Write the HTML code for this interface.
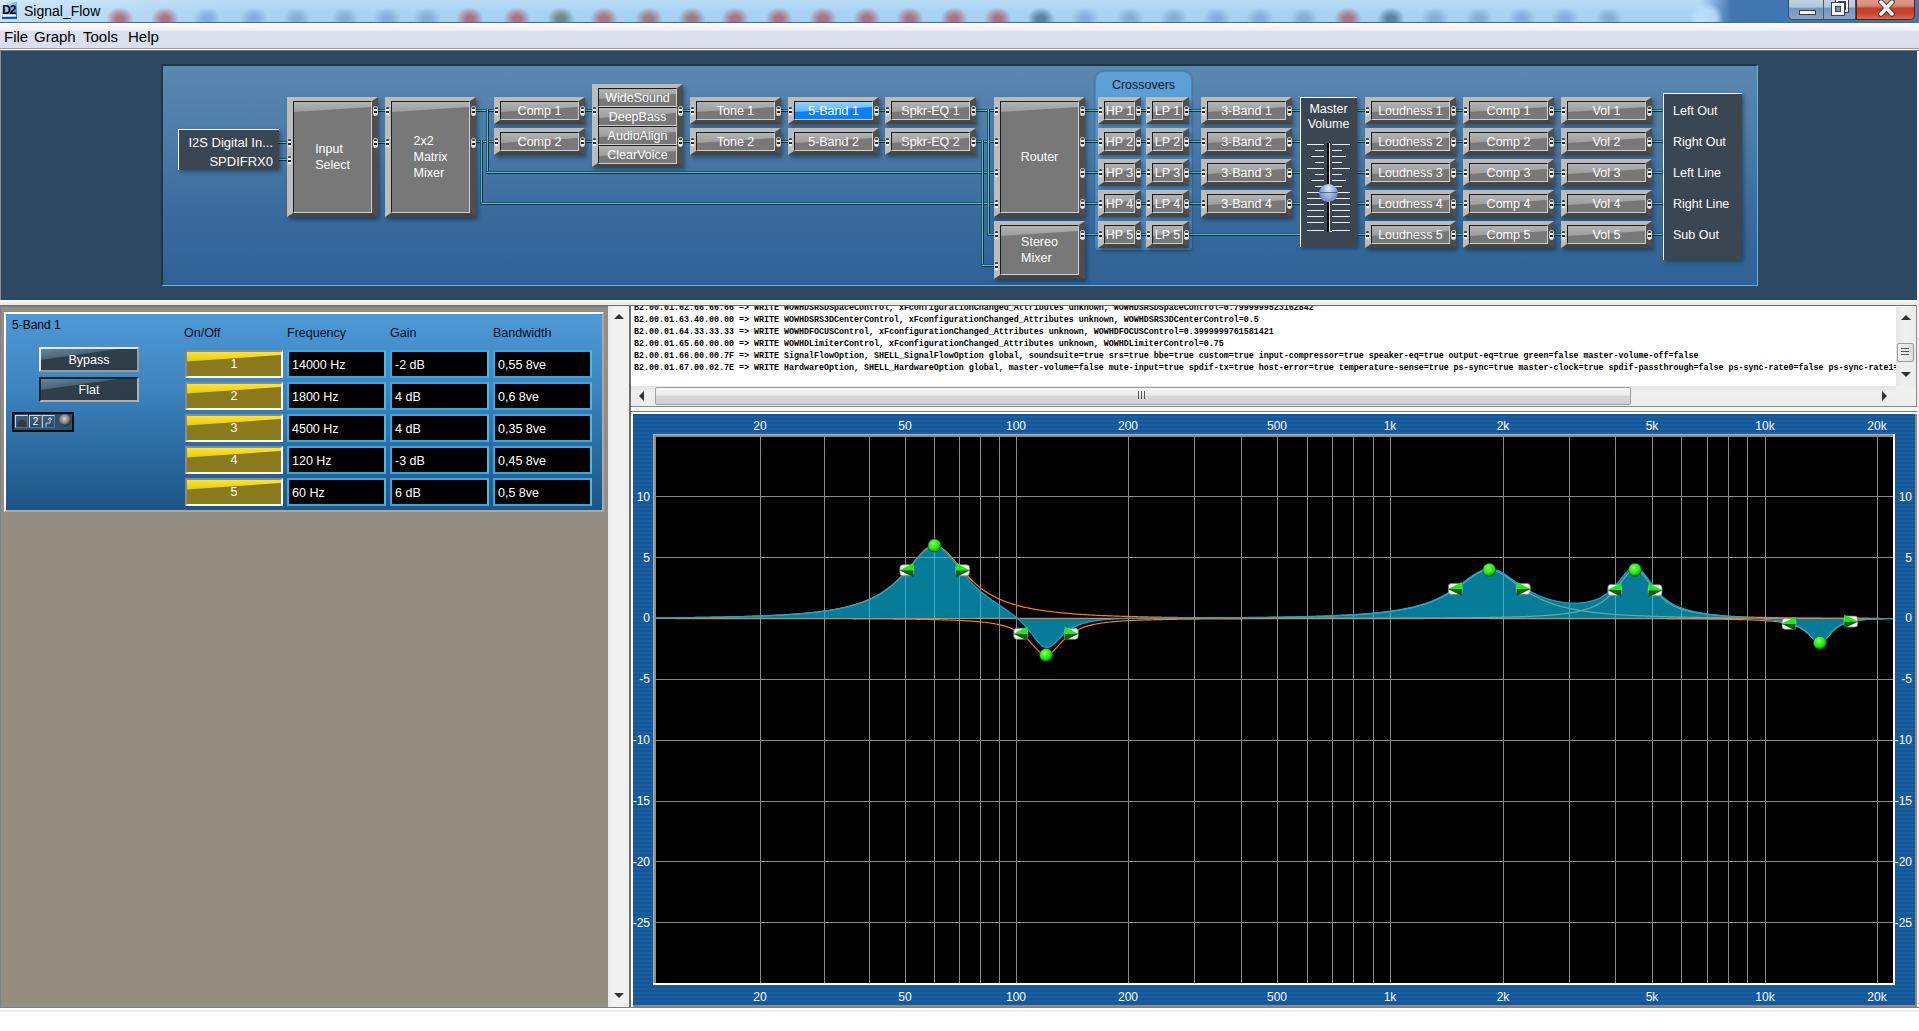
<!DOCTYPE html>
<html><head><meta charset="utf-8"><style>
*{margin:0;padding:0}
html,body{width:1919px;height:1031px;overflow:hidden;background:#fff;position:relative;font-family:'Liberation Sans',sans-serif}
.blk{position:absolute;box-sizing:border-box;border-top:4px solid #bababa;border-left:6px solid #bcbcbc;border-right:6px solid #4e4e4e;border-bottom:4px solid #454545;box-shadow:2px 3px 4px rgba(0,0,0,0.35);background:#777}
.inn{position:absolute;left:0;right:0;top:0;bottom:0;box-sizing:border-box;border-top:1px solid #1c1c1c;border-left:1px solid #1c1c1c;border-right:1px solid #d0d0d0;border-bottom:1px solid #d0d0d0;background:#787878;display:flex;align-items:center;justify-content:center;color:#fff;font-family:'Liberation Sans',sans-serif;white-space:nowrap}
.inn::before{content:'';position:absolute;left:0;top:0;right:0;height:11px;background:linear-gradient(180deg,#b2b2b2,#9a9a9a);clip-path:polygon(0 0,100% 0,100% 5px,0 10px)}
.inn.sel{background:#0a80ff}
.inn.sel::before{background:linear-gradient(180deg,#90d0ff,#5ab0ff)}
.lbl{display:inline-block;text-align:left;position:relative;z-index:1}
.wh{position:absolute;height:3px;background:linear-gradient(180deg,#1d5a72 0,#1d5a72 33.3%,#5ab8d0 33.3%,#5ab8d0 66.6%,#0e2f3c 66.6%)}
.wv{position:absolute;width:3px;background:linear-gradient(90deg,#1d5a72 0,#1d5a72 33.3%,#5ab8d0 33.3%,#5ab8d0 66.6%,#0e2f3c 66.6%)}
.pin{position:absolute;width:5px;height:10px;box-sizing:border-box;border:1px solid #c4c4c4;border-radius:2px;background:linear-gradient(180deg,#444 0,#444 30%,#fff 30%,#fff 55%,#2a2a2a 55%,#2a2a2a 72%,#f2f2f2 72%)}
.dbox{position:absolute;box-sizing:border-box;background:#3a4652;border-top:1px solid #fff;border-left:1px solid #fff;box-shadow:2px 2px 4px rgba(0,0,0,0.35)}
.onoff{position:absolute;left:185px;width:98px;height:28px;box-sizing:border-box;border-top:2px solid #8a8a8a;border-left:2px solid #8a8a8a;border-right:2px solid #fff;border-bottom:2px solid #fff;background:#8a7a1e;font-family:'Liberation Sans',sans-serif;font-size:12.5px;color:#fff;text-align:center;line-height:25px;overflow:hidden}
.onoff::before{content:'';position:absolute;left:0;top:0;right:0;height:10px;background:linear-gradient(180deg,#ffe428,#e4c818);clip-path:polygon(0 0,100% 0,100% 3px,0 9.5px)}
.al{position:absolute;text-align:center;color:#fff;font-family:'Liberation Sans',sans-serif;font-size:12px;line-height:16px}
</style></head><body>
<div id="title" style="position:absolute;left:0;top:0;width:1919px;height:23px;overflow:hidden;background:linear-gradient(180deg,#b9dcf6 0%,#a9d3f3 50%,#a6d0f0 100%);">
<div style="position:absolute;left:0;top:0;width:1919px;height:23px;background:linear-gradient(90deg,rgba(255,255,255,0.35) 0%,rgba(255,255,255,0) 12%,rgba(255,255,255,0) 80%,rgba(50,105,165,0) 88.6%,rgba(40,95,160,0.8) 90.2%,rgba(40,95,160,0.8) 100%)"></div>
<div style="position:absolute;left:106px;top:7px;width:28px;height:24px;border-radius:50%;background:radial-gradient(ellipse,rgba(170,75,95,0.7) 0%,rgba(170,75,95,0.7) 20%,rgba(255,255,255,0) 70%)"></div>
<div style="position:absolute;left:151px;top:7px;width:28px;height:24px;border-radius:50%;background:radial-gradient(ellipse,rgba(170,75,95,0.7) 0%,rgba(170,75,95,0.7) 20%,rgba(255,255,255,0) 70%)"></div>
<div style="position:absolute;left:193px;top:7px;width:28px;height:24px;border-radius:50%;background:radial-gradient(ellipse,rgba(70,125,185,0.4) 0%,rgba(70,125,185,0.4) 20%,rgba(255,255,255,0) 70%)"></div>
<div style="position:absolute;left:240px;top:7px;width:28px;height:24px;border-radius:50%;background:radial-gradient(ellipse,rgba(70,125,185,0.4) 0%,rgba(70,125,185,0.4) 20%,rgba(255,255,255,0) 70%)"></div>
<div style="position:absolute;left:283px;top:7px;width:28px;height:24px;border-radius:50%;background:radial-gradient(ellipse,rgba(70,125,185,0.4) 0%,rgba(70,125,185,0.4) 20%,rgba(255,255,255,0) 70%)"></div>
<div style="position:absolute;left:331px;top:7px;width:28px;height:24px;border-radius:50%;background:radial-gradient(ellipse,rgba(70,125,185,0.4) 0%,rgba(70,125,185,0.4) 20%,rgba(255,255,255,0) 70%)"></div>
<div style="position:absolute;left:373px;top:7px;width:28px;height:24px;border-radius:50%;background:radial-gradient(ellipse,rgba(70,125,185,0.4) 0%,rgba(70,125,185,0.4) 20%,rgba(255,255,255,0) 70%)"></div>
<div style="position:absolute;left:413px;top:7px;width:28px;height:24px;border-radius:50%;background:radial-gradient(ellipse,rgba(70,125,185,0.4) 0%,rgba(70,125,185,0.4) 20%,rgba(255,255,255,0) 70%)"></div>
<div style="position:absolute;left:456px;top:7px;width:28px;height:24px;border-radius:50%;background:radial-gradient(ellipse,rgba(170,75,95,0.7) 0%,rgba(170,75,95,0.7) 20%,rgba(255,255,255,0) 70%)"></div>
<div style="position:absolute;left:503px;top:7px;width:28px;height:24px;border-radius:50%;background:radial-gradient(ellipse,rgba(170,75,95,0.7) 0%,rgba(170,75,95,0.7) 20%,rgba(255,255,255,0) 70%)"></div>
<div style="position:absolute;left:547px;top:7px;width:28px;height:24px;border-radius:50%;background:radial-gradient(ellipse,rgba(80,110,90,0.7) 0%,rgba(80,110,90,0.7) 20%,rgba(255,255,255,0) 70%)"></div>
<div style="position:absolute;left:590px;top:7px;width:28px;height:24px;border-radius:50%;background:radial-gradient(ellipse,rgba(170,75,95,0.7) 0%,rgba(170,75,95,0.7) 20%,rgba(255,255,255,0) 70%)"></div>
<div style="position:absolute;left:635px;top:7px;width:28px;height:24px;border-radius:50%;background:radial-gradient(ellipse,rgba(150,90,90,0.7) 0%,rgba(150,90,90,0.7) 20%,rgba(255,255,255,0) 70%)"></div>
<div style="position:absolute;left:678px;top:7px;width:28px;height:24px;border-radius:50%;background:radial-gradient(ellipse,rgba(150,90,90,0.7) 0%,rgba(150,90,90,0.7) 20%,rgba(255,255,255,0) 70%)"></div>
<div style="position:absolute;left:721px;top:7px;width:28px;height:24px;border-radius:50%;background:radial-gradient(ellipse,rgba(170,75,95,0.7) 0%,rgba(170,75,95,0.7) 20%,rgba(255,255,255,0) 70%)"></div>
<div style="position:absolute;left:765px;top:7px;width:28px;height:24px;border-radius:50%;background:radial-gradient(ellipse,rgba(170,75,95,0.7) 0%,rgba(170,75,95,0.7) 20%,rgba(255,255,255,0) 70%)"></div>
<div style="position:absolute;left:809px;top:7px;width:28px;height:24px;border-radius:50%;background:radial-gradient(ellipse,rgba(170,75,95,0.7) 0%,rgba(170,75,95,0.7) 20%,rgba(255,255,255,0) 70%)"></div>
<div style="position:absolute;left:853px;top:7px;width:28px;height:24px;border-radius:50%;background:radial-gradient(ellipse,rgba(170,75,95,0.7) 0%,rgba(170,75,95,0.7) 20%,rgba(255,255,255,0) 70%)"></div>
<div style="position:absolute;left:896px;top:7px;width:28px;height:24px;border-radius:50%;background:radial-gradient(ellipse,rgba(170,75,95,0.7) 0%,rgba(170,75,95,0.7) 20%,rgba(255,255,255,0) 70%)"></div>
<div style="position:absolute;left:940px;top:7px;width:28px;height:24px;border-radius:50%;background:radial-gradient(ellipse,rgba(170,75,95,0.7) 0%,rgba(170,75,95,0.7) 20%,rgba(255,255,255,0) 70%)"></div>
<div style="position:absolute;left:984px;top:7px;width:28px;height:24px;border-radius:50%;background:radial-gradient(ellipse,rgba(170,75,95,0.7) 0%,rgba(170,75,95,0.7) 20%,rgba(255,255,255,0) 70%)"></div>
<div style="position:absolute;left:1027px;top:7px;width:28px;height:24px;border-radius:50%;background:radial-gradient(ellipse,rgba(40,80,110,0.6) 0%,rgba(40,80,110,0.6) 20%,rgba(255,255,255,0) 70%)"></div>
<div style="position:absolute;left:1071px;top:7px;width:28px;height:24px;border-radius:50%;background:radial-gradient(ellipse,rgba(70,125,185,0.4) 0%,rgba(70,125,185,0.4) 20%,rgba(255,255,255,0) 70%)"></div>
<div style="position:absolute;left:1116px;top:7px;width:28px;height:24px;border-radius:50%;background:radial-gradient(ellipse,rgba(70,125,185,0.4) 0%,rgba(70,125,185,0.4) 20%,rgba(255,255,255,0) 70%)"></div>
<div style="position:absolute;left:1160px;top:7px;width:28px;height:24px;border-radius:50%;background:radial-gradient(ellipse,rgba(70,125,185,0.4) 0%,rgba(70,125,185,0.4) 20%,rgba(255,255,255,0) 70%)"></div>
<div style="position:absolute;left:1203px;top:7px;width:28px;height:24px;border-radius:50%;background:radial-gradient(ellipse,rgba(70,125,185,0.4) 0%,rgba(70,125,185,0.4) 20%,rgba(255,255,255,0) 70%)"></div>
<div style="position:absolute;left:1246px;top:7px;width:28px;height:24px;border-radius:50%;background:radial-gradient(ellipse,rgba(70,125,185,0.4) 0%,rgba(70,125,185,0.4) 20%,rgba(255,255,255,0) 70%)"></div>
<div style="position:absolute;left:1290px;top:7px;width:28px;height:24px;border-radius:50%;background:radial-gradient(ellipse,rgba(70,125,185,0.4) 0%,rgba(70,125,185,0.4) 20%,rgba(255,255,255,0) 70%)"></div>
<div style="position:absolute;left:1334px;top:7px;width:28px;height:24px;border-radius:50%;background:radial-gradient(ellipse,rgba(170,75,95,0.7) 0%,rgba(170,75,95,0.7) 20%,rgba(255,255,255,0) 70%)"></div>
<div style="position:absolute;left:1377px;top:7px;width:28px;height:24px;border-radius:50%;background:radial-gradient(ellipse,rgba(40,80,110,0.6) 0%,rgba(40,80,110,0.6) 20%,rgba(255,255,255,0) 70%)"></div>
<div style="position:absolute;left:1421px;top:7px;width:28px;height:24px;border-radius:50%;background:radial-gradient(ellipse,rgba(70,125,185,0.4) 0%,rgba(70,125,185,0.4) 20%,rgba(255,255,255,0) 70%)"></div>
<div style="position:absolute;left:1465px;top:7px;width:28px;height:24px;border-radius:50%;background:radial-gradient(ellipse,rgba(70,125,185,0.4) 0%,rgba(70,125,185,0.4) 20%,rgba(255,255,255,0) 70%)"></div>
<div style="position:absolute;left:1508px;top:7px;width:28px;height:24px;border-radius:50%;background:radial-gradient(ellipse,rgba(70,125,185,0.4) 0%,rgba(70,125,185,0.4) 20%,rgba(255,255,255,0) 70%)"></div>
<div style="position:absolute;left:1551px;top:7px;width:28px;height:24px;border-radius:50%;background:radial-gradient(ellipse,rgba(70,125,185,0.4) 0%,rgba(70,125,185,0.4) 20%,rgba(255,255,255,0) 70%)"></div>
<div style="position:absolute;left:1595px;top:7px;width:28px;height:24px;border-radius:50%;background:radial-gradient(ellipse,rgba(70,125,185,0.4) 0%,rgba(70,125,185,0.4) 20%,rgba(255,255,255,0) 70%)"></div>
<div style="position:absolute;left:1688px;top:2px;width:36px;height:34px;border-radius:50%;background:radial-gradient(circle,rgba(190,225,255,0.9) 0%,rgba(190,225,255,0.8) 40%,rgba(190,225,255,0) 70%)"></div>
<svg style="position:absolute;left:1px;top:1px" width="18" height="18" viewBox="0 0 18 18"><defs><linearGradient id="ig" x1="0" y1="0" x2="1" y2="1"><stop offset="0" stop-color="#f0f6ff"/><stop offset="0.45" stop-color="#8cc0f0"/><stop offset="1" stop-color="#1a64b0"/></linearGradient></defs><rect x="1" y="1" width="15" height="17" fill="url(#ig)"/><text x="1.2" y="12.5" font-family="Liberation Sans" font-weight="bold" font-size="12" letter-spacing="-1.2" fill="#000">D2</text><rect x="2" y="13.5" width="13" height="2" fill="#fff"/><rect x="1" y="16" width="15" height="2" fill="#0a5aa8"/></svg>
<div style="position:absolute;left:24px;top:3px;font:14px 'Liberation Sans',sans-serif;color:#000;">Signal_Flow</div>
<div style="position:absolute;left:1788px;top:-3px;width:68px;height:23px;border:1px solid #3a4a60;border-top:none;border-radius:0 0 0 5px;background:linear-gradient(180deg,#c8d8ea 0%,#b0c6de 45%,#7595bb 52%,#8aa6c8 100%);box-sizing:border-box"></div>
<div style="position:absolute;left:1823px;top:0;width:1px;height:19px;background:#4a5a70"></div>
<div style="position:absolute;left:1856px;top:-3px;width:59px;height:23px;border:1px solid #5a2018;border-top:none;border-radius:0 0 5px 0;background:linear-gradient(180deg,#e6a090 0%,#d88a78 40%,#c24028 52%,#c84a30 80%,#dc7050 100%);box-sizing:border-box"></div>
<svg style="position:absolute;left:1788px;top:0" width="130" height="20" viewBox="0 0 130 20"><rect x="11.5" y="10.5" width="16" height="4" fill="#f4f4f4" stroke="#3a4050" stroke-width="1"/><rect x="47.5" y="-1.5" width="13" height="14" fill="#f4f4f4" stroke="#3a4050" stroke-width="1"/><rect x="50.5" y="1.5" width="7" height="8" fill="#8aa0c0" stroke="#3a4050" stroke-width="1"/><rect x="43.5" y="2.5" width="13" height="13" fill="#f4f4f4" stroke="#3a4050" stroke-width="1"/><rect x="47.5" y="6.5" width="5" height="5" fill="#7a90b0" stroke="#3a4050" stroke-width="1"/><path d="M93,2 L104,14 M104,2 L93,14" stroke="#3a3a3a" stroke-width="5.5" stroke-linecap="round"/><path d="M93,2 L104,14 M104,2 L93,14" stroke="#f2f2f2" stroke-width="3.5" stroke-linecap="round"/></svg>
</div>
<div style="position:absolute;left:0;top:22px;width:1919px;height:1px;background:#4a6a88"></div>
<div style="position:absolute;left:0;top:23px;width:1919px;height:25px;background:linear-gradient(180deg,#fbfcfe 0%,#f0f2f8 28%,#dde1ef 34%,#dadeee 100%)"></div>
<div style="position:absolute;left:4px;top:28px;font:15px 'Liberation Sans',sans-serif;color:#000">File</div>
<div style="position:absolute;left:34px;top:28px;font:15px 'Liberation Sans',sans-serif;color:#000">Graph</div>
<div style="position:absolute;left:83px;top:28px;font:15px 'Liberation Sans',sans-serif;color:#000">Tools</div>
<div style="position:absolute;left:128px;top:28px;font:15px 'Liberation Sans',sans-serif;color:#000">Help</div>
<div style="position:absolute;left:0;top:48px;width:1919px;height:1px;background:#9a9a9a"></div>
<div style="position:absolute;left:0;top:49px;width:1919px;height:1px;background:#ffffff"></div>
<div style="position:absolute;left:0;top:50px;width:1919px;height:1px;background:#707070"></div>
<div style="position:absolute;left:0;top:51px;width:1918px;height:249px;background:#2d4862"></div>
<div style="position:absolute;left:0;top:51px;width:1px;height:249px;background:#8a8e94"></div>
<div style="position:absolute;left:0;top:300px;width:1919px;height:2px;background:#fdfdfd"></div>
<div style="position:absolute;left:0;top:302px;width:1919px;height:3px;background:#eeeeee"></div>
<div style="position:absolute;left:0;top:305px;width:1919px;height:1px;background:#6a6a6a"></div>
<div style="position:absolute;left:1917px;top:51px;width:2px;height:956px;background:#f0f0f0"></div>
<div style="position:absolute;left:161px;top:64px;width:1597px;height:222px;box-sizing:border-box;border-top:2px solid #1b3846;border-left:2px solid #1b3846;border-right:1px solid #62b8dc;border-bottom:1px solid #62b8dc;background:linear-gradient(180deg,#5b88af 0%,#4b7ba8 35%,#3a6c9e 65%,#2f6294 100%)"></div>
<div style="position:absolute;left:1095px;top:71px;width:97px;height:179px;box-sizing:border-box;border-radius:9px 9px 3px 3px;border:1px solid #4a88bb;background:linear-gradient(180deg,#5ea2d8 0%,#5096cf 50%,#4a8cc6 100%);box-shadow:0 0 2px rgba(20,50,80,0.4)"></div>
<div style="position:absolute;left:1095px;top:78px;width:97px;text-align:center;font-family:'Liberation Sans',sans-serif;font-size:12.5px;color:#0c1830">Crossovers</div>
<div class="wh" style="left:279px;top:141px;width:11px"></div>
<div class="wh" style="left:279px;top:158px;width:11px"></div>
<div class="wh" style="left:375px;top:109px;width:15px"></div>
<div class="wh" style="left:375px;top:141px;width:15px"></div>
<div class="wh" style="left:473px;top:109px;width:24px"></div>
<div class="wh" style="left:473px;top:140px;width:24px"></div>
<div class="wv" style="left:486px;top:109px;height:65px"></div>
<div class="wh" style="left:487px;top:171px;width:510px"></div>
<div class="wv" style="left:480px;top:140px;height:65px"></div>
<div class="wh" style="left:481px;top:202px;width:516px"></div>
<div class="wh" style="left:582px;top:109px;width:13px"></div>
<div class="wh" style="left:582px;top:140px;width:13px"></div>
<div class="wh" style="left:680px;top:109px;width:13px"></div>
<div class="wh" style="left:680px;top:140px;width:13px"></div>
<div class="wh" style="left:778px;top:109px;width:13px"></div>
<div class="wh" style="left:778px;top:140px;width:13px"></div>
<div class="wh" style="left:876px;top:109px;width:12px"></div>
<div class="wh" style="left:876px;top:140px;width:12px"></div>
<div class="wh" style="left:973px;top:109px;width:24px"></div>
<div class="wh" style="left:973px;top:140px;width:24px"></div>
<div class="wv" style="left:987px;top:109px;height:127px"></div>
<div class="wh" style="left:988px;top:233px;width:9px"></div>
<div class="wv" style="left:981px;top:140px;height:127px"></div>
<div class="wh" style="left:982px;top:264px;width:15px"></div>
<div class="wh" style="left:1082px;top:109px;width:19px"></div>
<div class="wh" style="left:1138px;top:109px;width:11px"></div>
<div class="wh" style="left:1186px;top:109px;width:18px"></div>
<div class="wh" style="left:1289px;top:109px;width:11px"></div>
<div class="wh" style="left:1357px;top:109px;width:11px"></div>
<div class="wh" style="left:1453px;top:109px;width:13px"></div>
<div class="wh" style="left:1551px;top:109px;width:13px"></div>
<div class="wh" style="left:1649px;top:109px;width:14px"></div>
<div class="wh" style="left:1082px;top:140px;width:19px"></div>
<div class="wh" style="left:1138px;top:140px;width:11px"></div>
<div class="wh" style="left:1186px;top:140px;width:18px"></div>
<div class="wh" style="left:1289px;top:140px;width:11px"></div>
<div class="wh" style="left:1357px;top:140px;width:11px"></div>
<div class="wh" style="left:1453px;top:140px;width:13px"></div>
<div class="wh" style="left:1551px;top:140px;width:13px"></div>
<div class="wh" style="left:1649px;top:140px;width:14px"></div>
<div class="wh" style="left:1082px;top:171px;width:19px"></div>
<div class="wh" style="left:1138px;top:171px;width:11px"></div>
<div class="wh" style="left:1186px;top:171px;width:18px"></div>
<div class="wh" style="left:1289px;top:171px;width:11px"></div>
<div class="wh" style="left:1357px;top:171px;width:11px"></div>
<div class="wh" style="left:1453px;top:171px;width:13px"></div>
<div class="wh" style="left:1551px;top:171px;width:13px"></div>
<div class="wh" style="left:1649px;top:171px;width:14px"></div>
<div class="wh" style="left:1082px;top:202px;width:19px"></div>
<div class="wh" style="left:1138px;top:202px;width:11px"></div>
<div class="wh" style="left:1186px;top:202px;width:18px"></div>
<div class="wh" style="left:1289px;top:202px;width:11px"></div>
<div class="wh" style="left:1357px;top:202px;width:11px"></div>
<div class="wh" style="left:1453px;top:202px;width:13px"></div>
<div class="wh" style="left:1551px;top:202px;width:13px"></div>
<div class="wh" style="left:1649px;top:202px;width:14px"></div>
<div class="wh" style="left:1082px;top:233px;width:19px"></div>
<div class="wh" style="left:1138px;top:233px;width:11px"></div>
<div class="wh" style="left:1186px;top:233px;width:114px"></div>
<div class="wh" style="left:1357px;top:233px;width:11px"></div>
<div class="wh" style="left:1453px;top:233px;width:13px"></div>
<div class="wh" style="left:1551px;top:233px;width:13px"></div>
<div class="wh" style="left:1649px;top:233px;width:14px"></div>
<div class="dbox" style="left:178px;top:129px;width:101px;height:41px"></div>
<div style="position:absolute;left:178px;top:133px;width:95px;text-align:right;font-family:'Liberation Sans',sans-serif;font-size:13px;line-height:19px;color:#fff">I2S Digital In...<br>SPDIFRX0</div>
<div class="blk" style="left:287px;top:97px;width:91px;height:120px"><div class="inn" style="font-size:12.5px;line-height:16px;"><div class="lbl">Input<br>Select</div></div></div><div class="pin" style="left:287px;top:138px"></div><div class="pin" style="left:287px;top:155px"></div><div class="pin" style="left:373px;top:106px"></div><div class="pin" style="left:373px;top:138px"></div>
<div class="blk" style="left:385px;top:97px;width:91px;height:120px"><div class="inn" style="font-size:12.5px;line-height:16px;"><div class="lbl">2x2<br>Matrix<br>Mixer</div></div></div><div class="pin" style="left:385px;top:106px"></div><div class="pin" style="left:385px;top:138px"></div><div class="pin" style="left:471px;top:106px"></div><div class="pin" style="left:471px;top:138px"></div>
<div class="blk" style="left:494px;top:97px;width:91px;height:27px"><div class="inn" style="font-size:12.5px;"><div class="lbl">Comp 1</div></div></div><div class="pin" style="left:494px;top:106px"></div><div class="pin" style="left:580px;top:106px"></div>
<div class="blk" style="left:690px;top:97px;width:91px;height:27px"><div class="inn" style="font-size:12.5px;"><div class="lbl">Tone 1</div></div></div><div class="pin" style="left:690px;top:106px"></div><div class="pin" style="left:776px;top:106px"></div>
<div class="blk" style="left:788px;top:97px;width:91px;height:27px"><div class="inn sel" style="font-size:12.5px;"><div class="lbl">5-Band 1</div></div></div><div class="pin" style="left:788px;top:106px"></div><div class="pin" style="left:874px;top:106px"></div>
<div class="blk" style="left:885px;top:97px;width:91px;height:27px"><div class="inn" style="font-size:12.5px;"><div class="lbl">Spkr-EQ 1</div></div></div><div class="pin" style="left:885px;top:106px"></div><div class="pin" style="left:971px;top:106px"></div>
<div class="blk" style="left:494px;top:128px;width:91px;height:27px"><div class="inn" style="font-size:12.5px;"><div class="lbl">Comp 2</div></div></div><div class="pin" style="left:494px;top:137px"></div><div class="pin" style="left:580px;top:137px"></div>
<div class="blk" style="left:690px;top:128px;width:91px;height:27px"><div class="inn" style="font-size:12.5px;"><div class="lbl">Tone 2</div></div></div><div class="pin" style="left:690px;top:137px"></div><div class="pin" style="left:776px;top:137px"></div>
<div class="blk" style="left:788px;top:128px;width:91px;height:27px"><div class="inn" style="font-size:12.5px;"><div class="lbl">5-Band 2</div></div></div><div class="pin" style="left:788px;top:137px"></div><div class="pin" style="left:874px;top:137px"></div>
<div class="blk" style="left:885px;top:128px;width:91px;height:27px"><div class="inn" style="font-size:12.5px;"><div class="lbl">Spkr-EQ 2</div></div></div><div class="pin" style="left:885px;top:137px"></div><div class="pin" style="left:971px;top:137px"></div>
<div class="blk" style="left:592px;top:84px;width:91px;height:83px">
<div class="inn" style="top:0px;height:19px;bottom:auto;font-size:12.5px"><div class="lbl">WideSound</div></div>
<div class="inn" style="top:19px;height:19px;bottom:auto;font-size:12.5px"><div class="lbl">DeepBass</div></div>
<div class="inn" style="top:38px;height:19px;bottom:auto;font-size:12.5px"><div class="lbl">AudioAlign</div></div>
<div class="inn" style="top:57px;height:19px;bottom:auto;font-size:12.5px"><div class="lbl">ClearVoice</div></div>
</div>
<div class="pin" style="left:592px;top:106px"></div>
<div class="pin" style="left:592px;top:137px"></div>
<div class="pin" style="left:678px;top:106px"></div>
<div class="pin" style="left:678px;top:137px"></div>
<div class="blk" style="left:994px;top:97px;width:91px;height:120px"><div class="inn" style="font-size:12.5px;"><div class="lbl">Router</div></div></div><div class="pin" style="left:994px;top:106px"></div><div class="pin" style="left:994px;top:137px"></div><div class="pin" style="left:994px;top:168px"></div><div class="pin" style="left:994px;top:199px"></div><div class="pin" style="left:1080px;top:106px"></div><div class="pin" style="left:1080px;top:137px"></div><div class="pin" style="left:1080px;top:168px"></div><div class="pin" style="left:1080px;top:199px"></div>
<div class="blk" style="left:994px;top:221px;width:91px;height:58px"><div class="inn" style="font-size:12.5px;line-height:16px;"><div class="lbl">Stereo<br>Mixer</div></div></div><div class="pin" style="left:994px;top:230px"></div><div class="pin" style="left:994px;top:261px"></div><div class="pin" style="left:1080px;top:230px"></div>
<div class="blk" style="left:1098px;top:97px;width:43px;height:27px"><div class="inn" style="font-size:12.5px;"><div class="lbl">HP 1</div></div></div><div class="pin" style="left:1098px;top:106px"></div><div class="pin" style="left:1136px;top:106px"></div>
<div class="blk" style="left:1146px;top:97px;width:43px;height:27px"><div class="inn" style="font-size:12.5px;"><div class="lbl">LP 1</div></div></div><div class="pin" style="left:1146px;top:106px"></div><div class="pin" style="left:1184px;top:106px"></div>
<div class="blk" style="left:1201px;top:97px;width:91px;height:27px"><div class="inn" style="font-size:12.5px;"><div class="lbl">3-Band 1</div></div></div><div class="pin" style="left:1201px;top:106px"></div><div class="pin" style="left:1287px;top:106px"></div>
<div class="blk" style="left:1365px;top:97px;width:91px;height:27px"><div class="inn" style="font-size:12.5px;"><div class="lbl">Loudness 1</div></div></div><div class="pin" style="left:1365px;top:106px"></div><div class="pin" style="left:1451px;top:106px"></div>
<div class="blk" style="left:1463px;top:97px;width:91px;height:27px"><div class="inn" style="font-size:12.5px;"><div class="lbl">Comp 1</div></div></div><div class="pin" style="left:1463px;top:106px"></div><div class="pin" style="left:1549px;top:106px"></div>
<div class="blk" style="left:1561px;top:97px;width:91px;height:27px"><div class="inn" style="font-size:12.5px;"><div class="lbl">Vol 1</div></div></div><div class="pin" style="left:1561px;top:106px"></div><div class="pin" style="left:1647px;top:106px"></div>
<div class="blk" style="left:1098px;top:128px;width:43px;height:27px"><div class="inn" style="font-size:12.5px;"><div class="lbl">HP 2</div></div></div><div class="pin" style="left:1098px;top:137px"></div><div class="pin" style="left:1136px;top:137px"></div>
<div class="blk" style="left:1146px;top:128px;width:43px;height:27px"><div class="inn" style="font-size:12.5px;"><div class="lbl">LP 2</div></div></div><div class="pin" style="left:1146px;top:137px"></div><div class="pin" style="left:1184px;top:137px"></div>
<div class="blk" style="left:1201px;top:128px;width:91px;height:27px"><div class="inn" style="font-size:12.5px;"><div class="lbl">3-Band 2</div></div></div><div class="pin" style="left:1201px;top:137px"></div><div class="pin" style="left:1287px;top:137px"></div>
<div class="blk" style="left:1365px;top:128px;width:91px;height:27px"><div class="inn" style="font-size:12.5px;"><div class="lbl">Loudness 2</div></div></div><div class="pin" style="left:1365px;top:137px"></div><div class="pin" style="left:1451px;top:137px"></div>
<div class="blk" style="left:1463px;top:128px;width:91px;height:27px"><div class="inn" style="font-size:12.5px;"><div class="lbl">Comp 2</div></div></div><div class="pin" style="left:1463px;top:137px"></div><div class="pin" style="left:1549px;top:137px"></div>
<div class="blk" style="left:1561px;top:128px;width:91px;height:27px"><div class="inn" style="font-size:12.5px;"><div class="lbl">Vol 2</div></div></div><div class="pin" style="left:1561px;top:137px"></div><div class="pin" style="left:1647px;top:137px"></div>
<div class="blk" style="left:1098px;top:159px;width:43px;height:27px"><div class="inn" style="font-size:12.5px;"><div class="lbl">HP 3</div></div></div><div class="pin" style="left:1098px;top:168px"></div><div class="pin" style="left:1136px;top:168px"></div>
<div class="blk" style="left:1146px;top:159px;width:43px;height:27px"><div class="inn" style="font-size:12.5px;"><div class="lbl">LP 3</div></div></div><div class="pin" style="left:1146px;top:168px"></div><div class="pin" style="left:1184px;top:168px"></div>
<div class="blk" style="left:1201px;top:159px;width:91px;height:27px"><div class="inn" style="font-size:12.5px;"><div class="lbl">3-Band 3</div></div></div><div class="pin" style="left:1201px;top:168px"></div><div class="pin" style="left:1287px;top:168px"></div>
<div class="blk" style="left:1365px;top:159px;width:91px;height:27px"><div class="inn" style="font-size:12.5px;"><div class="lbl">Loudness 3</div></div></div><div class="pin" style="left:1365px;top:168px"></div><div class="pin" style="left:1451px;top:168px"></div>
<div class="blk" style="left:1463px;top:159px;width:91px;height:27px"><div class="inn" style="font-size:12.5px;"><div class="lbl">Comp 3</div></div></div><div class="pin" style="left:1463px;top:168px"></div><div class="pin" style="left:1549px;top:168px"></div>
<div class="blk" style="left:1561px;top:159px;width:91px;height:27px"><div class="inn" style="font-size:12.5px;"><div class="lbl">Vol 3</div></div></div><div class="pin" style="left:1561px;top:168px"></div><div class="pin" style="left:1647px;top:168px"></div>
<div class="blk" style="left:1098px;top:190px;width:43px;height:27px"><div class="inn" style="font-size:12.5px;"><div class="lbl">HP 4</div></div></div><div class="pin" style="left:1098px;top:199px"></div><div class="pin" style="left:1136px;top:199px"></div>
<div class="blk" style="left:1146px;top:190px;width:43px;height:27px"><div class="inn" style="font-size:12.5px;"><div class="lbl">LP 4</div></div></div><div class="pin" style="left:1146px;top:199px"></div><div class="pin" style="left:1184px;top:199px"></div>
<div class="blk" style="left:1201px;top:190px;width:91px;height:27px"><div class="inn" style="font-size:12.5px;"><div class="lbl">3-Band 4</div></div></div><div class="pin" style="left:1201px;top:199px"></div><div class="pin" style="left:1287px;top:199px"></div>
<div class="blk" style="left:1365px;top:190px;width:91px;height:27px"><div class="inn" style="font-size:12.5px;"><div class="lbl">Loudness 4</div></div></div><div class="pin" style="left:1365px;top:199px"></div><div class="pin" style="left:1451px;top:199px"></div>
<div class="blk" style="left:1463px;top:190px;width:91px;height:27px"><div class="inn" style="font-size:12.5px;"><div class="lbl">Comp 4</div></div></div><div class="pin" style="left:1463px;top:199px"></div><div class="pin" style="left:1549px;top:199px"></div>
<div class="blk" style="left:1561px;top:190px;width:91px;height:27px"><div class="inn" style="font-size:12.5px;"><div class="lbl">Vol 4</div></div></div><div class="pin" style="left:1561px;top:199px"></div><div class="pin" style="left:1647px;top:199px"></div>
<div class="blk" style="left:1098px;top:221px;width:43px;height:27px"><div class="inn" style="font-size:12.5px;"><div class="lbl">HP 5</div></div></div><div class="pin" style="left:1098px;top:230px"></div><div class="pin" style="left:1136px;top:230px"></div>
<div class="blk" style="left:1146px;top:221px;width:43px;height:27px"><div class="inn" style="font-size:12.5px;"><div class="lbl">LP 5</div></div></div><div class="pin" style="left:1146px;top:230px"></div><div class="pin" style="left:1184px;top:230px"></div>
<div class="blk" style="left:1365px;top:221px;width:91px;height:27px"><div class="inn" style="font-size:12.5px;"><div class="lbl">Loudness 5</div></div></div><div class="pin" style="left:1365px;top:230px"></div><div class="pin" style="left:1451px;top:230px"></div>
<div class="blk" style="left:1463px;top:221px;width:91px;height:27px"><div class="inn" style="font-size:12.5px;"><div class="lbl">Comp 5</div></div></div><div class="pin" style="left:1463px;top:230px"></div><div class="pin" style="left:1549px;top:230px"></div>
<div class="blk" style="left:1561px;top:221px;width:91px;height:27px"><div class="inn" style="font-size:12.5px;"><div class="lbl">Vol 5</div></div></div><div class="pin" style="left:1561px;top:230px"></div><div class="pin" style="left:1647px;top:230px"></div>
<div class="dbox" style="left:1300px;top:97px;width:57px;height:150px"></div>
<div style="position:absolute;left:1300px;top:102px;width:57px;text-align:center;font-family:'Liberation Sans',sans-serif;font-size:12.5px;line-height:14.5px;color:#fff">Master<br>Volume</div>
<div style="position:absolute;left:1307px;top:144px;width:17px;height:1px;background:#f0f0f0"></div>
<div style="position:absolute;left:1332px;top:144px;width:18px;height:1px;background:#f0f0f0"></div>
<div style="position:absolute;left:1315px;top:150px;width:9px;height:1px;background:#f0f0f0"></div>
<div style="position:absolute;left:1332px;top:150px;width:10px;height:1px;background:#f0f0f0"></div>
<div style="position:absolute;left:1311px;top:156px;width:13px;height:1px;background:#f0f0f0"></div>
<div style="position:absolute;left:1332px;top:156px;width:14px;height:1px;background:#f0f0f0"></div>
<div style="position:absolute;left:1315px;top:162px;width:9px;height:1px;background:#f0f0f0"></div>
<div style="position:absolute;left:1332px;top:162px;width:10px;height:1px;background:#f0f0f0"></div>
<div style="position:absolute;left:1307px;top:168px;width:17px;height:1px;background:#f0f0f0"></div>
<div style="position:absolute;left:1332px;top:168px;width:18px;height:1px;background:#f0f0f0"></div>
<div style="position:absolute;left:1315px;top:174px;width:9px;height:1px;background:#f0f0f0"></div>
<div style="position:absolute;left:1332px;top:174px;width:10px;height:1px;background:#f0f0f0"></div>
<div style="position:absolute;left:1311px;top:180px;width:13px;height:1px;background:#f0f0f0"></div>
<div style="position:absolute;left:1332px;top:180px;width:14px;height:1px;background:#f0f0f0"></div>
<div style="position:absolute;left:1315px;top:186px;width:9px;height:1px;background:#f0f0f0"></div>
<div style="position:absolute;left:1332px;top:186px;width:10px;height:1px;background:#f0f0f0"></div>
<div style="position:absolute;left:1307px;top:192px;width:17px;height:1px;background:#f0f0f0"></div>
<div style="position:absolute;left:1332px;top:192px;width:18px;height:1px;background:#f0f0f0"></div>
<div style="position:absolute;left:1307px;top:198px;width:17px;height:1px;background:#f0f0f0"></div>
<div style="position:absolute;left:1332px;top:198px;width:18px;height:1px;background:#f0f0f0"></div>
<div style="position:absolute;left:1307px;top:204px;width:17px;height:1px;background:#f0f0f0"></div>
<div style="position:absolute;left:1332px;top:204px;width:18px;height:1px;background:#f0f0f0"></div>
<div style="position:absolute;left:1307px;top:210px;width:17px;height:1px;background:#f0f0f0"></div>
<div style="position:absolute;left:1332px;top:210px;width:18px;height:1px;background:#f0f0f0"></div>
<div style="position:absolute;left:1307px;top:216px;width:17px;height:1px;background:#f0f0f0"></div>
<div style="position:absolute;left:1332px;top:216px;width:18px;height:1px;background:#f0f0f0"></div>
<div style="position:absolute;left:1307px;top:222px;width:17px;height:1px;background:#f0f0f0"></div>
<div style="position:absolute;left:1332px;top:222px;width:18px;height:1px;background:#f0f0f0"></div>
<div style="position:absolute;left:1307px;top:230px;width:17px;height:1px;background:#f0f0f0"></div>
<div style="position:absolute;left:1332px;top:230px;width:18px;height:1px;background:#f0f0f0"></div>
<div style="position:absolute;left:1327px;top:143px;width:2px;height:89px;background:#000;border-right:1px solid #ddd"></div>
<div style="position:absolute;left:1329px;top:231px;width:3px;height:1px;background:#ddd"></div>
<div style="position:absolute;left:1319px;top:184px;width:19px;height:18px;border-radius:50%;background:radial-gradient(ellipse at 50% 25%,#e8eeff 0%,#a8b8e0 35%,#7088c8 75%,#5068a8 100%);box-shadow:0 0 1px #223"></div>
<div style="position:absolute;left:1320px;top:192px;width:17px;height:1px;background:rgba(60,80,130,0.8)"></div>
<div class="dbox" style="left:1663px;top:93px;width:79px;height:167px"></div>
<div style="position:absolute;left:1673px;top:103.5px;font-family:'Liberation Sans',sans-serif;font-size:12.5px;color:#fff">Left Out</div>
<div style="position:absolute;left:1673px;top:134.5px;font-family:'Liberation Sans',sans-serif;font-size:12.5px;color:#fff">Right Out</div>
<div style="position:absolute;left:1673px;top:165.5px;font-family:'Liberation Sans',sans-serif;font-size:12.5px;color:#fff">Left Line</div>
<div style="position:absolute;left:1673px;top:196.5px;font-family:'Liberation Sans',sans-serif;font-size:12.5px;color:#fff">Right Line</div>
<div style="position:absolute;left:1673px;top:227.5px;font-family:'Liberation Sans',sans-serif;font-size:12.5px;color:#fff">Sub Out</div>
<div style="position:absolute;left:0;top:306px;width:608px;height:701px;background:#968d81"></div>
<div style="position:absolute;left:0;top:306px;width:1px;height:701px;background:#7a8290"></div>
<div style="position:absolute;left:0;top:306px;width:608px;height:1px;background:#7a8290"></div>
<div style="position:absolute;left:4px;top:312px;width:600px;height:200px;box-sizing:border-box;border-top:2px solid #fff;border-left:2px solid #fff;border-right:2px solid #a8a8a8;border-bottom:2px solid #a8a8a8;background:linear-gradient(180deg,#4d9ad6 0%,#3d84c0 38%,#2c6ca2 68%,#1c5586 100%)"></div>
<div style="position:absolute;left:12px;top:318px;font-family:'Liberation Sans',sans-serif;font-size:12px;color:#000">5-Band 1</div>
<div style="position:absolute;left:184px;top:326px;font-family:'Liberation Sans',sans-serif;font-size:12.5px;color:#06101e">On/Off</div>
<div style="position:absolute;left:287px;top:326px;font-family:'Liberation Sans',sans-serif;font-size:12.5px;color:#06101e">Frequency</div>
<div style="position:absolute;left:390px;top:326px;font-family:'Liberation Sans',sans-serif;font-size:12.5px;color:#06101e">Gain</div>
<div style="position:absolute;left:493px;top:326px;font-family:'Liberation Sans',sans-serif;font-size:12.5px;color:#06101e">Bandwidth</div>
<div style="position:absolute;left:39px;top:347px;width:100px;height:25px;box-sizing:border-box;border-top:2px solid #e8e8e8;border-left:2px solid #e8e8e8;border-right:2px solid #9a9a9a;border-bottom:2px solid #9a9a9a;background:linear-gradient(172deg,#6a8598 0%,#4d6576 30%,#2e3f4c 33%,#2c3c48 100%);font-family:'Liberation Sans',sans-serif;font-size:12.5px;color:#fff;text-align:center;line-height:23px">Bypass</div>
<div style="position:absolute;left:39px;top:377px;width:100px;height:25px;box-sizing:border-box;border-top:2px solid #1a2630;border-left:2px solid #1a2630;border-right:2px solid #b0b0b0;border-bottom:2px solid #b0b0b0;background:linear-gradient(172deg,#6a8598 0%,#4d6576 30%,#2e3f4c 33%,#2c3c48 100%);font-family:'Liberation Sans',sans-serif;font-size:12.5px;color:#fff;text-align:center;line-height:23px">Flat</div>
<div style="position:absolute;left:12px;top:412px;width:62px;height:20px;box-sizing:border-box;border:2px solid #0a0e14;background:#2a5070"></div>
<div style="position:absolute;left:15.0px;top:415px;width:13px;height:13px;box-sizing:border-box;border-top:1px solid #c8d0d8;border-left:1px solid #c8d0d8;border-right:1px solid #607080;border-bottom:1px solid #607080;background:linear-gradient(180deg,#3a6080,#2a4a68)"></div>
<div style="position:absolute;left:28.5px;top:415px;width:13px;height:13px;box-sizing:border-box;border-top:1px solid #c8d0d8;border-left:1px solid #c8d0d8;border-right:1px solid #607080;border-bottom:1px solid #607080;background:linear-gradient(180deg,#3a6080,#2a4a68)"></div>
<div style="position:absolute;left:42.0px;top:415px;width:13px;height:13px;box-sizing:border-box;border-top:1px solid #c8d0d8;border-left:1px solid #c8d0d8;border-right:1px solid #607080;border-bottom:1px solid #607080;background:linear-gradient(180deg,#3a6080,#2a4a68)"></div>
<div style="position:absolute;left:18px;top:420px;width:8px;height:7px;border-radius:4px 4px 0 0;background:#303840"></div>
<div style="position:absolute;left:29px;top:415px;width:13px;text-align:center;font-family:'Liberation Sans',sans-serif;font-size:10px;line-height:13px;color:#fff">2</div>
<svg style="position:absolute;left:43px;top:415px" width="13" height="13"><path d="M3,12 V8 H7 V3 M5,5 L7,2.5 L9,5" stroke="#c8d0d8" stroke-width="1" fill="none"/></svg>
<div style="position:absolute;left:59px;top:414px;width:12px;height:12px;border-radius:50%;background:radial-gradient(circle at 45% 40%,#d0d0d0 0%,#808080 45%,#202020 75%,#000 100%)"></div>
<div class="onoff" style="top:350px">1</div>
<div style="position:absolute;left:287px;top:350px;width:99px;height:28px;box-sizing:border-box;border:2px solid #3aa8dc;border-right-color:#4ab8e8;background:#000;font-family:'Liberation Sans',sans-serif;font-size:12.5px;color:#fff;line-height:26px;padding-left:3px">14000 Hz</div>
<div style="position:absolute;left:390px;top:350px;width:99px;height:28px;box-sizing:border-box;border:2px solid #3aa8dc;border-right-color:#4ab8e8;background:#000;font-family:'Liberation Sans',sans-serif;font-size:12.5px;color:#fff;line-height:26px;padding-left:3px">-2 dB</div>
<div style="position:absolute;left:493px;top:350px;width:99px;height:28px;box-sizing:border-box;border:2px solid #3aa8dc;border-right-color:#4ab8e8;background:#000;font-family:'Liberation Sans',sans-serif;font-size:12.5px;color:#fff;line-height:26px;padding-left:3px">0,55 8ve</div>
<div class="onoff" style="top:382px">2</div>
<div style="position:absolute;left:287px;top:382px;width:99px;height:28px;box-sizing:border-box;border:2px solid #3aa8dc;border-right-color:#4ab8e8;background:#000;font-family:'Liberation Sans',sans-serif;font-size:12.5px;color:#fff;line-height:26px;padding-left:3px">1800 Hz</div>
<div style="position:absolute;left:390px;top:382px;width:99px;height:28px;box-sizing:border-box;border:2px solid #3aa8dc;border-right-color:#4ab8e8;background:#000;font-family:'Liberation Sans',sans-serif;font-size:12.5px;color:#fff;line-height:26px;padding-left:3px">4 dB</div>
<div style="position:absolute;left:493px;top:382px;width:99px;height:28px;box-sizing:border-box;border:2px solid #3aa8dc;border-right-color:#4ab8e8;background:#000;font-family:'Liberation Sans',sans-serif;font-size:12.5px;color:#fff;line-height:26px;padding-left:3px">0,6 8ve</div>
<div class="onoff" style="top:414px">3</div>
<div style="position:absolute;left:287px;top:414px;width:99px;height:28px;box-sizing:border-box;border:2px solid #3aa8dc;border-right-color:#4ab8e8;background:#000;font-family:'Liberation Sans',sans-serif;font-size:12.5px;color:#fff;line-height:26px;padding-left:3px">4500 Hz</div>
<div style="position:absolute;left:390px;top:414px;width:99px;height:28px;box-sizing:border-box;border:2px solid #3aa8dc;border-right-color:#4ab8e8;background:#000;font-family:'Liberation Sans',sans-serif;font-size:12.5px;color:#fff;line-height:26px;padding-left:3px">4 dB</div>
<div style="position:absolute;left:493px;top:414px;width:99px;height:28px;box-sizing:border-box;border:2px solid #3aa8dc;border-right-color:#4ab8e8;background:#000;font-family:'Liberation Sans',sans-serif;font-size:12.5px;color:#fff;line-height:26px;padding-left:3px">0,35 8ve</div>
<div class="onoff" style="top:446px">4</div>
<div style="position:absolute;left:287px;top:446px;width:99px;height:28px;box-sizing:border-box;border:2px solid #3aa8dc;border-right-color:#4ab8e8;background:#000;font-family:'Liberation Sans',sans-serif;font-size:12.5px;color:#fff;line-height:26px;padding-left:3px">120 Hz</div>
<div style="position:absolute;left:390px;top:446px;width:99px;height:28px;box-sizing:border-box;border:2px solid #3aa8dc;border-right-color:#4ab8e8;background:#000;font-family:'Liberation Sans',sans-serif;font-size:12.5px;color:#fff;line-height:26px;padding-left:3px">-3 dB</div>
<div style="position:absolute;left:493px;top:446px;width:99px;height:28px;box-sizing:border-box;border:2px solid #3aa8dc;border-right-color:#4ab8e8;background:#000;font-family:'Liberation Sans',sans-serif;font-size:12.5px;color:#fff;line-height:26px;padding-left:3px">0,45 8ve</div>
<div class="onoff" style="top:478px">5</div>
<div style="position:absolute;left:287px;top:478px;width:99px;height:28px;box-sizing:border-box;border:2px solid #3aa8dc;border-right-color:#4ab8e8;background:#000;font-family:'Liberation Sans',sans-serif;font-size:12.5px;color:#fff;line-height:26px;padding-left:3px">60 Hz</div>
<div style="position:absolute;left:390px;top:478px;width:99px;height:28px;box-sizing:border-box;border:2px solid #3aa8dc;border-right-color:#4ab8e8;background:#000;font-family:'Liberation Sans',sans-serif;font-size:12.5px;color:#fff;line-height:26px;padding-left:3px">6 dB</div>
<div style="position:absolute;left:493px;top:478px;width:99px;height:28px;box-sizing:border-box;border:2px solid #3aa8dc;border-right-color:#4ab8e8;background:#000;font-family:'Liberation Sans',sans-serif;font-size:12.5px;color:#fff;line-height:26px;padding-left:3px">0,5 8ve</div>
<div style="position:absolute;left:608px;top:306px;width:21px;height:701px;background:linear-gradient(90deg,#e8e8e8 0%,#f2f2f2 30%,#f0f0f0 100%)"></div>
<div style="position:absolute;left:629px;top:306px;width:2px;height:701px;background:#6e6e6e"></div>
<div style="position:absolute;left:614px;top:314px;width:0;height:0;border-left:5px solid transparent;border-right:5px solid transparent;border-bottom:5px solid #333"></div>
<div style="position:absolute;left:614px;top:993px;width:0;height:0;border-left:5px solid transparent;border-right:5px solid transparent;border-top:5px solid #333"></div>
<div style="position:absolute;left:631px;top:306px;width:1286px;height:100px;background:#fff"></div>
<div style="position:absolute;left:634px;top:306px;width:1262px;height:80px;overflow:hidden">
<div style="position:absolute;left:0;top:-4px;white-space:pre;font-family:'Liberation Mono',monospace;font-size:8.33px;line-height:12px;color:#000;font-weight:bold;-webkit-text-stroke:0px">B2.00.01.62.66.66.66 => WRITE WOWHDSRSDSpaceControl, xFconfigurationChanged_Attributes unknown, WOWHDSRSDSpaceControl=0.7999999523162842</div>
<div style="position:absolute;left:0;top:8px;white-space:pre;font-family:'Liberation Mono',monospace;font-size:8.33px;line-height:12px;color:#000;font-weight:bold;-webkit-text-stroke:0px">B2.00.01.63.40.00.00 => WRITE WOWHDSRS3DCenterControl, xFconfigurationChanged_Attributes unknown, WOWHDSRS3DCenterControl=0.5</div>
<div style="position:absolute;left:0;top:20px;white-space:pre;font-family:'Liberation Mono',monospace;font-size:8.33px;line-height:12px;color:#000;font-weight:bold;-webkit-text-stroke:0px">B2.00.01.64.33.33.33 => WRITE WOWHDFOCUSControl, xFconfigurationChanged_Attributes unknown, WOWHDFOCUSControl=0.3999999761581421</div>
<div style="position:absolute;left:0;top:32px;white-space:pre;font-family:'Liberation Mono',monospace;font-size:8.33px;line-height:12px;color:#000;font-weight:bold;-webkit-text-stroke:0px">B2.00.01.65.60.00.00 => WRITE WOWHDLimiterControl, xFconfigurationChanged_Attributes unknown, WOWHDLimiterControl=0.75</div>
<div style="position:absolute;left:0;top:44px;white-space:pre;font-family:'Liberation Mono',monospace;font-size:8.33px;line-height:12px;color:#000;font-weight:bold;-webkit-text-stroke:0px">B2.00.01.66.00.00.7F => WRITE SignalFlowOption, SHELL_SignalFlowOption global, soundsuite=true srs=true bbe=true custom=true input-compressor=true speaker-eq=true output-eq=true green=false master-volume-off=false</div>
<div style="position:absolute;left:0;top:56px;white-space:pre;font-family:'Liberation Mono',monospace;font-size:8.33px;line-height:12px;color:#000;font-weight:bold;-webkit-text-stroke:0px">B2.00.01.67.00.02.7E => WRITE HardwareOption, SHELL_HardwareOption global, master-volume=false mute-input=true spdif-tx=true host-error=true temperature-sense=true ps-sync=true master-clock=true spdif-passthrough=false ps-sync-rate0=false ps-sync-rate1=false</div>
</div>
<div style="position:absolute;left:1896px;top:307px;width:20px;height:79px;background:linear-gradient(90deg,#e6e6e6,#f0f0f0 40%,#ececec)"></div>
<div style="position:absolute;left:1901px;top:315px;width:0;height:0;border-left:5px solid transparent;border-right:5px solid transparent;border-bottom:5px solid #333"></div>
<div style="position:absolute;left:1901px;top:372px;width:0;height:0;border-left:5px solid transparent;border-right:5px solid transparent;border-top:5px solid #333"></div>
<div style="position:absolute;left:1897px;top:343px;width:17px;height:19px;box-sizing:border-box;border:1px solid #9a9a9a;border-radius:2px;background:linear-gradient(90deg,#f4f4f4,#dcdcdc)"></div>
<div style="position:absolute;left:1901px;top:348px;width:8px;height:1px;background:#555"></div>
<div style="position:absolute;left:1901px;top:351px;width:8px;height:1px;background:#555"></div>
<div style="position:absolute;left:1901px;top:354px;width:8px;height:1px;background:#555"></div>
<div style="position:absolute;left:631px;top:386px;width:1265px;height:20px;background:linear-gradient(180deg,#e4e4e4,#efefef 30%,#ececec)"></div>
<div style="position:absolute;left:1896px;top:386px;width:20px;height:20px;background:#f0f0f0"></div>
<div style="position:absolute;left:639px;top:391px;width:0;height:0;border-top:5px solid transparent;border-bottom:5px solid transparent;border-right:5px solid #333"></div>
<div style="position:absolute;left:1882px;top:391px;width:0;height:0;border-top:5px solid transparent;border-bottom:5px solid transparent;border-left:5px solid #333"></div>
<div style="position:absolute;left:655px;top:387px;width:976px;height:18px;box-sizing:border-box;border:1px solid #a0a0a0;border-radius:2px;background:linear-gradient(180deg,#f6f6f6 0%,#ececec 45%,#d8d8da 50%,#d0d0d2 100%)"></div>
<div style="position:absolute;left:1138px;top:391px;width:1px;height:8px;background:#555"></div>
<div style="position:absolute;left:1141px;top:391px;width:1px;height:8px;background:#555"></div>
<div style="position:absolute;left:1144px;top:391px;width:1px;height:8px;background:#555"></div>
<div style="position:absolute;left:631px;top:406px;width:1286px;height:1px;background:#8a8a8a"></div>
<div style="position:absolute;left:1916px;top:306px;width:1px;height:100px;background:#8a8a8a"></div>
<div style="position:absolute;left:631px;top:407px;width:1286px;height:4px;background:#f6f6f6"></div>
<div style="position:absolute;left:631px;top:411px;width:1286px;height:1px;background:#7a7a7a"></div>
<div style="position:absolute;left:631px;top:412px;width:1286px;height:595px;background:#fff"></div>
<div style="position:absolute;left:633px;top:414px;width:1284px;height:593px;box-sizing:border-box;border-right:2px solid #8a8a8a;border-bottom:2px solid #8a8a8a;background:repeating-linear-gradient(180deg,#13569a 0px,#13569a 2px,#1a5e9e 2px,#1a5e9e 4px)"></div>
<svg style="position:absolute;left:0;top:0" width="1919" height="1031" viewBox="0 0 1919 1031">
<defs>
<radialGradient id="ball" cx="0.42" cy="0.35" r="0.65"><stop offset="0" stop-color="#e0ffd8"/><stop offset="0.22" stop-color="#50ff30"/><stop offset="0.65" stop-color="#22e810"/><stop offset="0.9" stop-color="#10a008"/><stop offset="1" stop-color="#086008"/></radialGradient>
</defs>
<rect x="653" y="434" width="242" height="1" fill="#b0aaa8"/>
<rect x="653" y="434" width="1242" height="551" fill="#ffffff"/>
<rect x="653" y="434" width="1240" height="549" fill="#8c8c8c"/>
<rect x="653" y="434" width="1240" height="1" fill="#b4aeac"/>
<rect x="653" y="434" width="1" height="549" fill="#b4aeac"/>
<rect x="656" y="437" width="1237" height="546" fill="#000"/>
<rect x="760" y="437" width="1" height="546" fill="#8a8a8a"/>
<rect x="824" y="437" width="1" height="546" fill="#8a8a8a"/>
<rect x="869" y="437" width="1" height="546" fill="#8a8a8a"/>
<rect x="905" y="437" width="1" height="546" fill="#8a8a8a"/>
<rect x="934" y="437" width="1" height="546" fill="#8a8a8a"/>
<rect x="959" y="437" width="1" height="546" fill="#8a8a8a"/>
<rect x="980" y="437" width="1" height="546" fill="#8a8a8a"/>
<rect x="999" y="437" width="1" height="546" fill="#8a8a8a"/>
<rect x="1016" y="437" width="1" height="546" fill="#8a8a8a"/>
<rect x="1128" y="437" width="1" height="546" fill="#8a8a8a"/>
<rect x="1194" y="437" width="1" height="546" fill="#8a8a8a"/>
<rect x="1241" y="437" width="1" height="546" fill="#8a8a8a"/>
<rect x="1277" y="437" width="1" height="546" fill="#8a8a8a"/>
<rect x="1307" y="437" width="1" height="546" fill="#8a8a8a"/>
<rect x="1332" y="437" width="1" height="546" fill="#8a8a8a"/>
<rect x="1353" y="437" width="1" height="546" fill="#8a8a8a"/>
<rect x="1373" y="437" width="1" height="546" fill="#8a8a8a"/>
<rect x="1390" y="437" width="1" height="546" fill="#8a8a8a"/>
<rect x="1503" y="437" width="1" height="546" fill="#8a8a8a"/>
<rect x="1569" y="437" width="1" height="546" fill="#8a8a8a"/>
<rect x="1615" y="437" width="1" height="546" fill="#8a8a8a"/>
<rect x="1652" y="437" width="1" height="546" fill="#8a8a8a"/>
<rect x="1681" y="437" width="1" height="546" fill="#8a8a8a"/>
<rect x="1707" y="437" width="1" height="546" fill="#8a8a8a"/>
<rect x="1728" y="437" width="1" height="546" fill="#8a8a8a"/>
<rect x="1747" y="437" width="1" height="546" fill="#8a8a8a"/>
<rect x="1765" y="437" width="1" height="546" fill="#8a8a8a"/>
<rect x="1877" y="437" width="1" height="546" fill="#8a8a8a"/>
<rect x="656" y="496" width="1237" height="1" fill="#8a8a8a"/>
<rect x="656" y="557" width="1237" height="1" fill="#8a8a8a"/>
<rect x="656" y="618" width="1237" height="1" fill="#8a8a8a"/>
<rect x="656" y="679" width="1237" height="1" fill="#8a8a8a"/>
<rect x="656" y="740" width="1237" height="1" fill="#8a8a8a"/>
<rect x="656" y="801" width="1237" height="1" fill="#8a8a8a"/>
<rect x="656" y="861" width="1237" height="1" fill="#8a8a8a"/>
<rect x="656" y="922" width="1237" height="1" fill="#8a8a8a"/>
<path d="M656.0,618.50 L657.0,618.50 L658.0,618.50 L659.0,618.50 L660.0,618.50 L661.0,618.50 L662.0,618.50 L663.0,618.50 L664.0,618.50 L665.0,618.50 L666.0,618.50 L667.0,618.50 L668.0,618.50 L669.0,618.50 L670.0,618.50 L671.0,618.50 L672.0,618.50 L673.0,618.50 L674.0,618.50 L675.0,618.50 L676.0,618.50 L677.0,618.50 L678.0,618.50 L679.0,618.50 L680.0,618.50 L681.0,618.50 L682.0,618.50 L683.0,618.50 L684.0,618.50 L685.0,618.50 L686.0,618.50 L687.0,618.50 L688.0,618.50 L689.0,618.50 L690.0,618.50 L691.0,618.50 L692.0,618.50 L693.0,618.50 L694.0,618.50 L695.0,618.50 L696.0,618.50 L697.0,618.50 L698.0,618.50 L699.0,618.50 L700.0,618.50 L701.0,618.50 L702.0,618.50 L703.0,618.50 L704.0,618.50 L705.0,618.50 L706.0,618.50 L707.0,618.50 L708.0,618.50 L709.0,618.50 L710.0,618.50 L711.0,618.50 L712.0,618.50 L713.0,618.50 L714.0,618.50 L715.0,618.50 L716.0,618.50 L717.0,618.50 L718.0,618.50 L719.0,618.50 L720.0,618.50 L721.0,618.50 L722.0,618.50 L723.0,618.50 L724.0,618.50 L725.0,618.50 L726.0,618.50 L727.0,618.50 L728.0,618.50 L729.0,618.50 L730.0,618.50 L731.0,618.50 L732.0,618.50 L733.0,618.50 L734.0,618.50 L735.0,618.50 L736.0,618.50 L737.0,618.50 L738.0,618.50 L739.0,618.50 L740.0,618.50 L741.0,618.50 L742.0,618.50 L743.0,618.50 L744.0,618.50 L745.0,618.50 L746.0,618.50 L747.0,618.50 L748.0,618.50 L749.0,618.50 L750.0,618.50 L751.0,618.50 L752.0,618.50 L753.0,618.50 L754.0,618.50 L755.0,618.50 L756.0,618.50 L757.0,618.50 L758.0,618.50 L759.0,618.50 L760.0,618.50 L761.0,618.50 L762.0,618.50 L763.0,618.50 L764.0,618.50 L765.0,618.50 L766.0,618.50 L767.0,618.50 L768.0,618.50 L769.0,618.50 L770.0,618.50 L771.0,618.50 L772.0,618.50 L773.0,618.50 L774.0,618.50 L775.0,618.50 L776.0,618.50 L777.0,618.50 L778.0,618.50 L779.0,618.50 L780.0,618.50 L781.0,618.50 L782.0,618.50 L783.0,618.50 L784.0,618.50 L785.0,618.50 L786.0,618.50 L787.0,618.50 L788.0,618.50 L789.0,618.50 L790.0,618.50 L791.0,618.50 L792.0,618.50 L793.0,618.50 L794.0,618.50 L795.0,618.50 L796.0,618.50 L797.0,618.50 L798.0,618.50 L799.0,618.50 L800.0,618.50 L801.0,618.50 L802.0,618.50 L803.0,618.50 L804.0,618.50 L805.0,618.50 L806.0,618.50 L807.0,618.50 L808.0,618.50 L809.0,618.50 L810.0,618.50 L811.0,618.50 L812.0,618.50 L813.0,618.50 L814.0,618.50 L815.0,618.50 L816.0,618.50 L817.0,618.50 L818.0,618.50 L819.0,618.50 L820.0,618.50 L821.0,618.50 L822.0,618.50 L823.0,618.50 L824.0,618.50 L825.0,618.50 L826.0,618.50 L827.0,618.50 L828.0,618.50 L829.0,618.50 L830.0,618.50 L831.0,618.50 L832.0,618.50 L833.0,618.50 L834.0,618.50 L835.0,618.50 L836.0,618.50 L837.0,618.50 L838.0,618.50 L839.0,618.50 L840.0,618.50 L841.0,618.50 L842.0,618.50 L843.0,618.50 L844.0,618.50 L845.0,618.50 L846.0,618.50 L847.0,618.50 L848.0,618.50 L849.0,618.50 L850.0,618.50 L851.0,618.50 L852.0,618.50 L853.0,618.50 L854.0,618.50 L855.0,618.50 L856.0,618.50 L857.0,618.50 L858.0,618.50 L859.0,618.50 L860.0,618.50 L861.0,618.50 L862.0,618.50 L863.0,618.50 L864.0,618.50 L865.0,618.50 L866.0,618.50 L867.0,618.50 L868.0,618.50 L869.0,618.50 L870.0,618.50 L871.0,618.50 L872.0,618.50 L873.0,618.50 L874.0,618.50 L875.0,618.50 L876.0,618.50 L877.0,618.50 L878.0,618.50 L879.0,618.50 L880.0,618.50 L881.0,618.50 L882.0,618.50 L883.0,618.50 L884.0,618.50 L885.0,618.50 L886.0,618.50 L887.0,618.50 L888.0,618.50 L889.0,618.50 L890.0,618.50 L891.0,618.50 L892.0,618.50 L893.0,618.50 L894.0,618.50 L895.0,618.50 L896.0,618.50 L897.0,618.50 L898.0,618.50 L899.0,618.50 L900.0,618.50 L901.0,618.50 L902.0,618.50 L903.0,618.50 L904.0,618.50 L905.0,618.50 L906.0,618.50 L907.0,618.50 L908.0,618.50 L909.0,618.50 L910.0,618.50 L911.0,618.50 L912.0,618.50 L913.0,618.50 L914.0,618.50 L915.0,618.50 L916.0,618.50 L917.0,618.50 L918.0,618.50 L919.0,618.50 L920.0,618.50 L921.0,618.50 L922.0,618.50 L923.0,618.50 L924.0,618.50 L925.0,618.50 L926.0,618.50 L927.0,618.50 L928.0,618.50 L929.0,618.50 L930.0,618.50 L931.0,618.50 L932.0,618.50 L933.0,618.50 L934.0,618.50 L935.0,618.50 L936.0,618.50 L937.0,618.50 L938.0,618.50 L939.0,618.50 L940.0,618.50 L941.0,618.50 L942.0,618.50 L943.0,618.50 L944.0,618.50 L945.0,618.50 L946.0,618.50 L947.0,618.50 L948.0,618.50 L949.0,618.50 L950.0,618.50 L951.0,618.50 L952.0,618.50 L953.0,618.50 L954.0,618.50 L955.0,618.50 L956.0,618.50 L957.0,618.50 L958.0,618.50 L959.0,618.50 L960.0,618.50 L961.0,618.50 L962.0,618.50 L963.0,618.50 L964.0,618.50 L965.0,618.50 L966.0,618.50 L967.0,618.50 L968.0,618.50 L969.0,618.50 L970.0,618.50 L971.0,618.50 L972.0,618.50 L973.0,618.50 L974.0,618.50 L975.0,618.50 L976.0,618.50 L977.0,618.50 L978.0,618.50 L979.0,618.50 L980.0,618.50 L981.0,618.50 L982.0,618.50 L983.0,618.50 L984.0,618.50 L985.0,618.50 L986.0,618.50 L987.0,618.50 L988.0,618.50 L989.0,618.50 L990.0,618.50 L991.0,618.50 L992.0,618.50 L993.0,618.50 L994.0,618.50 L995.0,618.50 L996.0,618.50 L997.0,618.50 L998.0,618.50 L999.0,618.50 L1000.0,618.50 L1001.0,618.50 L1002.0,618.50 L1003.0,618.50 L1004.0,618.50 L1005.0,618.50 L1006.0,618.50 L1007.0,618.50 L1008.0,618.50 L1009.0,618.50 L1010.0,618.50 L1011.0,618.50 L1012.0,618.50 L1013.0,618.50 L1014.0,618.50 L1015.0,618.50 L1016.0,618.50 L1017.0,618.50 L1018.0,618.50 L1019.0,618.50 L1020.0,618.50 L1021.0,618.50 L1022.0,618.50 L1023.0,618.50 L1024.0,618.50 L1025.0,618.50 L1026.0,618.50 L1027.0,618.50 L1028.0,618.50 L1029.0,618.50 L1030.0,618.50 L1031.0,618.50 L1032.0,618.50 L1033.0,618.50 L1034.0,618.50 L1035.0,618.50 L1036.0,618.50 L1037.0,618.50 L1038.0,618.50 L1039.0,618.50 L1040.0,618.50 L1041.0,618.50 L1042.0,618.50 L1043.0,618.50 L1044.0,618.50 L1045.0,618.50 L1046.0,618.50 L1047.0,618.50 L1048.0,618.50 L1049.0,618.50 L1050.0,618.50 L1051.0,618.50 L1052.0,618.50 L1053.0,618.50 L1054.0,618.50 L1055.0,618.50 L1056.0,618.50 L1057.0,618.50 L1058.0,618.50 L1059.0,618.50 L1060.0,618.50 L1061.0,618.50 L1062.0,618.50 L1063.0,618.50 L1064.0,618.50 L1065.0,618.50 L1066.0,618.50 L1067.0,618.50 L1068.0,618.50 L1069.0,618.50 L1070.0,618.50 L1071.0,618.50 L1072.0,618.50 L1073.0,618.50 L1074.0,618.50 L1075.0,618.50 L1076.0,618.50 L1077.0,618.50 L1078.0,618.50 L1079.0,618.50 L1080.0,618.50 L1081.0,618.50 L1082.0,618.50 L1083.0,618.50 L1084.0,618.50 L1085.0,618.50 L1086.0,618.50 L1087.0,618.50 L1088.0,618.50 L1089.0,618.50 L1090.0,618.50 L1091.0,618.50 L1092.0,618.50 L1093.0,618.50 L1094.0,618.50 L1095.0,618.50 L1096.0,618.50 L1097.0,618.50 L1098.0,618.50 L1099.0,618.50 L1100.0,618.50 L1101.0,618.50 L1102.0,618.50 L1103.0,618.50 L1104.0,618.50 L1105.0,618.50 L1106.0,618.50 L1107.0,618.50 L1108.0,618.50 L1109.0,618.50 L1110.0,618.50 L1111.0,618.50 L1112.0,618.50 L1113.0,618.50 L1114.0,618.50 L1115.0,618.50 L1116.0,618.50 L1117.0,618.50 L1118.0,618.50 L1119.0,618.50 L1120.0,618.50 L1121.0,618.50 L1122.0,618.50 L1123.0,618.50 L1124.0,618.50 L1125.0,618.50 L1126.0,618.50 L1127.0,618.50 L1128.0,618.50 L1129.0,618.50 L1130.0,618.50 L1131.0,618.50 L1132.0,618.50 L1133.0,618.50 L1134.0,618.50 L1135.0,618.50 L1136.0,618.50 L1137.0,618.50 L1138.0,618.50 L1139.0,618.50 L1140.0,618.50 L1141.0,618.50 L1142.0,618.50 L1143.0,618.50 L1144.0,618.50 L1145.0,618.50 L1146.0,618.50 L1147.0,618.50 L1148.0,618.50 L1149.0,618.50 L1150.0,618.50 L1151.0,618.50 L1152.0,618.50 L1153.0,618.50 L1154.0,618.50 L1155.0,618.50 L1156.0,618.50 L1157.0,618.50 L1158.0,618.50 L1159.0,618.50 L1160.0,618.50 L1161.0,618.50 L1162.0,618.50 L1163.0,618.50 L1164.0,618.50 L1165.0,618.50 L1166.0,618.50 L1167.0,618.50 L1168.0,618.50 L1169.0,618.50 L1170.0,618.50 L1171.0,618.50 L1172.0,618.50 L1173.0,618.50 L1174.0,618.50 L1175.0,618.50 L1176.0,618.50 L1177.0,618.50 L1178.0,618.50 L1179.0,618.50 L1180.0,618.50 L1181.0,618.50 L1182.0,618.50 L1183.0,618.50 L1184.0,618.50 L1185.0,618.50 L1186.0,618.50 L1187.0,618.50 L1188.0,618.50 L1189.0,618.50 L1190.0,618.50 L1191.0,618.50 L1192.0,618.50 L1193.0,618.50 L1194.0,618.50 L1195.0,618.50 L1196.0,618.50 L1197.0,618.50 L1198.0,618.50 L1199.0,618.50 L1200.0,618.50 L1201.0,618.50 L1202.0,618.50 L1203.0,618.50 L1204.0,618.50 L1205.0,618.50 L1206.0,618.50 L1207.0,618.50 L1208.0,618.50 L1209.0,618.50 L1210.0,618.50 L1211.0,618.50 L1212.0,618.50 L1213.0,618.50 L1214.0,618.50 L1215.0,618.50 L1216.0,618.50 L1217.0,618.50 L1218.0,618.50 L1219.0,618.50 L1220.0,618.50 L1221.0,618.50 L1222.0,618.50 L1223.0,618.50 L1224.0,618.50 L1225.0,618.50 L1226.0,618.50 L1227.0,618.50 L1228.0,618.50 L1229.0,618.50 L1230.0,618.50 L1231.0,618.50 L1232.0,618.50 L1233.0,618.50 L1234.0,618.50 L1235.0,618.50 L1236.0,618.50 L1237.0,618.50 L1238.0,618.50 L1239.0,618.50 L1240.0,618.50 L1241.0,618.50 L1242.0,618.50 L1243.0,618.50 L1244.0,618.50 L1245.0,618.50 L1246.0,618.50 L1247.0,618.50 L1248.0,618.50 L1249.0,618.50 L1250.0,618.50 L1251.0,618.50 L1252.0,618.50 L1253.0,618.50 L1254.0,618.50 L1255.0,618.50 L1256.0,618.50 L1257.0,618.50 L1258.0,618.50 L1259.0,618.50 L1260.0,618.50 L1261.0,618.50 L1262.0,618.50 L1263.0,618.50 L1264.0,618.50 L1265.0,618.50 L1266.0,618.50 L1267.0,618.50 L1268.0,618.50 L1269.0,618.50 L1270.0,618.50 L1271.0,618.50 L1272.0,618.50 L1273.0,618.50 L1274.0,618.50 L1275.0,618.50 L1276.0,618.50 L1277.0,618.50 L1278.0,618.50 L1279.0,618.50 L1280.0,618.50 L1281.0,618.50 L1282.0,618.50 L1283.0,618.50 L1284.0,618.50 L1285.0,618.50 L1286.0,618.50 L1287.0,618.50 L1288.0,618.50 L1289.0,618.50 L1290.0,618.50 L1291.0,618.50 L1292.0,618.50 L1293.0,618.50 L1294.0,618.50 L1295.0,618.50 L1296.0,618.50 L1297.0,618.50 L1298.0,618.50 L1299.0,618.50 L1300.0,618.50 L1301.0,618.50 L1302.0,618.50 L1303.0,618.50 L1304.0,618.50 L1305.0,618.50 L1306.0,618.50 L1307.0,618.50 L1308.0,618.50 L1309.0,618.50 L1310.0,618.50 L1311.0,618.50 L1312.0,618.50 L1313.0,618.50 L1314.0,618.50 L1315.0,618.50 L1316.0,618.50 L1317.0,618.50 L1318.0,618.50 L1319.0,618.50 L1320.0,618.50 L1321.0,618.50 L1322.0,618.50 L1323.0,618.50 L1324.0,618.50 L1325.0,618.50 L1326.0,618.50 L1327.0,618.50 L1328.0,618.50 L1329.0,618.50 L1330.0,618.50 L1331.0,618.50 L1332.0,618.50 L1333.0,618.50 L1334.0,618.50 L1335.0,618.50 L1336.0,618.50 L1337.0,618.50 L1338.0,618.50 L1339.0,618.50 L1340.0,618.50 L1341.0,618.50 L1342.0,618.50 L1343.0,618.50 L1344.0,618.50 L1345.0,618.50 L1346.0,618.50 L1347.0,618.50 L1348.0,618.50 L1349.0,618.50 L1350.0,618.50 L1351.0,618.50 L1352.0,618.50 L1353.0,618.50 L1354.0,618.50 L1355.0,618.50 L1356.0,618.50 L1357.0,618.50 L1358.0,618.50 L1359.0,618.50 L1360.0,618.51 L1361.0,618.51 L1362.0,618.51 L1363.0,618.51 L1364.0,618.51 L1365.0,618.51 L1366.0,618.51 L1367.0,618.51 L1368.0,618.51 L1369.0,618.51 L1370.0,618.51 L1371.0,618.51 L1372.0,618.51 L1373.0,618.51 L1374.0,618.51 L1375.0,618.51 L1376.0,618.51 L1377.0,618.51 L1378.0,618.51 L1379.0,618.51 L1380.0,618.51 L1381.0,618.51 L1382.0,618.51 L1383.0,618.51 L1384.0,618.51 L1385.0,618.51 L1386.0,618.51 L1387.0,618.51 L1388.0,618.51 L1389.0,618.51 L1390.0,618.51 L1391.0,618.51 L1392.0,618.51 L1393.0,618.51 L1394.0,618.51 L1395.0,618.51 L1396.0,618.51 L1397.0,618.51 L1398.0,618.51 L1399.0,618.51 L1400.0,618.51 L1401.0,618.51 L1402.0,618.51 L1403.0,618.51 L1404.0,618.51 L1405.0,618.51 L1406.0,618.51 L1407.0,618.51 L1408.0,618.51 L1409.0,618.51 L1410.0,618.51 L1411.0,618.51 L1412.0,618.51 L1413.0,618.51 L1414.0,618.51 L1415.0,618.51 L1416.0,618.51 L1417.0,618.51 L1418.0,618.51 L1419.0,618.51 L1420.0,618.51 L1421.0,618.51 L1422.0,618.51 L1423.0,618.51 L1424.0,618.51 L1425.0,618.51 L1426.0,618.51 L1427.0,618.51 L1428.0,618.51 L1429.0,618.51 L1430.0,618.51 L1431.0,618.51 L1432.0,618.51 L1433.0,618.51 L1434.0,618.51 L1435.0,618.51 L1436.0,618.51 L1437.0,618.51 L1438.0,618.51 L1439.0,618.51 L1440.0,618.51 L1441.0,618.51 L1442.0,618.51 L1443.0,618.51 L1444.0,618.51 L1445.0,618.51 L1446.0,618.51 L1447.0,618.51 L1448.0,618.51 L1449.0,618.52 L1450.0,618.52 L1451.0,618.52 L1452.0,618.52 L1453.0,618.52 L1454.0,618.52 L1455.0,618.52 L1456.0,618.52 L1457.0,618.52 L1458.0,618.52 L1459.0,618.52 L1460.0,618.52 L1461.0,618.52 L1462.0,618.52 L1463.0,618.52 L1464.0,618.52 L1465.0,618.52 L1466.0,618.52 L1467.0,618.52 L1468.0,618.52 L1469.0,618.52 L1470.0,618.52 L1471.0,618.52 L1472.0,618.52 L1473.0,618.52 L1474.0,618.52 L1475.0,618.52 L1476.0,618.52 L1477.0,618.52 L1478.0,618.52 L1479.0,618.52 L1480.0,618.52 L1481.0,618.52 L1482.0,618.52 L1483.0,618.52 L1484.0,618.52 L1485.0,618.52 L1486.0,618.52 L1487.0,618.52 L1488.0,618.52 L1489.0,618.52 L1490.0,618.53 L1491.0,618.53 L1492.0,618.53 L1493.0,618.53 L1494.0,618.53 L1495.0,618.53 L1496.0,618.53 L1497.0,618.53 L1498.0,618.53 L1499.0,618.53 L1500.0,618.53 L1501.0,618.53 L1502.0,618.53 L1503.0,618.53 L1504.0,618.53 L1505.0,618.53 L1506.0,618.53 L1507.0,618.53 L1508.0,618.53 L1509.0,618.53 L1510.0,618.53 L1511.0,618.53 L1512.0,618.53 L1513.0,618.53 L1514.0,618.53 L1515.0,618.53 L1516.0,618.53 L1517.0,618.54 L1518.0,618.54 L1519.0,618.54 L1520.0,618.54 L1521.0,618.54 L1522.0,618.54 L1523.0,618.54 L1524.0,618.54 L1525.0,618.54 L1526.0,618.54 L1527.0,618.54 L1528.0,618.54 L1529.0,618.54 L1530.0,618.54 L1531.0,618.54 L1532.0,618.54 L1533.0,618.54 L1534.0,618.54 L1535.0,618.54 L1536.0,618.55 L1537.0,618.55 L1538.0,618.55 L1539.0,618.55 L1540.0,618.55 L1541.0,618.55 L1542.0,618.55 L1543.0,618.55 L1544.0,618.55 L1545.0,618.55 L1546.0,618.55 L1547.0,618.55 L1548.0,618.55 L1549.0,618.55 L1550.0,618.55 L1551.0,618.55 L1552.0,618.56 L1553.0,618.56 L1554.0,618.56 L1555.0,618.56 L1556.0,618.56 L1557.0,618.56 L1558.0,618.56 L1559.0,618.56 L1560.0,618.56 L1561.0,618.56 L1562.0,618.56 L1563.0,618.56 L1564.0,618.56 L1565.0,618.57 L1566.0,618.57 L1567.0,618.57 L1568.0,618.57 L1569.0,618.57 L1570.0,618.57 L1571.0,618.57 L1572.0,618.57 L1573.0,618.57 L1574.0,618.57 L1575.0,618.58 L1576.0,618.58 L1577.0,618.58 L1578.0,618.58 L1579.0,618.58 L1580.0,618.58 L1581.0,618.58 L1582.0,618.58 L1583.0,618.58 L1584.0,618.58 L1585.0,618.59 L1586.0,618.59 L1587.0,618.59 L1588.0,618.59 L1589.0,618.59 L1590.0,618.59 L1591.0,618.59 L1592.0,618.59 L1593.0,618.60 L1594.0,618.60 L1595.0,618.60 L1596.0,618.60 L1597.0,618.60 L1598.0,618.60 L1599.0,618.60 L1600.0,618.61 L1601.0,618.61 L1602.0,618.61 L1603.0,618.61 L1604.0,618.61 L1605.0,618.61 L1606.0,618.62 L1607.0,618.62 L1608.0,618.62 L1609.0,618.62 L1610.0,618.62 L1611.0,618.62 L1612.0,618.63 L1613.0,618.63 L1614.0,618.63 L1615.0,618.63 L1616.0,618.63 L1617.0,618.63 L1618.0,618.64 L1619.0,618.64 L1620.0,618.64 L1621.0,618.64 L1622.0,618.64 L1623.0,618.65 L1624.0,618.65 L1625.0,618.65 L1626.0,618.65 L1627.0,618.65 L1628.0,618.66 L1629.0,618.66 L1630.0,618.66 L1631.0,618.66 L1632.0,618.67 L1633.0,618.67 L1634.0,618.67 L1635.0,618.67 L1636.0,618.67 L1637.0,618.68 L1638.0,618.68 L1639.0,618.68 L1640.0,618.69 L1641.0,618.69 L1642.0,618.69 L1643.0,618.69 L1644.0,618.70 L1645.0,618.70 L1646.0,618.70 L1647.0,618.70 L1648.0,618.71 L1649.0,618.71 L1650.0,618.71 L1651.0,618.72 L1652.0,618.72 L1653.0,618.72 L1654.0,618.73 L1655.0,618.73 L1656.0,618.73 L1657.0,618.74 L1658.0,618.74 L1659.0,618.75 L1660.0,618.75 L1661.0,618.75 L1662.0,618.76 L1663.0,618.76 L1664.0,618.77 L1665.0,618.77 L1666.0,618.77 L1667.0,618.78 L1668.0,618.78 L1669.0,618.79 L1670.0,618.79 L1671.0,618.80 L1672.0,618.80 L1673.0,618.81 L1674.0,618.81 L1675.0,618.82 L1676.0,618.82 L1677.0,618.83 L1678.0,618.83 L1679.0,618.84 L1680.0,618.84 L1681.0,618.85 L1682.0,618.86 L1683.0,618.86 L1684.0,618.87 L1685.0,618.87 L1686.0,618.88 L1687.0,618.89 L1688.0,618.89 L1689.0,618.90 L1690.0,618.91 L1691.0,618.91 L1692.0,618.92 L1693.0,618.93 L1694.0,618.93 L1695.0,618.94 L1696.0,618.95 L1697.0,618.96 L1698.0,618.96 L1699.0,618.97 L1700.0,618.98 L1701.0,618.99 L1702.0,619.00 L1703.0,619.01 L1704.0,619.01 L1705.0,619.02 L1706.0,619.03 L1707.0,619.04 L1708.0,619.05 L1709.0,619.06 L1710.0,619.07 L1711.0,619.09 L1712.0,619.10 L1713.0,619.11 L1714.0,619.12 L1715.0,619.13 L1716.0,619.15 L1717.0,619.16 L1718.0,619.17 L1719.0,619.19 L1720.0,619.20 L1721.0,619.22 L1722.0,619.23 L1723.0,619.25 L1724.0,619.26 L1725.0,619.28 L1726.0,619.30 L1727.0,619.31 L1728.0,619.33 L1729.0,619.35 L1730.0,619.37 L1731.0,619.39 L1732.0,619.41 L1733.0,619.43 L1734.0,619.45 L1735.0,619.47 L1736.0,619.49 L1737.0,619.52 L1738.0,619.54 L1739.0,619.57 L1740.0,619.59 L1741.0,619.62 L1742.0,619.64 L1743.0,619.67 L1744.0,619.70 L1745.0,619.73 L1746.0,619.76 L1747.0,619.80 L1748.0,619.83 L1749.0,619.86 L1750.0,619.89 L1751.0,619.93 L1752.0,619.97 L1753.0,620.00 L1754.0,620.04 L1755.0,620.08 L1756.0,620.13 L1757.0,620.17 L1758.0,620.22 L1759.0,620.26 L1760.0,620.31 L1761.0,620.36 L1762.0,620.42 L1763.0,620.47 L1764.0,620.53 L1765.0,620.59 L1766.0,620.66 L1767.0,620.73 L1768.0,620.80 L1769.0,620.88 L1770.0,620.96 L1771.0,621.04 L1772.0,621.13 L1773.0,621.23 L1774.0,621.33 L1775.0,621.43 L1776.0,621.54 L1777.0,621.66 L1778.0,621.78 L1779.0,621.91 L1780.0,622.04 L1781.0,622.19 L1782.0,622.34 L1783.0,622.51 L1784.0,622.68 L1785.0,622.87 L1786.0,623.06 L1787.0,623.27 L1788.0,623.50 L1789.0,623.73 L1790.0,623.99 L1791.0,624.26 L1792.0,624.56 L1793.0,624.87 L1794.0,625.21 L1795.0,625.57 L1796.0,625.96 L1797.0,626.38 L1798.0,626.83 L1799.0,627.32 L1800.0,627.85 L1801.0,628.41 L1802.0,629.02 L1803.0,629.67 L1804.0,630.37 L1805.0,631.12 L1806.0,631.92 L1807.0,632.77 L1808.0,633.66 L1809.0,634.60 L1810.0,635.58 L1811.0,636.58 L1812.0,637.59 L1813.0,638.60 L1814.0,639.57 L1815.0,640.47 L1816.0,641.27 L1817.0,641.95 L1818.0,642.45 L1819.0,642.75 L1820.0,642.84 L1821.0,642.69 L1822.0,642.31 L1823.0,641.72 L1824.0,640.94 L1825.0,640.01 L1826.0,638.96 L1827.0,637.83 L1828.0,636.66 L1829.0,635.48 L1830.0,634.31 L1831.0,633.17 L1832.0,632.09 L1833.0,631.06 L1834.0,630.09 L1835.0,629.19 L1836.0,628.36 L1837.0,627.59 L1838.0,626.88 L1839.0,626.23 L1840.0,625.63 L1841.0,625.08 L1842.0,624.57 L1843.0,624.11 L1844.0,623.69 L1845.0,623.30 L1846.0,622.95 L1847.0,622.62 L1848.0,622.32 L1849.0,622.05 L1850.0,621.80 L1851.0,621.56 L1852.0,621.35 L1853.0,621.15 L1854.0,620.96 L1855.0,620.79 L1856.0,620.64 L1857.0,620.49 L1858.0,620.35 L1859.0,620.23 L1860.0,620.11 L1861.0,620.00 L1862.0,619.90 L1863.0,619.80 L1864.0,619.72 L1865.0,619.63 L1866.0,619.55 L1867.0,619.48 L1868.0,619.41 L1869.0,619.35 L1870.0,619.29 L1871.0,619.23 L1872.0,619.18 L1873.0,619.13 L1874.0,619.09 L1875.0,619.04 L1876.0,619.00 L1877.0,618.96 L1878.0,618.93 L1879.0,618.89 L1880.0,618.86 L1881.0,618.83 L1882.0,618.80 L1883.0,618.78 L1884.0,618.75 L1885.0,618.73 L1886.0,618.71 L1887.0,618.69 L1888.0,618.67 L1889.0,618.65 L1890.0,618.63 L1891.0,618.62 L1892.0,618.60 L1893.0,618.59" fill="none" stroke="#ff7a1a" stroke-width="1.2"/>
<path d="M656.0,618.50 L657.0,618.50 L658.0,618.50 L659.0,618.50 L660.0,618.50 L661.0,618.50 L662.0,618.50 L663.0,618.50 L664.0,618.50 L665.0,618.50 L666.0,618.50 L667.0,618.50 L668.0,618.50 L669.0,618.50 L670.0,618.50 L671.0,618.50 L672.0,618.50 L673.0,618.50 L674.0,618.50 L675.0,618.50 L676.0,618.50 L677.0,618.50 L678.0,618.50 L679.0,618.50 L680.0,618.50 L681.0,618.50 L682.0,618.50 L683.0,618.50 L684.0,618.50 L685.0,618.50 L686.0,618.50 L687.0,618.50 L688.0,618.50 L689.0,618.50 L690.0,618.50 L691.0,618.50 L692.0,618.50 L693.0,618.50 L694.0,618.50 L695.0,618.50 L696.0,618.50 L697.0,618.50 L698.0,618.50 L699.0,618.50 L700.0,618.50 L701.0,618.50 L702.0,618.50 L703.0,618.50 L704.0,618.50 L705.0,618.50 L706.0,618.50 L707.0,618.50 L708.0,618.50 L709.0,618.50 L710.0,618.50 L711.0,618.50 L712.0,618.50 L713.0,618.50 L714.0,618.50 L715.0,618.50 L716.0,618.50 L717.0,618.50 L718.0,618.50 L719.0,618.50 L720.0,618.50 L721.0,618.50 L722.0,618.50 L723.0,618.50 L724.0,618.50 L725.0,618.50 L726.0,618.50 L727.0,618.50 L728.0,618.50 L729.0,618.50 L730.0,618.50 L731.0,618.50 L732.0,618.50 L733.0,618.50 L734.0,618.50 L735.0,618.50 L736.0,618.50 L737.0,618.50 L738.0,618.50 L739.0,618.50 L740.0,618.50 L741.0,618.50 L742.0,618.50 L743.0,618.50 L744.0,618.50 L745.0,618.50 L746.0,618.50 L747.0,618.50 L748.0,618.50 L749.0,618.50 L750.0,618.50 L751.0,618.50 L752.0,618.50 L753.0,618.50 L754.0,618.50 L755.0,618.50 L756.0,618.50 L757.0,618.50 L758.0,618.50 L759.0,618.50 L760.0,618.50 L761.0,618.50 L762.0,618.50 L763.0,618.50 L764.0,618.50 L765.0,618.50 L766.0,618.50 L767.0,618.50 L768.0,618.50 L769.0,618.50 L770.0,618.50 L771.0,618.50 L772.0,618.50 L773.0,618.50 L774.0,618.50 L775.0,618.50 L776.0,618.50 L777.0,618.50 L778.0,618.50 L779.0,618.50 L780.0,618.50 L781.0,618.50 L782.0,618.50 L783.0,618.50 L784.0,618.50 L785.0,618.50 L786.0,618.50 L787.0,618.50 L788.0,618.50 L789.0,618.50 L790.0,618.50 L791.0,618.50 L792.0,618.50 L793.0,618.50 L794.0,618.50 L795.0,618.50 L796.0,618.50 L797.0,618.50 L798.0,618.50 L799.0,618.50 L800.0,618.50 L801.0,618.50 L802.0,618.50 L803.0,618.50 L804.0,618.50 L805.0,618.50 L806.0,618.50 L807.0,618.50 L808.0,618.50 L809.0,618.50 L810.0,618.50 L811.0,618.50 L812.0,618.50 L813.0,618.50 L814.0,618.50 L815.0,618.50 L816.0,618.50 L817.0,618.50 L818.0,618.50 L819.0,618.50 L820.0,618.50 L821.0,618.50 L822.0,618.50 L823.0,618.50 L824.0,618.50 L825.0,618.50 L826.0,618.50 L827.0,618.50 L828.0,618.50 L829.0,618.50 L830.0,618.50 L831.0,618.50 L832.0,618.50 L833.0,618.50 L834.0,618.50 L835.0,618.50 L836.0,618.50 L837.0,618.50 L838.0,618.50 L839.0,618.50 L840.0,618.50 L841.0,618.50 L842.0,618.50 L843.0,618.50 L844.0,618.50 L845.0,618.50 L846.0,618.50 L847.0,618.50 L848.0,618.49 L849.0,618.49 L850.0,618.49 L851.0,618.49 L852.0,618.49 L853.0,618.49 L854.0,618.49 L855.0,618.49 L856.0,618.49 L857.0,618.49 L858.0,618.49 L859.0,618.49 L860.0,618.49 L861.0,618.49 L862.0,618.49 L863.0,618.49 L864.0,618.49 L865.0,618.49 L866.0,618.49 L867.0,618.49 L868.0,618.49 L869.0,618.49 L870.0,618.49 L871.0,618.49 L872.0,618.49 L873.0,618.49 L874.0,618.49 L875.0,618.49 L876.0,618.49 L877.0,618.49 L878.0,618.49 L879.0,618.49 L880.0,618.49 L881.0,618.49 L882.0,618.49 L883.0,618.49 L884.0,618.49 L885.0,618.49 L886.0,618.49 L887.0,618.49 L888.0,618.49 L889.0,618.49 L890.0,618.49 L891.0,618.49 L892.0,618.49 L893.0,618.49 L894.0,618.49 L895.0,618.49 L896.0,618.49 L897.0,618.49 L898.0,618.49 L899.0,618.49 L900.0,618.49 L901.0,618.49 L902.0,618.49 L903.0,618.49 L904.0,618.49 L905.0,618.49 L906.0,618.49 L907.0,618.49 L908.0,618.49 L909.0,618.49 L910.0,618.49 L911.0,618.49 L912.0,618.49 L913.0,618.49 L914.0,618.49 L915.0,618.49 L916.0,618.49 L917.0,618.49 L918.0,618.49 L919.0,618.49 L920.0,618.49 L921.0,618.49 L922.0,618.49 L923.0,618.49 L924.0,618.49 L925.0,618.49 L926.0,618.49 L927.0,618.49 L928.0,618.49 L929.0,618.49 L930.0,618.49 L931.0,618.49 L932.0,618.49 L933.0,618.49 L934.0,618.49 L935.0,618.49 L936.0,618.48 L937.0,618.48 L938.0,618.48 L939.0,618.48 L940.0,618.48 L941.0,618.48 L942.0,618.48 L943.0,618.48 L944.0,618.48 L945.0,618.48 L946.0,618.48 L947.0,618.48 L948.0,618.48 L949.0,618.48 L950.0,618.48 L951.0,618.48 L952.0,618.48 L953.0,618.48 L954.0,618.48 L955.0,618.48 L956.0,618.48 L957.0,618.48 L958.0,618.48 L959.0,618.48 L960.0,618.48 L961.0,618.48 L962.0,618.48 L963.0,618.48 L964.0,618.48 L965.0,618.48 L966.0,618.48 L967.0,618.48 L968.0,618.48 L969.0,618.48 L970.0,618.48 L971.0,618.48 L972.0,618.48 L973.0,618.48 L974.0,618.48 L975.0,618.48 L976.0,618.47 L977.0,618.47 L978.0,618.47 L979.0,618.47 L980.0,618.47 L981.0,618.47 L982.0,618.47 L983.0,618.47 L984.0,618.47 L985.0,618.47 L986.0,618.47 L987.0,618.47 L988.0,618.47 L989.0,618.47 L990.0,618.47 L991.0,618.47 L992.0,618.47 L993.0,618.47 L994.0,618.47 L995.0,618.47 L996.0,618.47 L997.0,618.47 L998.0,618.47 L999.0,618.47 L1000.0,618.47 L1001.0,618.47 L1002.0,618.47 L1003.0,618.46 L1004.0,618.46 L1005.0,618.46 L1006.0,618.46 L1007.0,618.46 L1008.0,618.46 L1009.0,618.46 L1010.0,618.46 L1011.0,618.46 L1012.0,618.46 L1013.0,618.46 L1014.0,618.46 L1015.0,618.46 L1016.0,618.46 L1017.0,618.46 L1018.0,618.46 L1019.0,618.46 L1020.0,618.46 L1021.0,618.46 L1022.0,618.46 L1023.0,618.45 L1024.0,618.45 L1025.0,618.45 L1026.0,618.45 L1027.0,618.45 L1028.0,618.45 L1029.0,618.45 L1030.0,618.45 L1031.0,618.45 L1032.0,618.45 L1033.0,618.45 L1034.0,618.45 L1035.0,618.45 L1036.0,618.45 L1037.0,618.45 L1038.0,618.45 L1039.0,618.45 L1040.0,618.44 L1041.0,618.44 L1042.0,618.44 L1043.0,618.44 L1044.0,618.44 L1045.0,618.44 L1046.0,618.44 L1047.0,618.44 L1048.0,618.44 L1049.0,618.44 L1050.0,618.44 L1051.0,618.44 L1052.0,618.44 L1053.0,618.43 L1054.0,618.43 L1055.0,618.43 L1056.0,618.43 L1057.0,618.43 L1058.0,618.43 L1059.0,618.43 L1060.0,618.43 L1061.0,618.43 L1062.0,618.43 L1063.0,618.43 L1064.0,618.42 L1065.0,618.42 L1066.0,618.42 L1067.0,618.42 L1068.0,618.42 L1069.0,618.42 L1070.0,618.42 L1071.0,618.42 L1072.0,618.42 L1073.0,618.42 L1074.0,618.41 L1075.0,618.41 L1076.0,618.41 L1077.0,618.41 L1078.0,618.41 L1079.0,618.41 L1080.0,618.41 L1081.0,618.41 L1082.0,618.41 L1083.0,618.40 L1084.0,618.40 L1085.0,618.40 L1086.0,618.40 L1087.0,618.40 L1088.0,618.40 L1089.0,618.40 L1090.0,618.40 L1091.0,618.39 L1092.0,618.39 L1093.0,618.39 L1094.0,618.39 L1095.0,618.39 L1096.0,618.39 L1097.0,618.39 L1098.0,618.39 L1099.0,618.38 L1100.0,618.38 L1101.0,618.38 L1102.0,618.38 L1103.0,618.38 L1104.0,618.38 L1105.0,618.37 L1106.0,618.37 L1107.0,618.37 L1108.0,618.37 L1109.0,618.37 L1110.0,618.37 L1111.0,618.36 L1112.0,618.36 L1113.0,618.36 L1114.0,618.36 L1115.0,618.36 L1116.0,618.36 L1117.0,618.35 L1118.0,618.35 L1119.0,618.35 L1120.0,618.35 L1121.0,618.35 L1122.0,618.34 L1123.0,618.34 L1124.0,618.34 L1125.0,618.34 L1126.0,618.34 L1127.0,618.33 L1128.0,618.33 L1129.0,618.33 L1130.0,618.33 L1131.0,618.33 L1132.0,618.32 L1133.0,618.32 L1134.0,618.32 L1135.0,618.32 L1136.0,618.31 L1137.0,618.31 L1138.0,618.31 L1139.0,618.31 L1140.0,618.31 L1141.0,618.30 L1142.0,618.30 L1143.0,618.30 L1144.0,618.30 L1145.0,618.29 L1146.0,618.29 L1147.0,618.29 L1148.0,618.28 L1149.0,618.28 L1150.0,618.28 L1151.0,618.28 L1152.0,618.27 L1153.0,618.27 L1154.0,618.27 L1155.0,618.26 L1156.0,618.26 L1157.0,618.26 L1158.0,618.26 L1159.0,618.25 L1160.0,618.25 L1161.0,618.25 L1162.0,618.24 L1163.0,618.24 L1164.0,618.24 L1165.0,618.23 L1166.0,618.23 L1167.0,618.23 L1168.0,618.22 L1169.0,618.22 L1170.0,618.22 L1171.0,618.21 L1172.0,618.21 L1173.0,618.20 L1174.0,618.20 L1175.0,618.20 L1176.0,618.19 L1177.0,618.19 L1178.0,618.18 L1179.0,618.18 L1180.0,618.18 L1181.0,618.17 L1182.0,618.17 L1183.0,618.16 L1184.0,618.16 L1185.0,618.16 L1186.0,618.15 L1187.0,618.15 L1188.0,618.14 L1189.0,618.14 L1190.0,618.13 L1191.0,618.13 L1192.0,618.12 L1193.0,618.12 L1194.0,618.11 L1195.0,618.11 L1196.0,618.10 L1197.0,618.10 L1198.0,618.09 L1199.0,618.09 L1200.0,618.08 L1201.0,618.08 L1202.0,618.07 L1203.0,618.07 L1204.0,618.06 L1205.0,618.05 L1206.0,618.05 L1207.0,618.04 L1208.0,618.04 L1209.0,618.03 L1210.0,618.02 L1211.0,618.02 L1212.0,618.01 L1213.0,618.01 L1214.0,618.00 L1215.0,617.99 L1216.0,617.99 L1217.0,617.98 L1218.0,617.97 L1219.0,617.97 L1220.0,617.96 L1221.0,617.95 L1222.0,617.94 L1223.0,617.94 L1224.0,617.93 L1225.0,617.92 L1226.0,617.92 L1227.0,617.91 L1228.0,617.90 L1229.0,617.89 L1230.0,617.88 L1231.0,617.88 L1232.0,617.87 L1233.0,617.86 L1234.0,617.85 L1235.0,617.84 L1236.0,617.83 L1237.0,617.82 L1238.0,617.82 L1239.0,617.81 L1240.0,617.80 L1241.0,617.79 L1242.0,617.78 L1243.0,617.77 L1244.0,617.76 L1245.0,617.75 L1246.0,617.74 L1247.0,617.73 L1248.0,617.72 L1249.0,617.71 L1250.0,617.70 L1251.0,617.68 L1252.0,617.67 L1253.0,617.66 L1254.0,617.65 L1255.0,617.64 L1256.0,617.63 L1257.0,617.62 L1258.0,617.60 L1259.0,617.59 L1260.0,617.58 L1261.0,617.57 L1262.0,617.55 L1263.0,617.54 L1264.0,617.53 L1265.0,617.51 L1266.0,617.50 L1267.0,617.49 L1268.0,617.47 L1269.0,617.46 L1270.0,617.44 L1271.0,617.43 L1272.0,617.41 L1273.0,617.40 L1274.0,617.38 L1275.0,617.37 L1276.0,617.35 L1277.0,617.33 L1278.0,617.32 L1279.0,617.30 L1280.0,617.28 L1281.0,617.27 L1282.0,617.25 L1283.0,617.23 L1284.0,617.22 L1285.0,617.20 L1286.0,617.18 L1287.0,617.16 L1288.0,617.14 L1289.0,617.12 L1290.0,617.10 L1291.0,617.08 L1292.0,617.06 L1293.0,617.04 L1294.0,617.02 L1295.0,617.00 L1296.0,616.98 L1297.0,616.96 L1298.0,616.94 L1299.0,616.91 L1300.0,616.89 L1301.0,616.87 L1302.0,616.84 L1303.0,616.82 L1304.0,616.80 L1305.0,616.77 L1306.0,616.75 L1307.0,616.72 L1308.0,616.70 L1309.0,616.67 L1310.0,616.64 L1311.0,616.61 L1312.0,616.59 L1313.0,616.56 L1314.0,616.53 L1315.0,616.50 L1316.0,616.47 L1317.0,616.44 L1318.0,616.41 L1319.0,616.37 L1320.0,616.34 L1321.0,616.31 L1322.0,616.28 L1323.0,616.24 L1324.0,616.21 L1325.0,616.17 L1326.0,616.14 L1327.0,616.10 L1328.0,616.06 L1329.0,616.02 L1330.0,615.99 L1331.0,615.95 L1332.0,615.91 L1333.0,615.87 L1334.0,615.82 L1335.0,615.78 L1336.0,615.73 L1337.0,615.69 L1338.0,615.64 L1339.0,615.60 L1340.0,615.55 L1341.0,615.50 L1342.0,615.45 L1343.0,615.40 L1344.0,615.35 L1345.0,615.29 L1346.0,615.24 L1347.0,615.18 L1348.0,615.13 L1349.0,615.07 L1350.0,615.01 L1351.0,614.95 L1352.0,614.89 L1353.0,614.83 L1354.0,614.77 L1355.0,614.71 L1356.0,614.65 L1357.0,614.58 L1358.0,614.52 L1359.0,614.46 L1360.0,614.39 L1361.0,614.32 L1362.0,614.25 L1363.0,614.18 L1364.0,614.11 L1365.0,614.04 L1366.0,613.96 L1367.0,613.89 L1368.0,613.81 L1369.0,613.73 L1370.0,613.65 L1371.0,613.57 L1372.0,613.48 L1373.0,613.40 L1374.0,613.31 L1375.0,613.21 L1376.0,613.11 L1377.0,613.02 L1378.0,612.91 L1379.0,612.81 L1380.0,612.70 L1381.0,612.60 L1382.0,612.49 L1383.0,612.37 L1384.0,612.26 L1385.0,612.14 L1386.0,612.02 L1387.0,611.89 L1388.0,611.76 L1389.0,611.63 L1390.0,611.50 L1391.0,611.36 L1392.0,611.22 L1393.0,611.08 L1394.0,610.94 L1395.0,610.79 L1396.0,610.63 L1397.0,610.48 L1398.0,610.32 L1399.0,610.15 L1400.0,609.98 L1401.0,609.81 L1402.0,609.63 L1403.0,609.45 L1404.0,609.26 L1405.0,609.07 L1406.0,608.88 L1407.0,608.68 L1408.0,608.47 L1409.0,608.26 L1410.0,608.04 L1411.0,607.82 L1412.0,607.59 L1413.0,607.35 L1414.0,607.11 L1415.0,606.86 L1416.0,606.61 L1417.0,606.35 L1418.0,606.08 L1419.0,605.80 L1420.0,605.52 L1421.0,605.23 L1422.0,604.93 L1423.0,604.63 L1424.0,604.31 L1425.0,603.99 L1426.0,603.66 L1427.0,603.31 L1428.0,602.96 L1429.0,602.60 L1430.0,602.23 L1431.0,601.85 L1432.0,601.46 L1433.0,601.06 L1434.0,600.65 L1435.0,600.23 L1436.0,599.79 L1437.0,599.35 L1438.0,598.89 L1439.0,598.42 L1440.0,597.94 L1441.0,597.45 L1442.0,596.94 L1443.0,596.42 L1444.0,595.89 L1445.0,595.35 L1446.0,594.79 L1447.0,594.22 L1448.0,593.63 L1449.0,593.04 L1450.0,592.43 L1451.0,591.80 L1452.0,591.17 L1453.0,590.52 L1454.0,589.86 L1455.0,589.19 L1456.0,588.50 L1457.0,587.81 L1458.0,587.10 L1459.0,586.39 L1460.0,585.67 L1461.0,584.94 L1462.0,584.20 L1463.0,583.46 L1464.0,582.72 L1465.0,581.98 L1466.0,581.23 L1467.0,580.49 L1468.0,579.75 L1469.0,579.01 L1470.0,578.29 L1471.0,577.57 L1472.0,576.87 L1473.0,576.18 L1474.0,575.52 L1475.0,574.88 L1476.0,574.26 L1477.0,573.67 L1478.0,573.11 L1479.0,572.59 L1480.0,572.10 L1481.0,571.65 L1482.0,571.25 L1483.0,570.89 L1484.0,570.58 L1485.0,570.33 L1486.0,570.12 L1487.0,569.96 L1488.0,569.87 L1489.0,569.82 L1490.0,569.83 L1491.0,569.90 L1492.0,570.02 L1493.0,570.20 L1494.0,570.43 L1495.0,570.71 L1496.0,571.04 L1497.0,571.42 L1498.0,571.84 L1499.0,572.31 L1500.0,572.81 L1501.0,573.35 L1502.0,573.93 L1503.0,574.53 L1504.0,575.17 L1505.0,575.82 L1506.0,576.50 L1507.0,577.20 L1508.0,577.91 L1509.0,578.64 L1510.0,579.37 L1511.0,580.11 L1512.0,580.86 L1513.0,581.61 L1514.0,582.36 L1515.0,583.11 L1516.0,583.86 L1517.0,584.60 L1518.0,585.34 L1519.0,586.07 L1520.0,586.80 L1521.0,587.51 L1522.0,588.22 L1523.0,588.91 L1524.0,589.60 L1525.0,590.27 L1526.0,590.93 L1527.0,591.57 L1528.0,592.21 L1529.0,592.83 L1530.0,593.44 L1531.0,594.03 L1532.0,594.62 L1533.0,595.18 L1534.0,595.74 L1535.0,596.28 L1536.0,596.81 L1537.0,597.33 L1538.0,597.83 L1539.0,598.32 L1540.0,598.80 L1541.0,599.27 L1542.0,599.72 L1543.0,600.16 L1544.0,600.59 L1545.0,601.01 L1546.0,601.42 L1547.0,601.82 L1548.0,602.21 L1549.0,602.58 L1550.0,602.95 L1551.0,603.31 L1552.0,603.65 L1553.0,603.99 L1554.0,604.32 L1555.0,604.64 L1556.0,604.95 L1557.0,605.26 L1558.0,605.55 L1559.0,605.84 L1560.0,606.12 L1561.0,606.39 L1562.0,606.66 L1563.0,606.92 L1564.0,607.17 L1565.0,607.41 L1566.0,607.65 L1567.0,607.89 L1568.0,608.11 L1569.0,608.33 L1570.0,608.55 L1571.0,608.76 L1572.0,608.97 L1573.0,609.17 L1574.0,609.37 L1575.0,609.56 L1576.0,609.75 L1577.0,609.93 L1578.0,610.11 L1579.0,610.28 L1580.0,610.45 L1581.0,610.62 L1582.0,610.78 L1583.0,610.93 L1584.0,611.08 L1585.0,611.23 L1586.0,611.38 L1587.0,611.52 L1588.0,611.66 L1589.0,611.79 L1590.0,611.93 L1591.0,612.06 L1592.0,612.18 L1593.0,612.30 L1594.0,612.42 L1595.0,612.54 L1596.0,612.65 L1597.0,612.77 L1598.0,612.88 L1599.0,612.98 L1600.0,613.09 L1601.0,613.19 L1602.0,613.29 L1603.0,613.38 L1604.0,613.48 L1605.0,613.57 L1606.0,613.66 L1607.0,613.75 L1608.0,613.84 L1609.0,613.92 L1610.0,614.01 L1611.0,614.09 L1612.0,614.17 L1613.0,614.25 L1614.0,614.32 L1615.0,614.40 L1616.0,614.47 L1617.0,614.54 L1618.0,614.61 L1619.0,614.67 L1620.0,614.74 L1621.0,614.80 L1622.0,614.86 L1623.0,614.93 L1624.0,614.99 L1625.0,615.05 L1626.0,615.10 L1627.0,615.16 L1628.0,615.22 L1629.0,615.27 L1630.0,615.32 L1631.0,615.38 L1632.0,615.43 L1633.0,615.48 L1634.0,615.53 L1635.0,615.58 L1636.0,615.62 L1637.0,615.67 L1638.0,615.72 L1639.0,615.76 L1640.0,615.81 L1641.0,615.85 L1642.0,615.89 L1643.0,615.93 L1644.0,615.97 L1645.0,616.02 L1646.0,616.05 L1647.0,616.09 L1648.0,616.13 L1649.0,616.17 L1650.0,616.21 L1651.0,616.24 L1652.0,616.28 L1653.0,616.31 L1654.0,616.35 L1655.0,616.39 L1656.0,616.42 L1657.0,616.45 L1658.0,616.49 L1659.0,616.52 L1660.0,616.55 L1661.0,616.58 L1662.0,616.62 L1663.0,616.65 L1664.0,616.68 L1665.0,616.71 L1666.0,616.73 L1667.0,616.76 L1668.0,616.79 L1669.0,616.82 L1670.0,616.85 L1671.0,616.87 L1672.0,616.90 L1673.0,616.92 L1674.0,616.95 L1675.0,616.97 L1676.0,617.00 L1677.0,617.02 L1678.0,617.05 L1679.0,617.07 L1680.0,617.09 L1681.0,617.11 L1682.0,617.14 L1683.0,617.16 L1684.0,617.18 L1685.0,617.20 L1686.0,617.22 L1687.0,617.23 L1688.0,617.25 L1689.0,617.27 L1690.0,617.29 L1691.0,617.31 L1692.0,617.33 L1693.0,617.34 L1694.0,617.36 L1695.0,617.38 L1696.0,617.40 L1697.0,617.41 L1698.0,617.43 L1699.0,617.44 L1700.0,617.46 L1701.0,617.48 L1702.0,617.49 L1703.0,617.51 L1704.0,617.52 L1705.0,617.54 L1706.0,617.55 L1707.0,617.56 L1708.0,617.58 L1709.0,617.59 L1710.0,617.61 L1711.0,617.62 L1712.0,617.64 L1713.0,617.65 L1714.0,617.66 L1715.0,617.68 L1716.0,617.69 L1717.0,617.70 L1718.0,617.72 L1719.0,617.73 L1720.0,617.74 L1721.0,617.75 L1722.0,617.77 L1723.0,617.78 L1724.0,617.79 L1725.0,617.80 L1726.0,617.81 L1727.0,617.82 L1728.0,617.84 L1729.0,617.85 L1730.0,617.86 L1731.0,617.87 L1732.0,617.88 L1733.0,617.89 L1734.0,617.90 L1735.0,617.91 L1736.0,617.92 L1737.0,617.93 L1738.0,617.94 L1739.0,617.94 L1740.0,617.95 L1741.0,617.96 L1742.0,617.97 L1743.0,617.98 L1744.0,617.99 L1745.0,618.00 L1746.0,618.01 L1747.0,618.01 L1748.0,618.02 L1749.0,618.03 L1750.0,618.04 L1751.0,618.04 L1752.0,618.05 L1753.0,618.06 L1754.0,618.06 L1755.0,618.07 L1756.0,618.08 L1757.0,618.09 L1758.0,618.09 L1759.0,618.10 L1760.0,618.11 L1761.0,618.11 L1762.0,618.12 L1763.0,618.12 L1764.0,618.13 L1765.0,618.14 L1766.0,618.14 L1767.0,618.15 L1768.0,618.15 L1769.0,618.16 L1770.0,618.17 L1771.0,618.17 L1772.0,618.18 L1773.0,618.18 L1774.0,618.19 L1775.0,618.20 L1776.0,618.20 L1777.0,618.21 L1778.0,618.21 L1779.0,618.22 L1780.0,618.22 L1781.0,618.23 L1782.0,618.23 L1783.0,618.24 L1784.0,618.24 L1785.0,618.25 L1786.0,618.25 L1787.0,618.26 L1788.0,618.26 L1789.0,618.27 L1790.0,618.27 L1791.0,618.27 L1792.0,618.28 L1793.0,618.28 L1794.0,618.29 L1795.0,618.29 L1796.0,618.30 L1797.0,618.30 L1798.0,618.30 L1799.0,618.31 L1800.0,618.31 L1801.0,618.32 L1802.0,618.32 L1803.0,618.32 L1804.0,618.33 L1805.0,618.33 L1806.0,618.33 L1807.0,618.34 L1808.0,618.34 L1809.0,618.34 L1810.0,618.35 L1811.0,618.35 L1812.0,618.35 L1813.0,618.36 L1814.0,618.36 L1815.0,618.36 L1816.0,618.37 L1817.0,618.37 L1818.0,618.37 L1819.0,618.38 L1820.0,618.38 L1821.0,618.38 L1822.0,618.38 L1823.0,618.39 L1824.0,618.39 L1825.0,618.39 L1826.0,618.40 L1827.0,618.40 L1828.0,618.40 L1829.0,618.40 L1830.0,618.41 L1831.0,618.41 L1832.0,618.41 L1833.0,618.41 L1834.0,618.42 L1835.0,618.42 L1836.0,618.42 L1837.0,618.42 L1838.0,618.42 L1839.0,618.43 L1840.0,618.43 L1841.0,618.43 L1842.0,618.43 L1843.0,618.43 L1844.0,618.44 L1845.0,618.44 L1846.0,618.44 L1847.0,618.44 L1848.0,618.44 L1849.0,618.45 L1850.0,618.45 L1851.0,618.45 L1852.0,618.45 L1853.0,618.45 L1854.0,618.45 L1855.0,618.46 L1856.0,618.46 L1857.0,618.46 L1858.0,618.46 L1859.0,618.46 L1860.0,618.46 L1861.0,618.47 L1862.0,618.47 L1863.0,618.47 L1864.0,618.47 L1865.0,618.47 L1866.0,618.47 L1867.0,618.47 L1868.0,618.47 L1869.0,618.48 L1870.0,618.48 L1871.0,618.48 L1872.0,618.48 L1873.0,618.48 L1874.0,618.48 L1875.0,618.48 L1876.0,618.48 L1877.0,618.48 L1878.0,618.49 L1879.0,618.49 L1880.0,618.49 L1881.0,618.49 L1882.0,618.49 L1883.0,618.49 L1884.0,618.49 L1885.0,618.49 L1886.0,618.49 L1887.0,618.49 L1888.0,618.49 L1889.0,618.49 L1890.0,618.49 L1891.0,618.50 L1892.0,618.50 L1893.0,618.50" fill="none" stroke="#ff7a1a" stroke-width="1.2"/>
<path d="M656.0,618.50 L657.0,618.50 L658.0,618.50 L659.0,618.50 L660.0,618.50 L661.0,618.50 L662.0,618.50 L663.0,618.50 L664.0,618.50 L665.0,618.50 L666.0,618.50 L667.0,618.50 L668.0,618.50 L669.0,618.50 L670.0,618.50 L671.0,618.50 L672.0,618.50 L673.0,618.50 L674.0,618.50 L675.0,618.50 L676.0,618.50 L677.0,618.50 L678.0,618.50 L679.0,618.50 L680.0,618.50 L681.0,618.50 L682.0,618.50 L683.0,618.50 L684.0,618.50 L685.0,618.50 L686.0,618.50 L687.0,618.50 L688.0,618.50 L689.0,618.50 L690.0,618.50 L691.0,618.50 L692.0,618.50 L693.0,618.50 L694.0,618.50 L695.0,618.50 L696.0,618.50 L697.0,618.50 L698.0,618.50 L699.0,618.50 L700.0,618.50 L701.0,618.50 L702.0,618.50 L703.0,618.50 L704.0,618.50 L705.0,618.50 L706.0,618.50 L707.0,618.50 L708.0,618.50 L709.0,618.50 L710.0,618.50 L711.0,618.50 L712.0,618.50 L713.0,618.50 L714.0,618.50 L715.0,618.50 L716.0,618.50 L717.0,618.50 L718.0,618.50 L719.0,618.50 L720.0,618.50 L721.0,618.50 L722.0,618.50 L723.0,618.50 L724.0,618.50 L725.0,618.50 L726.0,618.50 L727.0,618.50 L728.0,618.50 L729.0,618.50 L730.0,618.50 L731.0,618.50 L732.0,618.50 L733.0,618.50 L734.0,618.50 L735.0,618.50 L736.0,618.50 L737.0,618.50 L738.0,618.50 L739.0,618.50 L740.0,618.50 L741.0,618.50 L742.0,618.50 L743.0,618.50 L744.0,618.50 L745.0,618.50 L746.0,618.50 L747.0,618.50 L748.0,618.50 L749.0,618.50 L750.0,618.50 L751.0,618.50 L752.0,618.50 L753.0,618.50 L754.0,618.50 L755.0,618.50 L756.0,618.50 L757.0,618.50 L758.0,618.50 L759.0,618.50 L760.0,618.50 L761.0,618.50 L762.0,618.50 L763.0,618.50 L764.0,618.50 L765.0,618.50 L766.0,618.50 L767.0,618.50 L768.0,618.50 L769.0,618.50 L770.0,618.50 L771.0,618.50 L772.0,618.50 L773.0,618.50 L774.0,618.50 L775.0,618.50 L776.0,618.50 L777.0,618.50 L778.0,618.50 L779.0,618.50 L780.0,618.50 L781.0,618.50 L782.0,618.50 L783.0,618.50 L784.0,618.50 L785.0,618.50 L786.0,618.50 L787.0,618.50 L788.0,618.50 L789.0,618.50 L790.0,618.50 L791.0,618.50 L792.0,618.50 L793.0,618.50 L794.0,618.50 L795.0,618.50 L796.0,618.50 L797.0,618.50 L798.0,618.50 L799.0,618.50 L800.0,618.50 L801.0,618.50 L802.0,618.50 L803.0,618.50 L804.0,618.50 L805.0,618.50 L806.0,618.50 L807.0,618.50 L808.0,618.50 L809.0,618.50 L810.0,618.50 L811.0,618.50 L812.0,618.50 L813.0,618.50 L814.0,618.50 L815.0,618.50 L816.0,618.50 L817.0,618.50 L818.0,618.50 L819.0,618.50 L820.0,618.50 L821.0,618.50 L822.0,618.50 L823.0,618.50 L824.0,618.50 L825.0,618.50 L826.0,618.50 L827.0,618.50 L828.0,618.50 L829.0,618.50 L830.0,618.50 L831.0,618.50 L832.0,618.50 L833.0,618.50 L834.0,618.50 L835.0,618.50 L836.0,618.50 L837.0,618.50 L838.0,618.50 L839.0,618.50 L840.0,618.50 L841.0,618.50 L842.0,618.50 L843.0,618.50 L844.0,618.50 L845.0,618.50 L846.0,618.50 L847.0,618.50 L848.0,618.50 L849.0,618.50 L850.0,618.50 L851.0,618.50 L852.0,618.50 L853.0,618.50 L854.0,618.50 L855.0,618.50 L856.0,618.50 L857.0,618.50 L858.0,618.50 L859.0,618.50 L860.0,618.50 L861.0,618.50 L862.0,618.50 L863.0,618.50 L864.0,618.50 L865.0,618.50 L866.0,618.50 L867.0,618.50 L868.0,618.50 L869.0,618.50 L870.0,618.50 L871.0,618.50 L872.0,618.50 L873.0,618.50 L874.0,618.50 L875.0,618.50 L876.0,618.50 L877.0,618.50 L878.0,618.50 L879.0,618.50 L880.0,618.50 L881.0,618.50 L882.0,618.50 L883.0,618.50 L884.0,618.50 L885.0,618.50 L886.0,618.50 L887.0,618.50 L888.0,618.50 L889.0,618.50 L890.0,618.50 L891.0,618.50 L892.0,618.50 L893.0,618.50 L894.0,618.50 L895.0,618.50 L896.0,618.50 L897.0,618.50 L898.0,618.50 L899.0,618.50 L900.0,618.50 L901.0,618.50 L902.0,618.50 L903.0,618.50 L904.0,618.50 L905.0,618.50 L906.0,618.50 L907.0,618.50 L908.0,618.50 L909.0,618.50 L910.0,618.50 L911.0,618.50 L912.0,618.50 L913.0,618.50 L914.0,618.50 L915.0,618.50 L916.0,618.50 L917.0,618.50 L918.0,618.50 L919.0,618.50 L920.0,618.50 L921.0,618.50 L922.0,618.50 L923.0,618.50 L924.0,618.50 L925.0,618.50 L926.0,618.50 L927.0,618.50 L928.0,618.50 L929.0,618.50 L930.0,618.50 L931.0,618.50 L932.0,618.50 L933.0,618.50 L934.0,618.50 L935.0,618.50 L936.0,618.50 L937.0,618.50 L938.0,618.50 L939.0,618.50 L940.0,618.50 L941.0,618.50 L942.0,618.50 L943.0,618.50 L944.0,618.50 L945.0,618.50 L946.0,618.50 L947.0,618.50 L948.0,618.50 L949.0,618.50 L950.0,618.50 L951.0,618.50 L952.0,618.50 L953.0,618.50 L954.0,618.50 L955.0,618.50 L956.0,618.50 L957.0,618.50 L958.0,618.50 L959.0,618.50 L960.0,618.50 L961.0,618.50 L962.0,618.50 L963.0,618.50 L964.0,618.50 L965.0,618.50 L966.0,618.50 L967.0,618.50 L968.0,618.50 L969.0,618.50 L970.0,618.50 L971.0,618.50 L972.0,618.50 L973.0,618.50 L974.0,618.50 L975.0,618.50 L976.0,618.50 L977.0,618.50 L978.0,618.50 L979.0,618.50 L980.0,618.50 L981.0,618.50 L982.0,618.50 L983.0,618.50 L984.0,618.50 L985.0,618.50 L986.0,618.50 L987.0,618.50 L988.0,618.50 L989.0,618.50 L990.0,618.50 L991.0,618.50 L992.0,618.50 L993.0,618.50 L994.0,618.50 L995.0,618.50 L996.0,618.50 L997.0,618.50 L998.0,618.50 L999.0,618.50 L1000.0,618.50 L1001.0,618.50 L1002.0,618.50 L1003.0,618.50 L1004.0,618.50 L1005.0,618.50 L1006.0,618.50 L1007.0,618.50 L1008.0,618.50 L1009.0,618.50 L1010.0,618.50 L1011.0,618.50 L1012.0,618.50 L1013.0,618.50 L1014.0,618.50 L1015.0,618.50 L1016.0,618.50 L1017.0,618.50 L1018.0,618.50 L1019.0,618.50 L1020.0,618.50 L1021.0,618.50 L1022.0,618.50 L1023.0,618.50 L1024.0,618.50 L1025.0,618.50 L1026.0,618.50 L1027.0,618.50 L1028.0,618.50 L1029.0,618.50 L1030.0,618.50 L1031.0,618.50 L1032.0,618.50 L1033.0,618.50 L1034.0,618.50 L1035.0,618.50 L1036.0,618.50 L1037.0,618.50 L1038.0,618.50 L1039.0,618.50 L1040.0,618.50 L1041.0,618.50 L1042.0,618.50 L1043.0,618.50 L1044.0,618.50 L1045.0,618.50 L1046.0,618.50 L1047.0,618.50 L1048.0,618.50 L1049.0,618.50 L1050.0,618.50 L1051.0,618.50 L1052.0,618.50 L1053.0,618.50 L1054.0,618.50 L1055.0,618.50 L1056.0,618.50 L1057.0,618.50 L1058.0,618.50 L1059.0,618.50 L1060.0,618.50 L1061.0,618.50 L1062.0,618.50 L1063.0,618.50 L1064.0,618.50 L1065.0,618.50 L1066.0,618.50 L1067.0,618.50 L1068.0,618.50 L1069.0,618.50 L1070.0,618.50 L1071.0,618.50 L1072.0,618.50 L1073.0,618.50 L1074.0,618.50 L1075.0,618.50 L1076.0,618.50 L1077.0,618.50 L1078.0,618.50 L1079.0,618.50 L1080.0,618.50 L1081.0,618.50 L1082.0,618.50 L1083.0,618.49 L1084.0,618.49 L1085.0,618.49 L1086.0,618.49 L1087.0,618.49 L1088.0,618.49 L1089.0,618.49 L1090.0,618.49 L1091.0,618.49 L1092.0,618.49 L1093.0,618.49 L1094.0,618.49 L1095.0,618.49 L1096.0,618.49 L1097.0,618.49 L1098.0,618.49 L1099.0,618.49 L1100.0,618.49 L1101.0,618.49 L1102.0,618.49 L1103.0,618.49 L1104.0,618.49 L1105.0,618.49 L1106.0,618.49 L1107.0,618.49 L1108.0,618.49 L1109.0,618.49 L1110.0,618.49 L1111.0,618.49 L1112.0,618.49 L1113.0,618.49 L1114.0,618.49 L1115.0,618.49 L1116.0,618.49 L1117.0,618.49 L1118.0,618.49 L1119.0,618.49 L1120.0,618.49 L1121.0,618.49 L1122.0,618.49 L1123.0,618.49 L1124.0,618.49 L1125.0,618.49 L1126.0,618.49 L1127.0,618.49 L1128.0,618.49 L1129.0,618.49 L1130.0,618.49 L1131.0,618.49 L1132.0,618.49 L1133.0,618.49 L1134.0,618.49 L1135.0,618.49 L1136.0,618.49 L1137.0,618.49 L1138.0,618.49 L1139.0,618.49 L1140.0,618.49 L1141.0,618.49 L1142.0,618.49 L1143.0,618.49 L1144.0,618.49 L1145.0,618.49 L1146.0,618.49 L1147.0,618.49 L1148.0,618.49 L1149.0,618.49 L1150.0,618.49 L1151.0,618.49 L1152.0,618.49 L1153.0,618.49 L1154.0,618.49 L1155.0,618.49 L1156.0,618.49 L1157.0,618.49 L1158.0,618.49 L1159.0,618.49 L1160.0,618.49 L1161.0,618.49 L1162.0,618.49 L1163.0,618.49 L1164.0,618.49 L1165.0,618.49 L1166.0,618.49 L1167.0,618.49 L1168.0,618.49 L1169.0,618.49 L1170.0,618.49 L1171.0,618.49 L1172.0,618.48 L1173.0,618.48 L1174.0,618.48 L1175.0,618.48 L1176.0,618.48 L1177.0,618.48 L1178.0,618.48 L1179.0,618.48 L1180.0,618.48 L1181.0,618.48 L1182.0,618.48 L1183.0,618.48 L1184.0,618.48 L1185.0,618.48 L1186.0,618.48 L1187.0,618.48 L1188.0,618.48 L1189.0,618.48 L1190.0,618.48 L1191.0,618.48 L1192.0,618.48 L1193.0,618.48 L1194.0,618.48 L1195.0,618.48 L1196.0,618.48 L1197.0,618.48 L1198.0,618.48 L1199.0,618.48 L1200.0,618.48 L1201.0,618.48 L1202.0,618.48 L1203.0,618.48 L1204.0,618.48 L1205.0,618.48 L1206.0,618.48 L1207.0,618.48 L1208.0,618.48 L1209.0,618.48 L1210.0,618.48 L1211.0,618.48 L1212.0,618.48 L1213.0,618.47 L1214.0,618.47 L1215.0,618.47 L1216.0,618.47 L1217.0,618.47 L1218.0,618.47 L1219.0,618.47 L1220.0,618.47 L1221.0,618.47 L1222.0,618.47 L1223.0,618.47 L1224.0,618.47 L1225.0,618.47 L1226.0,618.47 L1227.0,618.47 L1228.0,618.47 L1229.0,618.47 L1230.0,618.47 L1231.0,618.47 L1232.0,618.47 L1233.0,618.47 L1234.0,618.47 L1235.0,618.47 L1236.0,618.47 L1237.0,618.47 L1238.0,618.47 L1239.0,618.47 L1240.0,618.46 L1241.0,618.46 L1242.0,618.46 L1243.0,618.46 L1244.0,618.46 L1245.0,618.46 L1246.0,618.46 L1247.0,618.46 L1248.0,618.46 L1249.0,618.46 L1250.0,618.46 L1251.0,618.46 L1252.0,618.46 L1253.0,618.46 L1254.0,618.46 L1255.0,618.46 L1256.0,618.46 L1257.0,618.46 L1258.0,618.46 L1259.0,618.46 L1260.0,618.45 L1261.0,618.45 L1262.0,618.45 L1263.0,618.45 L1264.0,618.45 L1265.0,618.45 L1266.0,618.45 L1267.0,618.45 L1268.0,618.45 L1269.0,618.45 L1270.0,618.45 L1271.0,618.45 L1272.0,618.45 L1273.0,618.45 L1274.0,618.45 L1275.0,618.45 L1276.0,618.44 L1277.0,618.44 L1278.0,618.44 L1279.0,618.44 L1280.0,618.44 L1281.0,618.44 L1282.0,618.44 L1283.0,618.44 L1284.0,618.44 L1285.0,618.44 L1286.0,618.44 L1287.0,618.44 L1288.0,618.44 L1289.0,618.44 L1290.0,618.43 L1291.0,618.43 L1292.0,618.43 L1293.0,618.43 L1294.0,618.43 L1295.0,618.43 L1296.0,618.43 L1297.0,618.43 L1298.0,618.43 L1299.0,618.43 L1300.0,618.43 L1301.0,618.42 L1302.0,618.42 L1303.0,618.42 L1304.0,618.42 L1305.0,618.42 L1306.0,618.42 L1307.0,618.42 L1308.0,618.42 L1309.0,618.42 L1310.0,618.42 L1311.0,618.41 L1312.0,618.41 L1313.0,618.41 L1314.0,618.41 L1315.0,618.41 L1316.0,618.41 L1317.0,618.41 L1318.0,618.41 L1319.0,618.41 L1320.0,618.40 L1321.0,618.40 L1322.0,618.40 L1323.0,618.40 L1324.0,618.40 L1325.0,618.40 L1326.0,618.40 L1327.0,618.39 L1328.0,618.39 L1329.0,618.39 L1330.0,618.39 L1331.0,618.39 L1332.0,618.39 L1333.0,618.39 L1334.0,618.38 L1335.0,618.38 L1336.0,618.38 L1337.0,618.38 L1338.0,618.38 L1339.0,618.38 L1340.0,618.38 L1341.0,618.37 L1342.0,618.37 L1343.0,618.37 L1344.0,618.37 L1345.0,618.37 L1346.0,618.36 L1347.0,618.36 L1348.0,618.36 L1349.0,618.36 L1350.0,618.36 L1351.0,618.36 L1352.0,618.35 L1353.0,618.35 L1354.0,618.35 L1355.0,618.35 L1356.0,618.35 L1357.0,618.34 L1358.0,618.34 L1359.0,618.34 L1360.0,618.34 L1361.0,618.34 L1362.0,618.33 L1363.0,618.33 L1364.0,618.33 L1365.0,618.33 L1366.0,618.33 L1367.0,618.32 L1368.0,618.32 L1369.0,618.32 L1370.0,618.32 L1371.0,618.31 L1372.0,618.31 L1373.0,618.31 L1374.0,618.31 L1375.0,618.30 L1376.0,618.30 L1377.0,618.30 L1378.0,618.30 L1379.0,618.29 L1380.0,618.29 L1381.0,618.29 L1382.0,618.28 L1383.0,618.28 L1384.0,618.28 L1385.0,618.28 L1386.0,618.27 L1387.0,618.27 L1388.0,618.27 L1389.0,618.26 L1390.0,618.26 L1391.0,618.26 L1392.0,618.25 L1393.0,618.25 L1394.0,618.25 L1395.0,618.24 L1396.0,618.24 L1397.0,618.24 L1398.0,618.23 L1399.0,618.23 L1400.0,618.23 L1401.0,618.22 L1402.0,618.22 L1403.0,618.21 L1404.0,618.21 L1405.0,618.21 L1406.0,618.20 L1407.0,618.20 L1408.0,618.19 L1409.0,618.19 L1410.0,618.19 L1411.0,618.18 L1412.0,618.18 L1413.0,618.17 L1414.0,618.17 L1415.0,618.16 L1416.0,618.16 L1417.0,618.15 L1418.0,618.15 L1419.0,618.14 L1420.0,618.14 L1421.0,618.13 L1422.0,618.13 L1423.0,618.12 L1424.0,618.12 L1425.0,618.11 L1426.0,618.11 L1427.0,618.10 L1428.0,618.10 L1429.0,618.09 L1430.0,618.08 L1431.0,618.08 L1432.0,618.07 L1433.0,618.07 L1434.0,618.06 L1435.0,618.05 L1436.0,618.05 L1437.0,618.04 L1438.0,618.03 L1439.0,618.03 L1440.0,618.02 L1441.0,618.01 L1442.0,618.01 L1443.0,618.00 L1444.0,617.99 L1445.0,617.98 L1446.0,617.98 L1447.0,617.97 L1448.0,617.96 L1449.0,617.95 L1450.0,617.94 L1451.0,617.94 L1452.0,617.93 L1453.0,617.92 L1454.0,617.91 L1455.0,617.90 L1456.0,617.89 L1457.0,617.88 L1458.0,617.87 L1459.0,617.86 L1460.0,617.85 L1461.0,617.84 L1462.0,617.83 L1463.0,617.82 L1464.0,617.81 L1465.0,617.80 L1466.0,617.79 L1467.0,617.78 L1468.0,617.77 L1469.0,617.76 L1470.0,617.75 L1471.0,617.73 L1472.0,617.72 L1473.0,617.71 L1474.0,617.70 L1475.0,617.68 L1476.0,617.67 L1477.0,617.66 L1478.0,617.64 L1479.0,617.63 L1480.0,617.62 L1481.0,617.60 L1482.0,617.59 L1483.0,617.57 L1484.0,617.56 L1485.0,617.54 L1486.0,617.53 L1487.0,617.51 L1488.0,617.49 L1489.0,617.48 L1490.0,617.46 L1491.0,617.44 L1492.0,617.42 L1493.0,617.41 L1494.0,617.39 L1495.0,617.37 L1496.0,617.35 L1497.0,617.33 L1498.0,617.31 L1499.0,617.29 L1500.0,617.27 L1501.0,617.24 L1502.0,617.22 L1503.0,617.20 L1504.0,617.18 L1505.0,617.15 L1506.0,617.13 L1507.0,617.10 L1508.0,617.08 L1509.0,617.05 L1510.0,617.03 L1511.0,617.00 L1512.0,616.97 L1513.0,616.94 L1514.0,616.91 L1515.0,616.88 L1516.0,616.85 L1517.0,616.82 L1518.0,616.79 L1519.0,616.76 L1520.0,616.72 L1521.0,616.69 L1522.0,616.65 L1523.0,616.62 L1524.0,616.58 L1525.0,616.54 L1526.0,616.50 L1527.0,616.46 L1528.0,616.42 L1529.0,616.38 L1530.0,616.33 L1531.0,616.29 L1532.0,616.24 L1533.0,616.20 L1534.0,616.15 L1535.0,616.10 L1536.0,616.05 L1537.0,615.99 L1538.0,615.94 L1539.0,615.89 L1540.0,615.83 L1541.0,615.77 L1542.0,615.71 L1543.0,615.65 L1544.0,615.58 L1545.0,615.52 L1546.0,615.45 L1547.0,615.38 L1548.0,615.30 L1549.0,615.23 L1550.0,615.15 L1551.0,615.07 L1552.0,614.99 L1553.0,614.91 L1554.0,614.82 L1555.0,614.73 L1556.0,614.63 L1557.0,614.54 L1558.0,614.44 L1559.0,614.33 L1560.0,614.23 L1561.0,614.12 L1562.0,614.00 L1563.0,613.88 L1564.0,613.76 L1565.0,613.63 L1566.0,613.50 L1567.0,613.36 L1568.0,613.22 L1569.0,613.07 L1570.0,612.92 L1571.0,612.76 L1572.0,612.59 L1573.0,612.41 L1574.0,612.23 L1575.0,612.04 L1576.0,611.84 L1577.0,611.63 L1578.0,611.42 L1579.0,611.20 L1580.0,610.96 L1581.0,610.72 L1582.0,610.46 L1583.0,610.20 L1584.0,609.92 L1585.0,609.63 L1586.0,609.32 L1587.0,609.00 L1588.0,608.67 L1589.0,608.32 L1590.0,607.96 L1591.0,607.57 L1592.0,607.17 L1593.0,606.75 L1594.0,606.31 L1595.0,605.84 L1596.0,605.36 L1597.0,604.85 L1598.0,604.31 L1599.0,603.74 L1600.0,603.15 L1601.0,602.53 L1602.0,601.88 L1603.0,601.19 L1604.0,600.47 L1605.0,599.71 L1606.0,598.91 L1607.0,598.08 L1608.0,597.20 L1609.0,596.28 L1610.0,595.32 L1611.0,594.32 L1612.0,593.27 L1613.0,592.18 L1614.0,591.05 L1615.0,589.87 L1616.0,588.67 L1617.0,587.46 L1618.0,586.22 L1619.0,584.95 L1620.0,583.66 L1621.0,582.36 L1622.0,581.05 L1623.0,579.75 L1624.0,578.46 L1625.0,577.21 L1626.0,576.00 L1627.0,574.85 L1628.0,573.77 L1629.0,572.80 L1630.0,571.94 L1631.0,571.20 L1632.0,570.61 L1633.0,570.18 L1634.0,569.91 L1635.0,569.82 L1636.0,569.90 L1637.0,570.16 L1638.0,570.58 L1639.0,571.17 L1640.0,571.90 L1641.0,572.77 L1642.0,573.75 L1643.0,574.83 L1644.0,575.99 L1645.0,577.22 L1646.0,578.50 L1647.0,579.81 L1648.0,581.13 L1649.0,582.47 L1650.0,583.80 L1651.0,585.11 L1652.0,586.41 L1653.0,587.70 L1654.0,588.99 L1655.0,590.24 L1656.0,591.44 L1657.0,592.60 L1658.0,593.72 L1659.0,594.79 L1660.0,595.81 L1661.0,596.79 L1662.0,597.73 L1663.0,598.62 L1664.0,599.47 L1665.0,600.27 L1666.0,601.04 L1667.0,601.77 L1668.0,602.47 L1669.0,603.13 L1670.0,603.76 L1671.0,604.35 L1672.0,604.92 L1673.0,605.46 L1674.0,605.97 L1675.0,606.46 L1676.0,606.93 L1677.0,607.37 L1678.0,607.79 L1679.0,608.19 L1680.0,608.57 L1681.0,608.94 L1682.0,609.27 L1683.0,609.59 L1684.0,609.89 L1685.0,610.17 L1686.0,610.45 L1687.0,610.71 L1688.0,610.96 L1689.0,611.20 L1690.0,611.43 L1691.0,611.66 L1692.0,611.87 L1693.0,612.07 L1694.0,612.27 L1695.0,612.46 L1696.0,612.64 L1697.0,612.81 L1698.0,612.98 L1699.0,613.14 L1700.0,613.30 L1701.0,613.45 L1702.0,613.59 L1703.0,613.73 L1704.0,613.86 L1705.0,613.99 L1706.0,614.12 L1707.0,614.24 L1708.0,614.36 L1709.0,614.48 L1710.0,614.59 L1711.0,614.71 L1712.0,614.81 L1713.0,614.92 L1714.0,615.02 L1715.0,615.11 L1716.0,615.21 L1717.0,615.30 L1718.0,615.38 L1719.0,615.47 L1720.0,615.55 L1721.0,615.63 L1722.0,615.70 L1723.0,615.77 L1724.0,615.85 L1725.0,615.91 L1726.0,615.98 L1727.0,616.05 L1728.0,616.11 L1729.0,616.17 L1730.0,616.23 L1731.0,616.28 L1732.0,616.34 L1733.0,616.39 L1734.0,616.44 L1735.0,616.49 L1736.0,616.54 L1737.0,616.58 L1738.0,616.63 L1739.0,616.67 L1740.0,616.72 L1741.0,616.76 L1742.0,616.80 L1743.0,616.84 L1744.0,616.88 L1745.0,616.92 L1746.0,616.95 L1747.0,616.99 L1748.0,617.02 L1749.0,617.05 L1750.0,617.08 L1751.0,617.12 L1752.0,617.14 L1753.0,617.17 L1754.0,617.20 L1755.0,617.23 L1756.0,617.26 L1757.0,617.28 L1758.0,617.31 L1759.0,617.33 L1760.0,617.36 L1761.0,617.38 L1762.0,617.41 L1763.0,617.43 L1764.0,617.45 L1765.0,617.47 L1766.0,617.50 L1767.0,617.52 L1768.0,617.54 L1769.0,617.56 L1770.0,617.58 L1771.0,617.60 L1772.0,617.62 L1773.0,617.64 L1774.0,617.66 L1775.0,617.68 L1776.0,617.70 L1777.0,617.72 L1778.0,617.73 L1779.0,617.75 L1780.0,617.77 L1781.0,617.78 L1782.0,617.80 L1783.0,617.82 L1784.0,617.83 L1785.0,617.85 L1786.0,617.86 L1787.0,617.87 L1788.0,617.89 L1789.0,617.90 L1790.0,617.92 L1791.0,617.93 L1792.0,617.94 L1793.0,617.95 L1794.0,617.97 L1795.0,617.98 L1796.0,617.99 L1797.0,618.00 L1798.0,618.01 L1799.0,618.03 L1800.0,618.04 L1801.0,618.05 L1802.0,618.06 L1803.0,618.07 L1804.0,618.08 L1805.0,618.09 L1806.0,618.10 L1807.0,618.11 L1808.0,618.12 L1809.0,618.13 L1810.0,618.14 L1811.0,618.14 L1812.0,618.15 L1813.0,618.16 L1814.0,618.17 L1815.0,618.18 L1816.0,618.19 L1817.0,618.19 L1818.0,618.20 L1819.0,618.21 L1820.0,618.22 L1821.0,618.22 L1822.0,618.23 L1823.0,618.24 L1824.0,618.24 L1825.0,618.25 L1826.0,618.26 L1827.0,618.26 L1828.0,618.27 L1829.0,618.28 L1830.0,618.28 L1831.0,618.29 L1832.0,618.30 L1833.0,618.30 L1834.0,618.31 L1835.0,618.31 L1836.0,618.32 L1837.0,618.32 L1838.0,618.33 L1839.0,618.33 L1840.0,618.34 L1841.0,618.34 L1842.0,618.35 L1843.0,618.35 L1844.0,618.36 L1845.0,618.36 L1846.0,618.37 L1847.0,618.37 L1848.0,618.38 L1849.0,618.38 L1850.0,618.38 L1851.0,618.39 L1852.0,618.39 L1853.0,618.40 L1854.0,618.40 L1855.0,618.40 L1856.0,618.41 L1857.0,618.41 L1858.0,618.41 L1859.0,618.42 L1860.0,618.42 L1861.0,618.42 L1862.0,618.43 L1863.0,618.43 L1864.0,618.43 L1865.0,618.44 L1866.0,618.44 L1867.0,618.44 L1868.0,618.45 L1869.0,618.45 L1870.0,618.45 L1871.0,618.45 L1872.0,618.46 L1873.0,618.46 L1874.0,618.46 L1875.0,618.46 L1876.0,618.47 L1877.0,618.47 L1878.0,618.47 L1879.0,618.47 L1880.0,618.47 L1881.0,618.48 L1882.0,618.48 L1883.0,618.48 L1884.0,618.48 L1885.0,618.48 L1886.0,618.48 L1887.0,618.49 L1888.0,618.49 L1889.0,618.49 L1890.0,618.49 L1891.0,618.49 L1892.0,618.49 L1893.0,618.49" fill="none" stroke="#ff7a1a" stroke-width="1.2"/>
<path d="M656.0,618.52 L657.0,618.52 L658.0,618.52 L659.0,618.52 L660.0,618.52 L661.0,618.52 L662.0,618.52 L663.0,618.52 L664.0,618.52 L665.0,618.52 L666.0,618.52 L667.0,618.52 L668.0,618.52 L669.0,618.52 L670.0,618.52 L671.0,618.52 L672.0,618.52 L673.0,618.52 L674.0,618.52 L675.0,618.52 L676.0,618.53 L677.0,618.53 L678.0,618.53 L679.0,618.53 L680.0,618.53 L681.0,618.53 L682.0,618.53 L683.0,618.53 L684.0,618.53 L685.0,618.53 L686.0,618.53 L687.0,618.53 L688.0,618.53 L689.0,618.53 L690.0,618.53 L691.0,618.53 L692.0,618.53 L693.0,618.53 L694.0,618.53 L695.0,618.53 L696.0,618.53 L697.0,618.53 L698.0,618.53 L699.0,618.53 L700.0,618.53 L701.0,618.53 L702.0,618.54 L703.0,618.54 L704.0,618.54 L705.0,618.54 L706.0,618.54 L707.0,618.54 L708.0,618.54 L709.0,618.54 L710.0,618.54 L711.0,618.54 L712.0,618.54 L713.0,618.54 L714.0,618.54 L715.0,618.54 L716.0,618.54 L717.0,618.54 L718.0,618.54 L719.0,618.54 L720.0,618.54 L721.0,618.55 L722.0,618.55 L723.0,618.55 L724.0,618.55 L725.0,618.55 L726.0,618.55 L727.0,618.55 L728.0,618.55 L729.0,618.55 L730.0,618.55 L731.0,618.55 L732.0,618.55 L733.0,618.55 L734.0,618.55 L735.0,618.55 L736.0,618.55 L737.0,618.56 L738.0,618.56 L739.0,618.56 L740.0,618.56 L741.0,618.56 L742.0,618.56 L743.0,618.56 L744.0,618.56 L745.0,618.56 L746.0,618.56 L747.0,618.56 L748.0,618.56 L749.0,618.57 L750.0,618.57 L751.0,618.57 L752.0,618.57 L753.0,618.57 L754.0,618.57 L755.0,618.57 L756.0,618.57 L757.0,618.57 L758.0,618.57 L759.0,618.57 L760.0,618.58 L761.0,618.58 L762.0,618.58 L763.0,618.58 L764.0,618.58 L765.0,618.58 L766.0,618.58 L767.0,618.58 L768.0,618.58 L769.0,618.58 L770.0,618.59 L771.0,618.59 L772.0,618.59 L773.0,618.59 L774.0,618.59 L775.0,618.59 L776.0,618.59 L777.0,618.59 L778.0,618.60 L779.0,618.60 L780.0,618.60 L781.0,618.60 L782.0,618.60 L783.0,618.60 L784.0,618.60 L785.0,618.61 L786.0,618.61 L787.0,618.61 L788.0,618.61 L789.0,618.61 L790.0,618.61 L791.0,618.61 L792.0,618.62 L793.0,618.62 L794.0,618.62 L795.0,618.62 L796.0,618.62 L797.0,618.62 L798.0,618.63 L799.0,618.63 L800.0,618.63 L801.0,618.63 L802.0,618.63 L803.0,618.64 L804.0,618.64 L805.0,618.64 L806.0,618.64 L807.0,618.64 L808.0,618.64 L809.0,618.65 L810.0,618.65 L811.0,618.65 L812.0,618.65 L813.0,618.66 L814.0,618.66 L815.0,618.66 L816.0,618.66 L817.0,618.66 L818.0,618.67 L819.0,618.67 L820.0,618.67 L821.0,618.67 L822.0,618.68 L823.0,618.68 L824.0,618.68 L825.0,618.68 L826.0,618.69 L827.0,618.69 L828.0,618.69 L829.0,618.70 L830.0,618.70 L831.0,618.70 L832.0,618.70 L833.0,618.71 L834.0,618.71 L835.0,618.71 L836.0,618.72 L837.0,618.72 L838.0,618.72 L839.0,618.73 L840.0,618.73 L841.0,618.73 L842.0,618.74 L843.0,618.74 L844.0,618.74 L845.0,618.75 L846.0,618.75 L847.0,618.75 L848.0,618.76 L849.0,618.76 L850.0,618.77 L851.0,618.77 L852.0,618.77 L853.0,618.78 L854.0,618.78 L855.0,618.79 L856.0,618.79 L857.0,618.80 L858.0,618.80 L859.0,618.81 L860.0,618.81 L861.0,618.82 L862.0,618.82 L863.0,618.83 L864.0,618.83 L865.0,618.84 L866.0,618.84 L867.0,618.85 L868.0,618.85 L869.0,618.86 L870.0,618.86 L871.0,618.87 L872.0,618.87 L873.0,618.88 L874.0,618.89 L875.0,618.89 L876.0,618.90 L877.0,618.90 L878.0,618.91 L879.0,618.92 L880.0,618.92 L881.0,618.93 L882.0,618.94 L883.0,618.94 L884.0,618.95 L885.0,618.96 L886.0,618.97 L887.0,618.97 L888.0,618.98 L889.0,618.99 L890.0,619.00 L891.0,619.01 L892.0,619.01 L893.0,619.02 L894.0,619.03 L895.0,619.04 L896.0,619.05 L897.0,619.06 L898.0,619.07 L899.0,619.08 L900.0,619.09 L901.0,619.10 L902.0,619.11 L903.0,619.12 L904.0,619.13 L905.0,619.14 L906.0,619.15 L907.0,619.16 L908.0,619.17 L909.0,619.19 L910.0,619.20 L911.0,619.21 L912.0,619.22 L913.0,619.24 L914.0,619.25 L915.0,619.26 L916.0,619.28 L917.0,619.29 L918.0,619.31 L919.0,619.32 L920.0,619.34 L921.0,619.35 L922.0,619.37 L923.0,619.39 L924.0,619.40 L925.0,619.42 L926.0,619.44 L927.0,619.46 L928.0,619.48 L929.0,619.50 L930.0,619.52 L931.0,619.54 L932.0,619.56 L933.0,619.58 L934.0,619.60 L935.0,619.62 L936.0,619.65 L937.0,619.67 L938.0,619.69 L939.0,619.72 L940.0,619.74 L941.0,619.77 L942.0,619.80 L943.0,619.82 L944.0,619.85 L945.0,619.88 L946.0,619.91 L947.0,619.94 L948.0,619.97 L949.0,620.01 L950.0,620.04 L951.0,620.07 L952.0,620.11 L953.0,620.15 L954.0,620.18 L955.0,620.22 L956.0,620.26 L957.0,620.30 L958.0,620.35 L959.0,620.39 L960.0,620.44 L961.0,620.48 L962.0,620.53 L963.0,620.59 L964.0,620.64 L965.0,620.69 L966.0,620.75 L967.0,620.81 L968.0,620.87 L969.0,620.94 L970.0,621.00 L971.0,621.07 L972.0,621.14 L973.0,621.21 L974.0,621.29 L975.0,621.37 L976.0,621.45 L977.0,621.54 L978.0,621.63 L979.0,621.72 L980.0,621.82 L981.0,621.92 L982.0,622.02 L983.0,622.13 L984.0,622.24 L985.0,622.35 L986.0,622.47 L987.0,622.60 L988.0,622.73 L989.0,622.87 L990.0,623.01 L991.0,623.16 L992.0,623.32 L993.0,623.48 L994.0,623.65 L995.0,623.83 L996.0,624.02 L997.0,624.22 L998.0,624.42 L999.0,624.64 L1000.0,624.87 L1001.0,625.11 L1002.0,625.36 L1003.0,625.63 L1004.0,625.91 L1005.0,626.20 L1006.0,626.51 L1007.0,626.83 L1008.0,627.18 L1009.0,627.54 L1010.0,627.92 L1011.0,628.33 L1012.0,628.75 L1013.0,629.20 L1014.0,629.68 L1015.0,630.18 L1016.0,630.71 L1017.0,631.27 L1018.0,631.86 L1019.0,632.48 L1020.0,633.14 L1021.0,633.83 L1022.0,634.56 L1023.0,635.33 L1024.0,636.14 L1025.0,636.99 L1026.0,637.87 L1027.0,638.80 L1028.0,639.76 L1029.0,640.76 L1030.0,641.80 L1031.0,642.86 L1032.0,643.95 L1033.0,645.06 L1034.0,646.17 L1035.0,647.28 L1036.0,648.38 L1037.0,649.45 L1038.0,650.47 L1039.0,651.43 L1040.0,652.31 L1041.0,653.10 L1042.0,653.77 L1043.0,654.30 L1044.0,654.70 L1045.0,654.93 L1046.0,655.01 L1047.0,654.92 L1048.0,654.67 L1049.0,654.27 L1050.0,653.72 L1051.0,653.04 L1052.0,652.25 L1053.0,651.36 L1054.0,650.39 L1055.0,649.36 L1056.0,648.29 L1057.0,647.19 L1058.0,646.08 L1059.0,644.97 L1060.0,643.86 L1061.0,642.78 L1062.0,641.72 L1063.0,640.68 L1064.0,639.68 L1065.0,638.72 L1066.0,637.80 L1067.0,636.92 L1068.0,636.07 L1069.0,635.27 L1070.0,634.50 L1071.0,633.78 L1072.0,633.08 L1073.0,632.43 L1074.0,631.81 L1075.0,631.22 L1076.0,630.67 L1077.0,630.14 L1078.0,629.64 L1079.0,629.17 L1080.0,628.72 L1081.0,628.30 L1082.0,627.90 L1083.0,627.51 L1084.0,627.15 L1085.0,626.81 L1086.0,626.49 L1087.0,626.18 L1088.0,625.89 L1089.0,625.61 L1090.0,625.35 L1091.0,625.10 L1092.0,624.86 L1093.0,624.63 L1094.0,624.41 L1095.0,624.21 L1096.0,624.01 L1097.0,623.82 L1098.0,623.64 L1099.0,623.47 L1100.0,623.31 L1101.0,623.15 L1102.0,623.00 L1103.0,622.86 L1104.0,622.72 L1105.0,622.59 L1106.0,622.47 L1107.0,622.35 L1108.0,622.23 L1109.0,622.12 L1110.0,622.02 L1111.0,621.91 L1112.0,621.82 L1113.0,621.72 L1114.0,621.63 L1115.0,621.54 L1116.0,621.46 L1117.0,621.38 L1118.0,621.30 L1119.0,621.23 L1120.0,621.16 L1121.0,621.09 L1122.0,621.02 L1123.0,620.95 L1124.0,620.89 L1125.0,620.83 L1126.0,620.77 L1127.0,620.72 L1128.0,620.66 L1129.0,620.61 L1130.0,620.56 L1131.0,620.51 L1132.0,620.46 L1133.0,620.42 L1134.0,620.37 L1135.0,620.33 L1136.0,620.29 L1137.0,620.25 L1138.0,620.21 L1139.0,620.17 L1140.0,620.13 L1141.0,620.09 L1142.0,620.06 L1143.0,620.03 L1144.0,619.99 L1145.0,619.96 L1146.0,619.93 L1147.0,619.90 L1148.0,619.87 L1149.0,619.84 L1150.0,619.81 L1151.0,619.79 L1152.0,619.76 L1153.0,619.74 L1154.0,619.71 L1155.0,619.69 L1156.0,619.66 L1157.0,619.64 L1158.0,619.62 L1159.0,619.59 L1160.0,619.57 L1161.0,619.55 L1162.0,619.53 L1163.0,619.51 L1164.0,619.49 L1165.0,619.47 L1166.0,619.46 L1167.0,619.44 L1168.0,619.42 L1169.0,619.40 L1170.0,619.39 L1171.0,619.37 L1172.0,619.35 L1173.0,619.34 L1174.0,619.32 L1175.0,619.31 L1176.0,619.29 L1177.0,619.28 L1178.0,619.27 L1179.0,619.25 L1180.0,619.24 L1181.0,619.23 L1182.0,619.21 L1183.0,619.20 L1184.0,619.19 L1185.0,619.18 L1186.0,619.17 L1187.0,619.15 L1188.0,619.14 L1189.0,619.13 L1190.0,619.12 L1191.0,619.11 L1192.0,619.10 L1193.0,619.09 L1194.0,619.08 L1195.0,619.07 L1196.0,619.06 L1197.0,619.05 L1198.0,619.04 L1199.0,619.04 L1200.0,619.03 L1201.0,619.02 L1202.0,619.01 L1203.0,619.00 L1204.0,618.99 L1205.0,618.99 L1206.0,618.98 L1207.0,618.97 L1208.0,618.96 L1209.0,618.96 L1210.0,618.95 L1211.0,618.94 L1212.0,618.93 L1213.0,618.93 L1214.0,618.92 L1215.0,618.91 L1216.0,618.91 L1217.0,618.90 L1218.0,618.90 L1219.0,618.89 L1220.0,618.88 L1221.0,618.88 L1222.0,618.87 L1223.0,618.87 L1224.0,618.86 L1225.0,618.86 L1226.0,618.85 L1227.0,618.85 L1228.0,618.84 L1229.0,618.84 L1230.0,618.83 L1231.0,618.83 L1232.0,618.82 L1233.0,618.82 L1234.0,618.81 L1235.0,618.81 L1236.0,618.80 L1237.0,618.80 L1238.0,618.79 L1239.0,618.79 L1240.0,618.78 L1241.0,618.78 L1242.0,618.78 L1243.0,618.77 L1244.0,618.77 L1245.0,618.76 L1246.0,618.76 L1247.0,618.76 L1248.0,618.75 L1249.0,618.75 L1250.0,618.75 L1251.0,618.74 L1252.0,618.74 L1253.0,618.74 L1254.0,618.73 L1255.0,618.73 L1256.0,618.73 L1257.0,618.72 L1258.0,618.72 L1259.0,618.72 L1260.0,618.71 L1261.0,618.71 L1262.0,618.71 L1263.0,618.70 L1264.0,618.70 L1265.0,618.70 L1266.0,618.70 L1267.0,618.69 L1268.0,618.69 L1269.0,618.69 L1270.0,618.69 L1271.0,618.68 L1272.0,618.68 L1273.0,618.68 L1274.0,618.68 L1275.0,618.67 L1276.0,618.67 L1277.0,618.67 L1278.0,618.67 L1279.0,618.66 L1280.0,618.66 L1281.0,618.66 L1282.0,618.66 L1283.0,618.65 L1284.0,618.65 L1285.0,618.65 L1286.0,618.65 L1287.0,618.65 L1288.0,618.64 L1289.0,618.64 L1290.0,618.64 L1291.0,618.64 L1292.0,618.64 L1293.0,618.64 L1294.0,618.63 L1295.0,618.63 L1296.0,618.63 L1297.0,618.63 L1298.0,618.63 L1299.0,618.63 L1300.0,618.62 L1301.0,618.62 L1302.0,618.62 L1303.0,618.62 L1304.0,618.62 L1305.0,618.62 L1306.0,618.61 L1307.0,618.61 L1308.0,618.61 L1309.0,618.61 L1310.0,618.61 L1311.0,618.61 L1312.0,618.61 L1313.0,618.60 L1314.0,618.60 L1315.0,618.60 L1316.0,618.60 L1317.0,618.60 L1318.0,618.60 L1319.0,618.60 L1320.0,618.59 L1321.0,618.59 L1322.0,618.59 L1323.0,618.59 L1324.0,618.59 L1325.0,618.59 L1326.0,618.59 L1327.0,618.59 L1328.0,618.59 L1329.0,618.58 L1330.0,618.58 L1331.0,618.58 L1332.0,618.58 L1333.0,618.58 L1334.0,618.58 L1335.0,618.58 L1336.0,618.58 L1337.0,618.58 L1338.0,618.57 L1339.0,618.57 L1340.0,618.57 L1341.0,618.57 L1342.0,618.57 L1343.0,618.57 L1344.0,618.57 L1345.0,618.57 L1346.0,618.57 L1347.0,618.57 L1348.0,618.57 L1349.0,618.56 L1350.0,618.56 L1351.0,618.56 L1352.0,618.56 L1353.0,618.56 L1354.0,618.56 L1355.0,618.56 L1356.0,618.56 L1357.0,618.56 L1358.0,618.56 L1359.0,618.56 L1360.0,618.56 L1361.0,618.56 L1362.0,618.55 L1363.0,618.55 L1364.0,618.55 L1365.0,618.55 L1366.0,618.55 L1367.0,618.55 L1368.0,618.55 L1369.0,618.55 L1370.0,618.55 L1371.0,618.55 L1372.0,618.55 L1373.0,618.55 L1374.0,618.55 L1375.0,618.55 L1376.0,618.55 L1377.0,618.55 L1378.0,618.54 L1379.0,618.54 L1380.0,618.54 L1381.0,618.54 L1382.0,618.54 L1383.0,618.54 L1384.0,618.54 L1385.0,618.54 L1386.0,618.54 L1387.0,618.54 L1388.0,618.54 L1389.0,618.54 L1390.0,618.54 L1391.0,618.54 L1392.0,618.54 L1393.0,618.54 L1394.0,618.54 L1395.0,618.54 L1396.0,618.54 L1397.0,618.54 L1398.0,618.53 L1399.0,618.53 L1400.0,618.53 L1401.0,618.53 L1402.0,618.53 L1403.0,618.53 L1404.0,618.53 L1405.0,618.53 L1406.0,618.53 L1407.0,618.53 L1408.0,618.53 L1409.0,618.53 L1410.0,618.53 L1411.0,618.53 L1412.0,618.53 L1413.0,618.53 L1414.0,618.53 L1415.0,618.53 L1416.0,618.53 L1417.0,618.53 L1418.0,618.53 L1419.0,618.53 L1420.0,618.53 L1421.0,618.53 L1422.0,618.53 L1423.0,618.53 L1424.0,618.53 L1425.0,618.52 L1426.0,618.52 L1427.0,618.52 L1428.0,618.52 L1429.0,618.52 L1430.0,618.52 L1431.0,618.52 L1432.0,618.52 L1433.0,618.52 L1434.0,618.52 L1435.0,618.52 L1436.0,618.52 L1437.0,618.52 L1438.0,618.52 L1439.0,618.52 L1440.0,618.52 L1441.0,618.52 L1442.0,618.52 L1443.0,618.52 L1444.0,618.52 L1445.0,618.52 L1446.0,618.52 L1447.0,618.52 L1448.0,618.52 L1449.0,618.52 L1450.0,618.52 L1451.0,618.52 L1452.0,618.52 L1453.0,618.52 L1454.0,618.52 L1455.0,618.52 L1456.0,618.52 L1457.0,618.52 L1458.0,618.52 L1459.0,618.52 L1460.0,618.52 L1461.0,618.52 L1462.0,618.52 L1463.0,618.52 L1464.0,618.52 L1465.0,618.51 L1466.0,618.51 L1467.0,618.51 L1468.0,618.51 L1469.0,618.51 L1470.0,618.51 L1471.0,618.51 L1472.0,618.51 L1473.0,618.51 L1474.0,618.51 L1475.0,618.51 L1476.0,618.51 L1477.0,618.51 L1478.0,618.51 L1479.0,618.51 L1480.0,618.51 L1481.0,618.51 L1482.0,618.51 L1483.0,618.51 L1484.0,618.51 L1485.0,618.51 L1486.0,618.51 L1487.0,618.51 L1488.0,618.51 L1489.0,618.51 L1490.0,618.51 L1491.0,618.51 L1492.0,618.51 L1493.0,618.51 L1494.0,618.51 L1495.0,618.51 L1496.0,618.51 L1497.0,618.51 L1498.0,618.51 L1499.0,618.51 L1500.0,618.51 L1501.0,618.51 L1502.0,618.51 L1503.0,618.51 L1504.0,618.51 L1505.0,618.51 L1506.0,618.51 L1507.0,618.51 L1508.0,618.51 L1509.0,618.51 L1510.0,618.51 L1511.0,618.51 L1512.0,618.51 L1513.0,618.51 L1514.0,618.51 L1515.0,618.51 L1516.0,618.51 L1517.0,618.51 L1518.0,618.51 L1519.0,618.51 L1520.0,618.51 L1521.0,618.51 L1522.0,618.51 L1523.0,618.51 L1524.0,618.51 L1525.0,618.51 L1526.0,618.51 L1527.0,618.51 L1528.0,618.51 L1529.0,618.51 L1530.0,618.51 L1531.0,618.51 L1532.0,618.51 L1533.0,618.51 L1534.0,618.51 L1535.0,618.51 L1536.0,618.51 L1537.0,618.51 L1538.0,618.51 L1539.0,618.51 L1540.0,618.51 L1541.0,618.51 L1542.0,618.51 L1543.0,618.51 L1544.0,618.51 L1545.0,618.51 L1546.0,618.51 L1547.0,618.51 L1548.0,618.51 L1549.0,618.51 L1550.0,618.51 L1551.0,618.51 L1552.0,618.51 L1553.0,618.50 L1554.0,618.50 L1555.0,618.50 L1556.0,618.50 L1557.0,618.50 L1558.0,618.50 L1559.0,618.50 L1560.0,618.50 L1561.0,618.50 L1562.0,618.50 L1563.0,618.50 L1564.0,618.50 L1565.0,618.50 L1566.0,618.50 L1567.0,618.50 L1568.0,618.50 L1569.0,618.50 L1570.0,618.50 L1571.0,618.50 L1572.0,618.50 L1573.0,618.50 L1574.0,618.50 L1575.0,618.50 L1576.0,618.50 L1577.0,618.50 L1578.0,618.50 L1579.0,618.50 L1580.0,618.50 L1581.0,618.50 L1582.0,618.50 L1583.0,618.50 L1584.0,618.50 L1585.0,618.50 L1586.0,618.50 L1587.0,618.50 L1588.0,618.50 L1589.0,618.50 L1590.0,618.50 L1591.0,618.50 L1592.0,618.50 L1593.0,618.50 L1594.0,618.50 L1595.0,618.50 L1596.0,618.50 L1597.0,618.50 L1598.0,618.50 L1599.0,618.50 L1600.0,618.50 L1601.0,618.50 L1602.0,618.50 L1603.0,618.50 L1604.0,618.50 L1605.0,618.50 L1606.0,618.50 L1607.0,618.50 L1608.0,618.50 L1609.0,618.50 L1610.0,618.50 L1611.0,618.50 L1612.0,618.50 L1613.0,618.50 L1614.0,618.50 L1615.0,618.50 L1616.0,618.50 L1617.0,618.50 L1618.0,618.50 L1619.0,618.50 L1620.0,618.50 L1621.0,618.50 L1622.0,618.50 L1623.0,618.50 L1624.0,618.50 L1625.0,618.50 L1626.0,618.50 L1627.0,618.50 L1628.0,618.50 L1629.0,618.50 L1630.0,618.50 L1631.0,618.50 L1632.0,618.50 L1633.0,618.50 L1634.0,618.50 L1635.0,618.50 L1636.0,618.50 L1637.0,618.50 L1638.0,618.50 L1639.0,618.50 L1640.0,618.50 L1641.0,618.50 L1642.0,618.50 L1643.0,618.50 L1644.0,618.50 L1645.0,618.50 L1646.0,618.50 L1647.0,618.50 L1648.0,618.50 L1649.0,618.50 L1650.0,618.50 L1651.0,618.50 L1652.0,618.50 L1653.0,618.50 L1654.0,618.50 L1655.0,618.50 L1656.0,618.50 L1657.0,618.50 L1658.0,618.50 L1659.0,618.50 L1660.0,618.50 L1661.0,618.50 L1662.0,618.50 L1663.0,618.50 L1664.0,618.50 L1665.0,618.50 L1666.0,618.50 L1667.0,618.50 L1668.0,618.50 L1669.0,618.50 L1670.0,618.50 L1671.0,618.50 L1672.0,618.50 L1673.0,618.50 L1674.0,618.50 L1675.0,618.50 L1676.0,618.50 L1677.0,618.50 L1678.0,618.50 L1679.0,618.50 L1680.0,618.50 L1681.0,618.50 L1682.0,618.50 L1683.0,618.50 L1684.0,618.50 L1685.0,618.50 L1686.0,618.50 L1687.0,618.50 L1688.0,618.50 L1689.0,618.50 L1690.0,618.50 L1691.0,618.50 L1692.0,618.50 L1693.0,618.50 L1694.0,618.50 L1695.0,618.50 L1696.0,618.50 L1697.0,618.50 L1698.0,618.50 L1699.0,618.50 L1700.0,618.50 L1701.0,618.50 L1702.0,618.50 L1703.0,618.50 L1704.0,618.50 L1705.0,618.50 L1706.0,618.50 L1707.0,618.50 L1708.0,618.50 L1709.0,618.50 L1710.0,618.50 L1711.0,618.50 L1712.0,618.50 L1713.0,618.50 L1714.0,618.50 L1715.0,618.50 L1716.0,618.50 L1717.0,618.50 L1718.0,618.50 L1719.0,618.50 L1720.0,618.50 L1721.0,618.50 L1722.0,618.50 L1723.0,618.50 L1724.0,618.50 L1725.0,618.50 L1726.0,618.50 L1727.0,618.50 L1728.0,618.50 L1729.0,618.50 L1730.0,618.50 L1731.0,618.50 L1732.0,618.50 L1733.0,618.50 L1734.0,618.50 L1735.0,618.50 L1736.0,618.50 L1737.0,618.50 L1738.0,618.50 L1739.0,618.50 L1740.0,618.50 L1741.0,618.50 L1742.0,618.50 L1743.0,618.50 L1744.0,618.50 L1745.0,618.50 L1746.0,618.50 L1747.0,618.50 L1748.0,618.50 L1749.0,618.50 L1750.0,618.50 L1751.0,618.50 L1752.0,618.50 L1753.0,618.50 L1754.0,618.50 L1755.0,618.50 L1756.0,618.50 L1757.0,618.50 L1758.0,618.50 L1759.0,618.50 L1760.0,618.50 L1761.0,618.50 L1762.0,618.50 L1763.0,618.50 L1764.0,618.50 L1765.0,618.50 L1766.0,618.50 L1767.0,618.50 L1768.0,618.50 L1769.0,618.50 L1770.0,618.50 L1771.0,618.50 L1772.0,618.50 L1773.0,618.50 L1774.0,618.50 L1775.0,618.50 L1776.0,618.50 L1777.0,618.50 L1778.0,618.50 L1779.0,618.50 L1780.0,618.50 L1781.0,618.50 L1782.0,618.50 L1783.0,618.50 L1784.0,618.50 L1785.0,618.50 L1786.0,618.50 L1787.0,618.50 L1788.0,618.50 L1789.0,618.50 L1790.0,618.50 L1791.0,618.50 L1792.0,618.50 L1793.0,618.50 L1794.0,618.50 L1795.0,618.50 L1796.0,618.50 L1797.0,618.50 L1798.0,618.50 L1799.0,618.50 L1800.0,618.50 L1801.0,618.50 L1802.0,618.50 L1803.0,618.50 L1804.0,618.50 L1805.0,618.50 L1806.0,618.50 L1807.0,618.50 L1808.0,618.50 L1809.0,618.50 L1810.0,618.50 L1811.0,618.50 L1812.0,618.50 L1813.0,618.50 L1814.0,618.50 L1815.0,618.50 L1816.0,618.50 L1817.0,618.50 L1818.0,618.50 L1819.0,618.50 L1820.0,618.50 L1821.0,618.50 L1822.0,618.50 L1823.0,618.50 L1824.0,618.50 L1825.0,618.50 L1826.0,618.50 L1827.0,618.50 L1828.0,618.50 L1829.0,618.50 L1830.0,618.50 L1831.0,618.50 L1832.0,618.50 L1833.0,618.50 L1834.0,618.50 L1835.0,618.50 L1836.0,618.50 L1837.0,618.50 L1838.0,618.50 L1839.0,618.50 L1840.0,618.50 L1841.0,618.50 L1842.0,618.50 L1843.0,618.50 L1844.0,618.50 L1845.0,618.50 L1846.0,618.50 L1847.0,618.50 L1848.0,618.50 L1849.0,618.50 L1850.0,618.50 L1851.0,618.50 L1852.0,618.50 L1853.0,618.50 L1854.0,618.50 L1855.0,618.50 L1856.0,618.50 L1857.0,618.50 L1858.0,618.50 L1859.0,618.50 L1860.0,618.50 L1861.0,618.50 L1862.0,618.50 L1863.0,618.50 L1864.0,618.50 L1865.0,618.50 L1866.0,618.50 L1867.0,618.50 L1868.0,618.50 L1869.0,618.50 L1870.0,618.50 L1871.0,618.50 L1872.0,618.50 L1873.0,618.50 L1874.0,618.50 L1875.0,618.50 L1876.0,618.50 L1877.0,618.50 L1878.0,618.50 L1879.0,618.50 L1880.0,618.50 L1881.0,618.50 L1882.0,618.50 L1883.0,618.50 L1884.0,618.50 L1885.0,618.50 L1886.0,618.50 L1887.0,618.50 L1888.0,618.50 L1889.0,618.50 L1890.0,618.50 L1891.0,618.50 L1892.0,618.50 L1893.0,618.50" fill="none" stroke="#ff7a1a" stroke-width="1.2"/>
<path d="M656.0,617.90 L657.0,617.89 L658.0,617.88 L659.0,617.87 L660.0,617.87 L661.0,617.86 L662.0,617.85 L663.0,617.84 L664.0,617.83 L665.0,617.82 L666.0,617.81 L667.0,617.80 L668.0,617.80 L669.0,617.79 L670.0,617.78 L671.0,617.77 L672.0,617.76 L673.0,617.75 L674.0,617.74 L675.0,617.73 L676.0,617.72 L677.0,617.71 L678.0,617.69 L679.0,617.68 L680.0,617.67 L681.0,617.66 L682.0,617.65 L683.0,617.64 L684.0,617.63 L685.0,617.62 L686.0,617.60 L687.0,617.59 L688.0,617.58 L689.0,617.57 L690.0,617.55 L691.0,617.54 L692.0,617.53 L693.0,617.51 L694.0,617.50 L695.0,617.49 L696.0,617.47 L697.0,617.46 L698.0,617.44 L699.0,617.43 L700.0,617.41 L701.0,617.40 L702.0,617.38 L703.0,617.37 L704.0,617.35 L705.0,617.34 L706.0,617.32 L707.0,617.30 L708.0,617.29 L709.0,617.27 L710.0,617.25 L711.0,617.24 L712.0,617.22 L713.0,617.20 L714.0,617.18 L715.0,617.16 L716.0,617.15 L717.0,617.13 L718.0,617.11 L719.0,617.09 L720.0,617.07 L721.0,617.05 L722.0,617.03 L723.0,617.01 L724.0,616.98 L725.0,616.96 L726.0,616.94 L727.0,616.92 L728.0,616.90 L729.0,616.87 L730.0,616.85 L731.0,616.83 L732.0,616.80 L733.0,616.78 L734.0,616.75 L735.0,616.73 L736.0,616.70 L737.0,616.68 L738.0,616.65 L739.0,616.62 L740.0,616.59 L741.0,616.57 L742.0,616.54 L743.0,616.51 L744.0,616.48 L745.0,616.45 L746.0,616.42 L747.0,616.39 L748.0,616.36 L749.0,616.33 L750.0,616.29 L751.0,616.26 L752.0,616.23 L753.0,616.19 L754.0,616.16 L755.0,616.13 L756.0,616.09 L757.0,616.05 L758.0,616.02 L759.0,615.98 L760.0,615.94 L761.0,615.90 L762.0,615.86 L763.0,615.82 L764.0,615.78 L765.0,615.74 L766.0,615.69 L767.0,615.65 L768.0,615.61 L769.0,615.56 L770.0,615.52 L771.0,615.47 L772.0,615.42 L773.0,615.37 L774.0,615.32 L775.0,615.27 L776.0,615.22 L777.0,615.17 L778.0,615.12 L779.0,615.06 L780.0,615.01 L781.0,614.95 L782.0,614.89 L783.0,614.83 L784.0,614.78 L785.0,614.71 L786.0,614.65 L787.0,614.59 L788.0,614.53 L789.0,614.46 L790.0,614.39 L791.0,614.32 L792.0,614.26 L793.0,614.18 L794.0,614.11 L795.0,614.04 L796.0,613.96 L797.0,613.89 L798.0,613.81 L799.0,613.73 L800.0,613.65 L801.0,613.56 L802.0,613.48 L803.0,613.39 L804.0,613.30 L805.0,613.21 L806.0,613.12 L807.0,613.03 L808.0,612.93 L809.0,612.83 L810.0,612.73 L811.0,612.63 L812.0,612.52 L813.0,612.42 L814.0,612.31 L815.0,612.20 L816.0,612.08 L817.0,611.96 L818.0,611.84 L819.0,611.72 L820.0,611.60 L821.0,611.47 L822.0,611.34 L823.0,611.20 L824.0,611.07 L825.0,610.93 L826.0,610.78 L827.0,610.63 L828.0,610.48 L829.0,610.33 L830.0,610.17 L831.0,610.00 L832.0,609.84 L833.0,609.67 L834.0,609.49 L835.0,609.31 L836.0,609.13 L837.0,608.94 L838.0,608.75 L839.0,608.55 L840.0,608.34 L841.0,608.13 L842.0,607.92 L843.0,607.70 L844.0,607.48 L845.0,607.24 L846.0,607.01 L847.0,606.76 L848.0,606.51 L849.0,606.26 L850.0,605.99 L851.0,605.72 L852.0,605.45 L853.0,605.16 L854.0,604.87 L855.0,604.57 L856.0,604.26 L857.0,603.94 L858.0,603.61 L859.0,603.27 L860.0,602.93 L861.0,602.57 L862.0,602.21 L863.0,601.83 L864.0,601.44 L865.0,601.04 L866.0,600.63 L867.0,600.21 L868.0,599.78 L869.0,599.33 L870.0,598.88 L871.0,598.42 L872.0,597.95 L873.0,597.47 L874.0,596.97 L875.0,596.46 L876.0,595.93 L877.0,595.39 L878.0,594.83 L879.0,594.25 L880.0,593.66 L881.0,593.06 L882.0,592.43 L883.0,591.79 L884.0,591.13 L885.0,590.45 L886.0,589.75 L887.0,589.04 L888.0,588.30 L889.0,587.54 L890.0,586.76 L891.0,585.96 L892.0,585.14 L893.0,584.30 L894.0,583.43 L895.0,582.55 L896.0,581.64 L897.0,580.71 L898.0,579.75 L899.0,578.78 L900.0,577.78 L901.0,576.76 L902.0,575.72 L903.0,574.66 L904.0,573.58 L905.0,572.48 L906.0,571.35 L907.0,570.20 L908.0,569.03 L909.0,567.85 L910.0,566.66 L911.0,565.45 L912.0,564.24 L913.0,563.03 L914.0,561.82 L915.0,560.61 L916.0,559.41 L917.0,558.22 L918.0,557.05 L919.0,555.90 L920.0,554.78 L921.0,553.70 L922.0,552.65 L923.0,551.65 L924.0,550.71 L925.0,549.82 L926.0,549.00 L927.0,548.26 L928.0,547.59 L929.0,547.00 L930.0,546.51 L931.0,546.11 L932.0,545.80 L933.0,545.60 L934.0,545.49 L935.0,545.49 L936.0,545.59 L937.0,545.79 L938.0,546.08 L939.0,546.47 L940.0,546.95 L941.0,547.51 L942.0,548.16 L943.0,548.88 L944.0,549.67 L945.0,550.52 L946.0,551.44 L947.0,552.41 L948.0,553.42 L949.0,554.48 L950.0,555.57 L951.0,556.68 L952.0,557.83 L953.0,558.99 L954.0,560.16 L955.0,561.34 L956.0,562.53 L957.0,563.72 L958.0,564.91 L959.0,566.09 L960.0,567.28 L961.0,568.48 L962.0,569.67 L963.0,570.84 L964.0,572.00 L965.0,573.14 L966.0,574.25 L967.0,575.35 L968.0,576.43 L969.0,577.48 L970.0,578.51 L971.0,579.52 L972.0,580.50 L973.0,581.46 L974.0,582.39 L975.0,583.31 L976.0,584.20 L977.0,585.06 L978.0,585.91 L979.0,586.73 L980.0,587.53 L981.0,588.30 L982.0,589.03 L983.0,589.75 L984.0,590.45 L985.0,591.13 L986.0,591.79 L987.0,592.43 L988.0,593.06 L989.0,593.66 L990.0,594.25 L991.0,594.83 L992.0,595.39 L993.0,595.93 L994.0,596.46 L995.0,596.97 L996.0,597.47 L997.0,597.95 L998.0,598.42 L999.0,598.88 L1000.0,599.33 L1001.0,599.76 L1002.0,600.18 L1003.0,600.59 L1004.0,600.99 L1005.0,601.38 L1006.0,601.75 L1007.0,602.12 L1008.0,602.48 L1009.0,602.83 L1010.0,603.16 L1011.0,603.49 L1012.0,603.81 L1013.0,604.13 L1014.0,604.43 L1015.0,604.73 L1016.0,605.01 L1017.0,605.29 L1018.0,605.57 L1019.0,605.83 L1020.0,606.09 L1021.0,606.35 L1022.0,606.59 L1023.0,606.83 L1024.0,607.07 L1025.0,607.29 L1026.0,607.52 L1027.0,607.73 L1028.0,607.95 L1029.0,608.15 L1030.0,608.35 L1031.0,608.55 L1032.0,608.74 L1033.0,608.93 L1034.0,609.11 L1035.0,609.29 L1036.0,609.47 L1037.0,609.64 L1038.0,609.80 L1039.0,609.97 L1040.0,610.12 L1041.0,610.28 L1042.0,610.43 L1043.0,610.58 L1044.0,610.72 L1045.0,610.87 L1046.0,611.00 L1047.0,611.14 L1048.0,611.27 L1049.0,611.40 L1050.0,611.53 L1051.0,611.65 L1052.0,611.77 L1053.0,611.89 L1054.0,612.01 L1055.0,612.12 L1056.0,612.23 L1057.0,612.34 L1058.0,612.45 L1059.0,612.55 L1060.0,612.65 L1061.0,612.75 L1062.0,612.85 L1063.0,612.94 L1064.0,613.04 L1065.0,613.13 L1066.0,613.22 L1067.0,613.31 L1068.0,613.39 L1069.0,613.48 L1070.0,613.56 L1071.0,613.64 L1072.0,613.72 L1073.0,613.80 L1074.0,613.88 L1075.0,613.95 L1076.0,614.03 L1077.0,614.10 L1078.0,614.17 L1079.0,614.24 L1080.0,614.31 L1081.0,614.38 L1082.0,614.44 L1083.0,614.51 L1084.0,614.57 L1085.0,614.63 L1086.0,614.69 L1087.0,614.75 L1088.0,614.81 L1089.0,614.87 L1090.0,614.92 L1091.0,614.98 L1092.0,615.03 L1093.0,615.09 L1094.0,615.14 L1095.0,615.19 L1096.0,615.24 L1097.0,615.29 L1098.0,615.34 L1099.0,615.39 L1100.0,615.44 L1101.0,615.48 L1102.0,615.53 L1103.0,615.57 L1104.0,615.62 L1105.0,615.66 L1106.0,615.70 L1107.0,615.74 L1108.0,615.78 L1109.0,615.82 L1110.0,615.86 L1111.0,615.90 L1112.0,615.94 L1113.0,615.98 L1114.0,616.02 L1115.0,616.05 L1116.0,616.09 L1117.0,616.12 L1118.0,616.16 L1119.0,616.19 L1120.0,616.23 L1121.0,616.26 L1122.0,616.29 L1123.0,616.32 L1124.0,616.35 L1125.0,616.38 L1126.0,616.41 L1127.0,616.44 L1128.0,616.47 L1129.0,616.50 L1130.0,616.53 L1131.0,616.56 L1132.0,616.59 L1133.0,616.61 L1134.0,616.64 L1135.0,616.67 L1136.0,616.69 L1137.0,616.72 L1138.0,616.74 L1139.0,616.77 L1140.0,616.79 L1141.0,616.81 L1142.0,616.84 L1143.0,616.86 L1144.0,616.88 L1145.0,616.91 L1146.0,616.93 L1147.0,616.95 L1148.0,616.97 L1149.0,616.99 L1150.0,617.01 L1151.0,617.03 L1152.0,617.05 L1153.0,617.07 L1154.0,617.09 L1155.0,617.11 L1156.0,617.13 L1157.0,617.15 L1158.0,617.17 L1159.0,617.18 L1160.0,617.20 L1161.0,617.22 L1162.0,617.24 L1163.0,617.25 L1164.0,617.27 L1165.0,617.29 L1166.0,617.30 L1167.0,617.32 L1168.0,617.34 L1169.0,617.35 L1170.0,617.37 L1171.0,617.38 L1172.0,617.40 L1173.0,617.41 L1174.0,617.43 L1175.0,617.44 L1176.0,617.45 L1177.0,617.47 L1178.0,617.48 L1179.0,617.49 L1180.0,617.51 L1181.0,617.52 L1182.0,617.53 L1183.0,617.55 L1184.0,617.56 L1185.0,617.57 L1186.0,617.58 L1187.0,617.60 L1188.0,617.61 L1189.0,617.62 L1190.0,617.63 L1191.0,617.64 L1192.0,617.65 L1193.0,617.66 L1194.0,617.68 L1195.0,617.69 L1196.0,617.70 L1197.0,617.71 L1198.0,617.72 L1199.0,617.73 L1200.0,617.74 L1201.0,617.75 L1202.0,617.76 L1203.0,617.77 L1204.0,617.78 L1205.0,617.79 L1206.0,617.80 L1207.0,617.80 L1208.0,617.81 L1209.0,617.82 L1210.0,617.83 L1211.0,617.84 L1212.0,617.85 L1213.0,617.86 L1214.0,617.86 L1215.0,617.87 L1216.0,617.88 L1217.0,617.89 L1218.0,617.90 L1219.0,617.90 L1220.0,617.91 L1221.0,617.92 L1222.0,617.93 L1223.0,617.93 L1224.0,617.94 L1225.0,617.95 L1226.0,617.96 L1227.0,617.96 L1228.0,617.97 L1229.0,617.98 L1230.0,617.98 L1231.0,617.99 L1232.0,618.00 L1233.0,618.00 L1234.0,618.01 L1235.0,618.01 L1236.0,618.02 L1237.0,618.03 L1238.0,618.03 L1239.0,618.04 L1240.0,618.04 L1241.0,618.05 L1242.0,618.06 L1243.0,618.06 L1244.0,618.07 L1245.0,618.07 L1246.0,618.08 L1247.0,618.08 L1248.0,618.09 L1249.0,618.09 L1250.0,618.10 L1251.0,618.10 L1252.0,618.11 L1253.0,618.11 L1254.0,618.12 L1255.0,618.12 L1256.0,618.13 L1257.0,618.13 L1258.0,618.14 L1259.0,618.14 L1260.0,618.15 L1261.0,618.15 L1262.0,618.16 L1263.0,618.16 L1264.0,618.17 L1265.0,618.17 L1266.0,618.17 L1267.0,618.18 L1268.0,618.18 L1269.0,618.19 L1270.0,618.19 L1271.0,618.19 L1272.0,618.20 L1273.0,618.20 L1274.0,618.21 L1275.0,618.21 L1276.0,618.21 L1277.0,618.22 L1278.0,618.22 L1279.0,618.22 L1280.0,618.23 L1281.0,618.23 L1282.0,618.23 L1283.0,618.24 L1284.0,618.24 L1285.0,618.24 L1286.0,618.25 L1287.0,618.25 L1288.0,618.25 L1289.0,618.26 L1290.0,618.26 L1291.0,618.26 L1292.0,618.26 L1293.0,618.27 L1294.0,618.27 L1295.0,618.27 L1296.0,618.28 L1297.0,618.28 L1298.0,618.28 L1299.0,618.28 L1300.0,618.29 L1301.0,618.29 L1302.0,618.29 L1303.0,618.29 L1304.0,618.30 L1305.0,618.30 L1306.0,618.30 L1307.0,618.30 L1308.0,618.31 L1309.0,618.31 L1310.0,618.31 L1311.0,618.31 L1312.0,618.32 L1313.0,618.32 L1314.0,618.32 L1315.0,618.32 L1316.0,618.33 L1317.0,618.33 L1318.0,618.33 L1319.0,618.33 L1320.0,618.33 L1321.0,618.34 L1322.0,618.34 L1323.0,618.34 L1324.0,618.34 L1325.0,618.34 L1326.0,618.35 L1327.0,618.35 L1328.0,618.35 L1329.0,618.35 L1330.0,618.35 L1331.0,618.36 L1332.0,618.36 L1333.0,618.36 L1334.0,618.36 L1335.0,618.36 L1336.0,618.36 L1337.0,618.37 L1338.0,618.37 L1339.0,618.37 L1340.0,618.37 L1341.0,618.37 L1342.0,618.37 L1343.0,618.38 L1344.0,618.38 L1345.0,618.38 L1346.0,618.38 L1347.0,618.38 L1348.0,618.38 L1349.0,618.39 L1350.0,618.39 L1351.0,618.39 L1352.0,618.39 L1353.0,618.39 L1354.0,618.39 L1355.0,618.39 L1356.0,618.39 L1357.0,618.40 L1358.0,618.40 L1359.0,618.40 L1360.0,618.40 L1361.0,618.40 L1362.0,618.40 L1363.0,618.40 L1364.0,618.40 L1365.0,618.41 L1366.0,618.41 L1367.0,618.41 L1368.0,618.41 L1369.0,618.41 L1370.0,618.41 L1371.0,618.41 L1372.0,618.41 L1373.0,618.41 L1374.0,618.42 L1375.0,618.42 L1376.0,618.42 L1377.0,618.42 L1378.0,618.42 L1379.0,618.42 L1380.0,618.42 L1381.0,618.42 L1382.0,618.42 L1383.0,618.42 L1384.0,618.43 L1385.0,618.43 L1386.0,618.43 L1387.0,618.43 L1388.0,618.43 L1389.0,618.43 L1390.0,618.43 L1391.0,618.43 L1392.0,618.43 L1393.0,618.43 L1394.0,618.43 L1395.0,618.43 L1396.0,618.44 L1397.0,618.44 L1398.0,618.44 L1399.0,618.44 L1400.0,618.44 L1401.0,618.44 L1402.0,618.44 L1403.0,618.44 L1404.0,618.44 L1405.0,618.44 L1406.0,618.44 L1407.0,618.44 L1408.0,618.44 L1409.0,618.45 L1410.0,618.45 L1411.0,618.45 L1412.0,618.45 L1413.0,618.45 L1414.0,618.45 L1415.0,618.45 L1416.0,618.45 L1417.0,618.45 L1418.0,618.45 L1419.0,618.45 L1420.0,618.45 L1421.0,618.45 L1422.0,618.45 L1423.0,618.45 L1424.0,618.45 L1425.0,618.45 L1426.0,618.46 L1427.0,618.46 L1428.0,618.46 L1429.0,618.46 L1430.0,618.46 L1431.0,618.46 L1432.0,618.46 L1433.0,618.46 L1434.0,618.46 L1435.0,618.46 L1436.0,618.46 L1437.0,618.46 L1438.0,618.46 L1439.0,618.46 L1440.0,618.46 L1441.0,618.46 L1442.0,618.46 L1443.0,618.46 L1444.0,618.46 L1445.0,618.46 L1446.0,618.47 L1447.0,618.47 L1448.0,618.47 L1449.0,618.47 L1450.0,618.47 L1451.0,618.47 L1452.0,618.47 L1453.0,618.47 L1454.0,618.47 L1455.0,618.47 L1456.0,618.47 L1457.0,618.47 L1458.0,618.47 L1459.0,618.47 L1460.0,618.47 L1461.0,618.47 L1462.0,618.47 L1463.0,618.47 L1464.0,618.47 L1465.0,618.47 L1466.0,618.47 L1467.0,618.47 L1468.0,618.47 L1469.0,618.47 L1470.0,618.47 L1471.0,618.47 L1472.0,618.47 L1473.0,618.48 L1474.0,618.48 L1475.0,618.48 L1476.0,618.48 L1477.0,618.48 L1478.0,618.48 L1479.0,618.48 L1480.0,618.48 L1481.0,618.48 L1482.0,618.48 L1483.0,618.48 L1484.0,618.48 L1485.0,618.48 L1486.0,618.48 L1487.0,618.48 L1488.0,618.48 L1489.0,618.48 L1490.0,618.48 L1491.0,618.48 L1492.0,618.48 L1493.0,618.48 L1494.0,618.48 L1495.0,618.48 L1496.0,618.48 L1497.0,618.48 L1498.0,618.48 L1499.0,618.48 L1500.0,618.48 L1501.0,618.48 L1502.0,618.48 L1503.0,618.48 L1504.0,618.48 L1505.0,618.48 L1506.0,618.48 L1507.0,618.48 L1508.0,618.48 L1509.0,618.48 L1510.0,618.48 L1511.0,618.48 L1512.0,618.48 L1513.0,618.48 L1514.0,618.49 L1515.0,618.49 L1516.0,618.49 L1517.0,618.49 L1518.0,618.49 L1519.0,618.49 L1520.0,618.49 L1521.0,618.49 L1522.0,618.49 L1523.0,618.49 L1524.0,618.49 L1525.0,618.49 L1526.0,618.49 L1527.0,618.49 L1528.0,618.49 L1529.0,618.49 L1530.0,618.49 L1531.0,618.49 L1532.0,618.49 L1533.0,618.49 L1534.0,618.49 L1535.0,618.49 L1536.0,618.49 L1537.0,618.49 L1538.0,618.49 L1539.0,618.49 L1540.0,618.49 L1541.0,618.49 L1542.0,618.49 L1543.0,618.49 L1544.0,618.49 L1545.0,618.49 L1546.0,618.49 L1547.0,618.49 L1548.0,618.49 L1549.0,618.49 L1550.0,618.49 L1551.0,618.49 L1552.0,618.49 L1553.0,618.49 L1554.0,618.49 L1555.0,618.49 L1556.0,618.49 L1557.0,618.49 L1558.0,618.49 L1559.0,618.49 L1560.0,618.49 L1561.0,618.49 L1562.0,618.49 L1563.0,618.49 L1564.0,618.49 L1565.0,618.49 L1566.0,618.49 L1567.0,618.49 L1568.0,618.49 L1569.0,618.49 L1570.0,618.49 L1571.0,618.49 L1572.0,618.49 L1573.0,618.49 L1574.0,618.49 L1575.0,618.49 L1576.0,618.49 L1577.0,618.49 L1578.0,618.49 L1579.0,618.49 L1580.0,618.49 L1581.0,618.49 L1582.0,618.49 L1583.0,618.49 L1584.0,618.49 L1585.0,618.49 L1586.0,618.49 L1587.0,618.49 L1588.0,618.49 L1589.0,618.49 L1590.0,618.49 L1591.0,618.49 L1592.0,618.49 L1593.0,618.49 L1594.0,618.49 L1595.0,618.49 L1596.0,618.49 L1597.0,618.49 L1598.0,618.49 L1599.0,618.49 L1600.0,618.49 L1601.0,618.50 L1602.0,618.50 L1603.0,618.50 L1604.0,618.50 L1605.0,618.50 L1606.0,618.50 L1607.0,618.50 L1608.0,618.50 L1609.0,618.50 L1610.0,618.50 L1611.0,618.50 L1612.0,618.50 L1613.0,618.50 L1614.0,618.50 L1615.0,618.50 L1616.0,618.50 L1617.0,618.50 L1618.0,618.50 L1619.0,618.50 L1620.0,618.50 L1621.0,618.50 L1622.0,618.50 L1623.0,618.50 L1624.0,618.50 L1625.0,618.50 L1626.0,618.50 L1627.0,618.50 L1628.0,618.50 L1629.0,618.50 L1630.0,618.50 L1631.0,618.50 L1632.0,618.50 L1633.0,618.50 L1634.0,618.50 L1635.0,618.50 L1636.0,618.50 L1637.0,618.50 L1638.0,618.50 L1639.0,618.50 L1640.0,618.50 L1641.0,618.50 L1642.0,618.50 L1643.0,618.50 L1644.0,618.50 L1645.0,618.50 L1646.0,618.50 L1647.0,618.50 L1648.0,618.50 L1649.0,618.50 L1650.0,618.50 L1651.0,618.50 L1652.0,618.50 L1653.0,618.50 L1654.0,618.50 L1655.0,618.50 L1656.0,618.50 L1657.0,618.50 L1658.0,618.50 L1659.0,618.50 L1660.0,618.50 L1661.0,618.50 L1662.0,618.50 L1663.0,618.50 L1664.0,618.50 L1665.0,618.50 L1666.0,618.50 L1667.0,618.50 L1668.0,618.50 L1669.0,618.50 L1670.0,618.50 L1671.0,618.50 L1672.0,618.50 L1673.0,618.50 L1674.0,618.50 L1675.0,618.50 L1676.0,618.50 L1677.0,618.50 L1678.0,618.50 L1679.0,618.50 L1680.0,618.50 L1681.0,618.50 L1682.0,618.50 L1683.0,618.50 L1684.0,618.50 L1685.0,618.50 L1686.0,618.50 L1687.0,618.50 L1688.0,618.50 L1689.0,618.50 L1690.0,618.50 L1691.0,618.50 L1692.0,618.50 L1693.0,618.50 L1694.0,618.50 L1695.0,618.50 L1696.0,618.50 L1697.0,618.50 L1698.0,618.50 L1699.0,618.50 L1700.0,618.50 L1701.0,618.50 L1702.0,618.50 L1703.0,618.50 L1704.0,618.50 L1705.0,618.50 L1706.0,618.50 L1707.0,618.50 L1708.0,618.50 L1709.0,618.50 L1710.0,618.50 L1711.0,618.50 L1712.0,618.50 L1713.0,618.50 L1714.0,618.50 L1715.0,618.50 L1716.0,618.50 L1717.0,618.50 L1718.0,618.50 L1719.0,618.50 L1720.0,618.50 L1721.0,618.50 L1722.0,618.50 L1723.0,618.50 L1724.0,618.50 L1725.0,618.50 L1726.0,618.50 L1727.0,618.50 L1728.0,618.50 L1729.0,618.50 L1730.0,618.50 L1731.0,618.50 L1732.0,618.50 L1733.0,618.50 L1734.0,618.50 L1735.0,618.50 L1736.0,618.50 L1737.0,618.50 L1738.0,618.50 L1739.0,618.50 L1740.0,618.50 L1741.0,618.50 L1742.0,618.50 L1743.0,618.50 L1744.0,618.50 L1745.0,618.50 L1746.0,618.50 L1747.0,618.50 L1748.0,618.50 L1749.0,618.50 L1750.0,618.50 L1751.0,618.50 L1752.0,618.50 L1753.0,618.50 L1754.0,618.50 L1755.0,618.50 L1756.0,618.50 L1757.0,618.50 L1758.0,618.50 L1759.0,618.50 L1760.0,618.50 L1761.0,618.50 L1762.0,618.50 L1763.0,618.50 L1764.0,618.50 L1765.0,618.50 L1766.0,618.50 L1767.0,618.50 L1768.0,618.50 L1769.0,618.50 L1770.0,618.50 L1771.0,618.50 L1772.0,618.50 L1773.0,618.50 L1774.0,618.50 L1775.0,618.50 L1776.0,618.50 L1777.0,618.50 L1778.0,618.50 L1779.0,618.50 L1780.0,618.50 L1781.0,618.50 L1782.0,618.50 L1783.0,618.50 L1784.0,618.50 L1785.0,618.50 L1786.0,618.50 L1787.0,618.50 L1788.0,618.50 L1789.0,618.50 L1790.0,618.50 L1791.0,618.50 L1792.0,618.50 L1793.0,618.50 L1794.0,618.50 L1795.0,618.50 L1796.0,618.50 L1797.0,618.50 L1798.0,618.50 L1799.0,618.50 L1800.0,618.50 L1801.0,618.50 L1802.0,618.50 L1803.0,618.50 L1804.0,618.50 L1805.0,618.50 L1806.0,618.50 L1807.0,618.50 L1808.0,618.50 L1809.0,618.50 L1810.0,618.50 L1811.0,618.50 L1812.0,618.50 L1813.0,618.50 L1814.0,618.50 L1815.0,618.50 L1816.0,618.50 L1817.0,618.50 L1818.0,618.50 L1819.0,618.50 L1820.0,618.50 L1821.0,618.50 L1822.0,618.50 L1823.0,618.50 L1824.0,618.50 L1825.0,618.50 L1826.0,618.50 L1827.0,618.50 L1828.0,618.50 L1829.0,618.50 L1830.0,618.50 L1831.0,618.50 L1832.0,618.50 L1833.0,618.50 L1834.0,618.50 L1835.0,618.50 L1836.0,618.50 L1837.0,618.50 L1838.0,618.50 L1839.0,618.50 L1840.0,618.50 L1841.0,618.50 L1842.0,618.50 L1843.0,618.50 L1844.0,618.50 L1845.0,618.50 L1846.0,618.50 L1847.0,618.50 L1848.0,618.50 L1849.0,618.50 L1850.0,618.50 L1851.0,618.50 L1852.0,618.50 L1853.0,618.50 L1854.0,618.50 L1855.0,618.50 L1856.0,618.50 L1857.0,618.50 L1858.0,618.50 L1859.0,618.50 L1860.0,618.50 L1861.0,618.50 L1862.0,618.50 L1863.0,618.50 L1864.0,618.50 L1865.0,618.50 L1866.0,618.50 L1867.0,618.50 L1868.0,618.50 L1869.0,618.50 L1870.0,618.50 L1871.0,618.50 L1872.0,618.50 L1873.0,618.50 L1874.0,618.50 L1875.0,618.50 L1876.0,618.50 L1877.0,618.50 L1878.0,618.50 L1879.0,618.50 L1880.0,618.50 L1881.0,618.50 L1882.0,618.50 L1883.0,618.50 L1884.0,618.50 L1885.0,618.50 L1886.0,618.50 L1887.0,618.50 L1888.0,618.50 L1889.0,618.50 L1890.0,618.50 L1891.0,618.50 L1892.0,618.50 L1893.0,618.50" fill="none" stroke="#ff7a1a" stroke-width="1.2"/>
<path d="M656,618.50 L656.0,617.92 L657.0,617.91 L658.0,617.90 L659.0,617.89 L660.0,617.89 L661.0,617.88 L662.0,617.87 L663.0,617.86 L664.0,617.85 L665.0,617.84 L666.0,617.84 L667.0,617.83 L668.0,617.82 L669.0,617.81 L670.0,617.80 L671.0,617.79 L672.0,617.78 L673.0,617.77 L674.0,617.76 L675.0,617.75 L676.0,617.74 L677.0,617.73 L678.0,617.72 L679.0,617.71 L680.0,617.70 L681.0,617.69 L682.0,617.68 L683.0,617.67 L684.0,617.65 L685.0,617.64 L686.0,617.63 L687.0,617.62 L688.0,617.61 L689.0,617.59 L690.0,617.58 L691.0,617.57 L692.0,617.56 L693.0,617.54 L694.0,617.53 L695.0,617.52 L696.0,617.50 L697.0,617.49 L698.0,617.48 L699.0,617.46 L700.0,617.45 L701.0,617.43 L702.0,617.42 L703.0,617.40 L704.0,617.39 L705.0,617.37 L706.0,617.36 L707.0,617.34 L708.0,617.33 L709.0,617.31 L710.0,617.29 L711.0,617.28 L712.0,617.26 L713.0,617.24 L714.0,617.22 L715.0,617.21 L716.0,617.19 L717.0,617.17 L718.0,617.15 L719.0,617.13 L720.0,617.11 L721.0,617.09 L722.0,617.07 L723.0,617.05 L724.0,617.03 L725.0,617.01 L726.0,616.99 L727.0,616.97 L728.0,616.94 L729.0,616.92 L730.0,616.90 L731.0,616.88 L732.0,616.85 L733.0,616.83 L734.0,616.80 L735.0,616.78 L736.0,616.76 L737.0,616.73 L738.0,616.70 L739.0,616.68 L740.0,616.65 L741.0,616.62 L742.0,616.60 L743.0,616.57 L744.0,616.54 L745.0,616.51 L746.0,616.48 L747.0,616.45 L748.0,616.42 L749.0,616.39 L750.0,616.36 L751.0,616.33 L752.0,616.29 L753.0,616.26 L754.0,616.23 L755.0,616.19 L756.0,616.16 L757.0,616.12 L758.0,616.09 L759.0,616.05 L760.0,616.01 L761.0,615.98 L762.0,615.94 L763.0,615.90 L764.0,615.86 L765.0,615.82 L766.0,615.77 L767.0,615.73 L768.0,615.69 L769.0,615.64 L770.0,615.60 L771.0,615.55 L772.0,615.51 L773.0,615.46 L774.0,615.41 L775.0,615.36 L776.0,615.31 L777.0,615.26 L778.0,615.21 L779.0,615.16 L780.0,615.10 L781.0,615.05 L782.0,614.99 L783.0,614.94 L784.0,614.88 L785.0,614.82 L786.0,614.76 L787.0,614.70 L788.0,614.63 L789.0,614.57 L790.0,614.50 L791.0,614.44 L792.0,614.37 L793.0,614.30 L794.0,614.23 L795.0,614.16 L796.0,614.08 L797.0,614.01 L798.0,613.93 L799.0,613.85 L800.0,613.77 L801.0,613.69 L802.0,613.61 L803.0,613.52 L804.0,613.44 L805.0,613.35 L806.0,613.26 L807.0,613.17 L808.0,613.07 L809.0,612.98 L810.0,612.88 L811.0,612.78 L812.0,612.67 L813.0,612.57 L814.0,612.46 L815.0,612.35 L816.0,612.24 L817.0,612.12 L818.0,612.01 L819.0,611.89 L820.0,611.76 L821.0,611.64 L822.0,611.51 L823.0,611.38 L824.0,611.25 L825.0,611.11 L826.0,610.96 L827.0,610.82 L828.0,610.67 L829.0,610.52 L830.0,610.36 L831.0,610.20 L832.0,610.04 L833.0,609.87 L834.0,609.70 L835.0,609.52 L836.0,609.34 L837.0,609.15 L838.0,608.96 L839.0,608.77 L840.0,608.57 L841.0,608.36 L842.0,608.15 L843.0,607.94 L844.0,607.71 L845.0,607.49 L846.0,607.25 L847.0,607.01 L848.0,606.77 L849.0,606.51 L850.0,606.26 L851.0,605.99 L852.0,605.71 L853.0,605.43 L854.0,605.14 L855.0,604.85 L856.0,604.54 L857.0,604.23 L858.0,603.90 L859.0,603.57 L860.0,603.23 L861.0,602.88 L862.0,602.52 L863.0,602.15 L864.0,601.77 L865.0,601.37 L866.0,600.97 L867.0,600.55 L868.0,600.12 L869.0,599.68 L870.0,599.24 L871.0,598.78 L872.0,598.32 L873.0,597.84 L874.0,597.35 L875.0,596.84 L876.0,596.32 L877.0,595.78 L878.0,595.23 L879.0,594.66 L880.0,594.08 L881.0,593.48 L882.0,592.86 L883.0,592.23 L884.0,591.57 L885.0,590.90 L886.0,590.21 L887.0,589.50 L888.0,588.77 L889.0,588.02 L890.0,587.25 L891.0,586.46 L892.0,585.65 L893.0,584.81 L894.0,583.96 L895.0,583.08 L896.0,582.18 L897.0,581.26 L898.0,580.31 L899.0,579.35 L900.0,578.36 L901.0,577.35 L902.0,576.32 L903.0,575.27 L904.0,574.20 L905.0,573.11 L906.0,571.99 L907.0,570.85 L908.0,569.69 L909.0,568.52 L910.0,567.34 L911.0,566.15 L912.0,564.96 L913.0,563.76 L914.0,562.56 L915.0,561.36 L916.0,560.18 L917.0,559.00 L918.0,557.85 L919.0,556.71 L920.0,555.61 L921.0,554.54 L922.0,553.51 L923.0,552.53 L924.0,551.60 L925.0,550.73 L926.0,549.93 L927.0,549.20 L928.0,548.55 L929.0,547.99 L930.0,547.51 L931.0,547.13 L932.0,546.84 L933.0,546.66 L934.0,546.58 L935.0,546.60 L936.0,546.72 L937.0,546.94 L938.0,547.26 L939.0,547.67 L940.0,548.17 L941.0,548.76 L942.0,549.43 L943.0,550.18 L944.0,551.00 L945.0,551.89 L946.0,552.83 L947.0,553.83 L948.0,554.88 L949.0,555.96 L950.0,557.09 L951.0,558.24 L952.0,559.42 L953.0,560.61 L954.0,561.82 L955.0,563.04 L956.0,564.27 L957.0,565.50 L958.0,566.73 L959.0,567.96 L960.0,569.20 L961.0,570.45 L962.0,571.68 L963.0,572.91 L964.0,574.12 L965.0,575.31 L966.0,576.48 L967.0,577.64 L968.0,578.77 L969.0,579.89 L970.0,580.99 L971.0,582.06 L972.0,583.11 L973.0,584.15 L974.0,585.16 L975.0,586.15 L976.0,587.12 L977.0,588.08 L978.0,589.01 L979.0,589.92 L980.0,590.82 L981.0,591.69 L982.0,592.53 L983.0,593.35 L984.0,594.16 L985.0,594.95 L986.0,595.73 L987.0,596.50 L988.0,597.26 L989.0,598.00 L990.0,598.73 L991.0,599.46 L992.0,600.17 L993.0,600.88 L994.0,601.57 L995.0,602.27 L996.0,602.95 L997.0,603.63 L998.0,604.31 L999.0,604.99 L1000.0,605.66 L1001.0,606.33 L1002.0,607.01 L1003.0,607.68 L1004.0,608.36 L1005.0,609.04 L1006.0,609.72 L1007.0,610.42 L1008.0,611.12 L1009.0,611.83 L1010.0,612.55 L1011.0,613.28 L1012.0,614.02 L1013.0,614.79 L1014.0,615.56 L1015.0,616.36 L1016.0,617.18 L1017.0,618.02 L1018.0,618.88 L1019.0,619.77 L1020.0,620.69 L1021.0,621.63 L1022.0,622.61 L1023.0,623.62 L1024.0,624.66 L1025.0,625.73 L1026.0,626.84 L1027.0,627.98 L1028.0,629.16 L1029.0,630.37 L1030.0,631.60 L1031.0,632.86 L1032.0,634.14 L1033.0,635.43 L1034.0,636.73 L1035.0,638.02 L1036.0,639.29 L1037.0,640.53 L1038.0,641.72 L1039.0,642.84 L1040.0,643.88 L1041.0,644.82 L1042.0,645.64 L1043.0,646.32 L1044.0,646.86 L1045.0,647.24 L1046.0,647.45 L1047.0,647.50 L1048.0,647.38 L1049.0,647.10 L1050.0,646.68 L1051.0,646.12 L1052.0,645.45 L1053.0,644.68 L1054.0,643.83 L1055.0,642.91 L1056.0,641.95 L1057.0,640.96 L1058.0,639.95 L1059.0,638.94 L1060.0,637.94 L1061.0,636.95 L1062.0,635.99 L1063.0,635.05 L1064.0,634.14 L1065.0,633.27 L1066.0,632.44 L1067.0,631.64 L1068.0,630.88 L1069.0,630.16 L1070.0,629.48 L1071.0,628.83 L1072.0,628.22 L1073.0,627.64 L1074.0,627.10 L1075.0,626.59 L1076.0,626.10 L1077.0,625.65 L1078.0,625.22 L1079.0,624.81 L1080.0,624.43 L1081.0,624.07 L1082.0,623.74 L1083.0,623.42 L1084.0,623.12 L1085.0,622.84 L1086.0,622.58 L1087.0,622.33 L1088.0,622.09 L1089.0,621.87 L1090.0,621.66 L1091.0,621.46 L1092.0,621.28 L1093.0,621.10 L1094.0,620.94 L1095.0,620.78 L1096.0,620.63 L1097.0,620.49 L1098.0,620.36 L1099.0,620.24 L1100.0,620.12 L1101.0,620.01 L1102.0,619.90 L1103.0,619.80 L1104.0,619.71 L1105.0,619.62 L1106.0,619.54 L1107.0,619.46 L1108.0,619.38 L1109.0,619.31 L1110.0,619.24 L1111.0,619.18 L1112.0,619.11 L1113.0,619.06 L1114.0,619.00 L1115.0,618.95 L1116.0,618.90 L1117.0,618.85 L1118.0,618.80 L1119.0,618.76 L1120.0,618.72 L1121.0,618.68 L1122.0,618.65 L1123.0,618.61 L1124.0,618.58 L1125.0,618.55 L1126.0,618.52 L1127.0,618.49 L1128.0,618.46 L1129.0,618.43 L1130.0,618.41 L1131.0,618.38 L1132.0,618.36 L1133.0,618.34 L1134.0,618.32 L1135.0,618.30 L1136.0,618.28 L1137.0,618.26 L1138.0,618.25 L1139.0,618.23 L1140.0,618.22 L1141.0,618.20 L1142.0,618.19 L1143.0,618.17 L1144.0,618.16 L1145.0,618.15 L1146.0,618.14 L1147.0,618.12 L1148.0,618.11 L1149.0,618.10 L1150.0,618.09 L1151.0,618.08 L1152.0,618.07 L1153.0,618.07 L1154.0,618.06 L1155.0,618.05 L1156.0,618.04 L1157.0,618.03 L1158.0,618.03 L1159.0,618.02 L1160.0,618.01 L1161.0,618.01 L1162.0,618.00 L1163.0,617.99 L1164.0,617.99 L1165.0,617.98 L1166.0,617.98 L1167.0,617.97 L1168.0,617.96 L1169.0,617.96 L1170.0,617.95 L1171.0,617.95 L1172.0,617.94 L1173.0,617.94 L1174.0,617.93 L1175.0,617.93 L1176.0,617.93 L1177.0,617.92 L1178.0,617.92 L1179.0,617.91 L1180.0,617.91 L1181.0,617.90 L1182.0,617.90 L1183.0,617.90 L1184.0,617.89 L1185.0,617.89 L1186.0,617.88 L1187.0,617.88 L1188.0,617.88 L1189.0,617.87 L1190.0,617.87 L1191.0,617.86 L1192.0,617.86 L1193.0,617.86 L1194.0,617.85 L1195.0,617.85 L1196.0,617.84 L1197.0,617.84 L1198.0,617.83 L1199.0,617.83 L1200.0,617.83 L1201.0,617.82 L1202.0,617.82 L1203.0,617.81 L1204.0,617.81 L1205.0,617.80 L1206.0,617.80 L1207.0,617.80 L1208.0,617.79 L1209.0,617.79 L1210.0,617.78 L1211.0,617.78 L1212.0,617.77 L1213.0,617.77 L1214.0,617.76 L1215.0,617.76 L1216.0,617.75 L1217.0,617.75 L1218.0,617.74 L1219.0,617.73 L1220.0,617.73 L1221.0,617.72 L1222.0,617.72 L1223.0,617.71 L1224.0,617.70 L1225.0,617.70 L1226.0,617.69 L1227.0,617.69 L1228.0,617.68 L1229.0,617.67 L1230.0,617.67 L1231.0,617.66 L1232.0,617.65 L1233.0,617.65 L1234.0,617.64 L1235.0,617.63 L1236.0,617.62 L1237.0,617.62 L1238.0,617.61 L1239.0,617.60 L1240.0,617.59 L1241.0,617.58 L1242.0,617.58 L1243.0,617.57 L1244.0,617.56 L1245.0,617.55 L1246.0,617.54 L1247.0,617.53 L1248.0,617.52 L1249.0,617.51 L1250.0,617.50 L1251.0,617.49 L1252.0,617.48 L1253.0,617.47 L1254.0,617.46 L1255.0,617.45 L1256.0,617.44 L1257.0,617.43 L1258.0,617.42 L1259.0,617.41 L1260.0,617.40 L1261.0,617.38 L1262.0,617.37 L1263.0,617.36 L1264.0,617.35 L1265.0,617.33 L1266.0,617.32 L1267.0,617.31 L1268.0,617.30 L1269.0,617.28 L1270.0,617.27 L1271.0,617.25 L1272.0,617.24 L1273.0,617.22 L1274.0,617.21 L1275.0,617.20 L1276.0,617.18 L1277.0,617.16 L1278.0,617.15 L1279.0,617.13 L1280.0,617.12 L1281.0,617.10 L1282.0,617.08 L1283.0,617.07 L1284.0,617.05 L1285.0,617.03 L1286.0,617.01 L1287.0,617.00 L1288.0,616.98 L1289.0,616.96 L1290.0,616.94 L1291.0,616.92 L1292.0,616.90 L1293.0,616.88 L1294.0,616.86 L1295.0,616.84 L1296.0,616.82 L1297.0,616.80 L1298.0,616.77 L1299.0,616.75 L1300.0,616.73 L1301.0,616.71 L1302.0,616.68 L1303.0,616.66 L1304.0,616.64 L1305.0,616.61 L1306.0,616.59 L1307.0,616.56 L1308.0,616.53 L1309.0,616.51 L1310.0,616.48 L1311.0,616.45 L1312.0,616.42 L1313.0,616.39 L1314.0,616.37 L1315.0,616.34 L1316.0,616.31 L1317.0,616.27 L1318.0,616.24 L1319.0,616.21 L1320.0,616.18 L1321.0,616.14 L1322.0,616.11 L1323.0,616.08 L1324.0,616.04 L1325.0,616.01 L1326.0,615.97 L1327.0,615.93 L1328.0,615.89 L1329.0,615.86 L1330.0,615.82 L1331.0,615.78 L1332.0,615.74 L1333.0,615.69 L1334.0,615.65 L1335.0,615.61 L1336.0,615.56 L1337.0,615.51 L1338.0,615.47 L1339.0,615.42 L1340.0,615.37 L1341.0,615.32 L1342.0,615.27 L1343.0,615.22 L1344.0,615.17 L1345.0,615.11 L1346.0,615.06 L1347.0,615.00 L1348.0,614.94 L1349.0,614.88 L1350.0,614.82 L1351.0,614.76 L1352.0,614.70 L1353.0,614.64 L1354.0,614.57 L1355.0,614.51 L1356.0,614.45 L1357.0,614.39 L1358.0,614.32 L1359.0,614.26 L1360.0,614.19 L1361.0,614.12 L1362.0,614.05 L1363.0,613.98 L1364.0,613.90 L1365.0,613.83 L1366.0,613.75 L1367.0,613.67 L1368.0,613.60 L1369.0,613.51 L1370.0,613.43 L1371.0,613.35 L1372.0,613.26 L1373.0,613.17 L1374.0,613.08 L1375.0,612.98 L1376.0,612.88 L1377.0,612.78 L1378.0,612.68 L1379.0,612.57 L1380.0,612.47 L1381.0,612.36 L1382.0,612.24 L1383.0,612.13 L1384.0,612.01 L1385.0,611.89 L1386.0,611.76 L1387.0,611.64 L1388.0,611.51 L1389.0,611.37 L1390.0,611.24 L1391.0,611.10 L1392.0,610.95 L1393.0,610.81 L1394.0,610.66 L1395.0,610.51 L1396.0,610.35 L1397.0,610.19 L1398.0,610.03 L1399.0,609.86 L1400.0,609.69 L1401.0,609.51 L1402.0,609.33 L1403.0,609.15 L1404.0,608.96 L1405.0,608.76 L1406.0,608.56 L1407.0,608.36 L1408.0,608.15 L1409.0,607.93 L1410.0,607.71 L1411.0,607.48 L1412.0,607.25 L1413.0,607.01 L1414.0,606.77 L1415.0,606.51 L1416.0,606.25 L1417.0,605.99 L1418.0,605.72 L1419.0,605.44 L1420.0,605.15 L1421.0,604.85 L1422.0,604.55 L1423.0,604.24 L1424.0,603.92 L1425.0,603.59 L1426.0,603.25 L1427.0,602.91 L1428.0,602.55 L1429.0,602.19 L1430.0,601.81 L1431.0,601.42 L1432.0,601.03 L1433.0,600.62 L1434.0,600.20 L1435.0,599.78 L1436.0,599.34 L1437.0,598.88 L1438.0,598.42 L1439.0,597.95 L1440.0,597.46 L1441.0,596.96 L1442.0,596.44 L1443.0,595.92 L1444.0,595.38 L1445.0,594.83 L1446.0,594.26 L1447.0,593.68 L1448.0,593.09 L1449.0,592.49 L1450.0,591.87 L1451.0,591.24 L1452.0,590.60 L1453.0,589.94 L1454.0,589.27 L1455.0,588.59 L1456.0,587.90 L1457.0,587.19 L1458.0,586.48 L1459.0,585.76 L1460.0,585.03 L1461.0,584.29 L1462.0,583.54 L1463.0,582.79 L1464.0,582.04 L1465.0,581.28 L1466.0,580.53 L1467.0,579.77 L1468.0,579.02 L1469.0,578.28 L1470.0,577.54 L1471.0,576.81 L1472.0,576.10 L1473.0,575.40 L1474.0,574.73 L1475.0,574.07 L1476.0,573.44 L1477.0,572.84 L1478.0,572.26 L1479.0,571.73 L1480.0,571.23 L1481.0,570.77 L1482.0,570.35 L1483.0,569.98 L1484.0,569.65 L1485.0,569.38 L1486.0,569.16 L1487.0,568.99 L1488.0,568.87 L1489.0,568.81 L1490.0,568.81 L1491.0,568.86 L1492.0,568.96 L1493.0,569.12 L1494.0,569.33 L1495.0,569.60 L1496.0,569.91 L1497.0,570.27 L1498.0,570.67 L1499.0,571.11 L1500.0,571.60 L1501.0,572.12 L1502.0,572.67 L1503.0,573.25 L1504.0,573.86 L1505.0,574.50 L1506.0,575.15 L1507.0,575.83 L1508.0,576.51 L1509.0,577.21 L1510.0,577.92 L1511.0,578.64 L1512.0,579.36 L1513.0,580.08 L1514.0,580.80 L1515.0,581.52 L1516.0,582.24 L1517.0,582.95 L1518.0,583.66 L1519.0,584.36 L1520.0,585.05 L1521.0,585.73 L1522.0,586.40 L1523.0,587.06 L1524.0,587.71 L1525.0,588.34 L1526.0,588.96 L1527.0,589.57 L1528.0,590.16 L1529.0,590.74 L1530.0,591.31 L1531.0,591.86 L1532.0,592.40 L1533.0,592.92 L1534.0,593.43 L1535.0,593.92 L1536.0,594.40 L1537.0,594.86 L1538.0,595.31 L1539.0,595.75 L1540.0,596.17 L1541.0,596.58 L1542.0,596.97 L1543.0,597.35 L1544.0,597.72 L1545.0,598.07 L1546.0,598.41 L1547.0,598.74 L1548.0,599.06 L1549.0,599.36 L1550.0,599.65 L1551.0,599.93 L1552.0,600.20 L1553.0,600.45 L1554.0,600.69 L1555.0,600.92 L1556.0,601.14 L1557.0,601.35 L1558.0,601.55 L1559.0,601.73 L1560.0,601.91 L1561.0,602.07 L1562.0,602.22 L1563.0,602.36 L1564.0,602.49 L1565.0,602.61 L1566.0,602.72 L1567.0,602.81 L1568.0,602.90 L1569.0,602.97 L1570.0,603.03 L1571.0,603.09 L1572.0,603.13 L1573.0,603.15 L1574.0,603.17 L1575.0,603.17 L1576.0,603.16 L1577.0,603.14 L1578.0,603.10 L1579.0,603.05 L1580.0,602.99 L1581.0,602.91 L1582.0,602.82 L1583.0,602.71 L1584.0,602.58 L1585.0,602.44 L1586.0,602.29 L1587.0,602.11 L1588.0,601.92 L1589.0,601.70 L1590.0,601.47 L1591.0,601.22 L1592.0,600.94 L1593.0,600.65 L1594.0,600.33 L1595.0,599.98 L1596.0,599.61 L1597.0,599.21 L1598.0,598.78 L1599.0,598.33 L1600.0,597.84 L1601.0,597.32 L1602.0,596.77 L1603.0,596.18 L1604.0,595.56 L1605.0,594.89 L1606.0,594.19 L1607.0,593.44 L1608.0,592.66 L1609.0,591.83 L1610.0,590.95 L1611.0,590.03 L1612.0,589.07 L1613.0,588.05 L1614.0,587.00 L1615.0,585.89 L1616.0,584.77 L1617.0,583.63 L1618.0,582.46 L1619.0,581.26 L1620.0,580.04 L1621.0,578.80 L1622.0,577.56 L1623.0,576.32 L1624.0,575.09 L1625.0,573.90 L1626.0,572.75 L1627.0,571.66 L1628.0,570.64 L1629.0,569.73 L1630.0,568.92 L1631.0,568.24 L1632.0,567.70 L1633.0,567.32 L1634.0,567.11 L1635.0,567.07 L1636.0,567.20 L1637.0,567.51 L1638.0,567.98 L1639.0,568.61 L1640.0,569.39 L1641.0,570.30 L1642.0,571.33 L1643.0,572.46 L1644.0,573.66 L1645.0,574.93 L1646.0,576.25 L1647.0,577.60 L1648.0,578.97 L1649.0,580.35 L1650.0,581.71 L1651.0,583.07 L1652.0,584.40 L1653.0,585.74 L1654.0,587.07 L1655.0,588.35 L1656.0,589.60 L1657.0,590.80 L1658.0,591.95 L1659.0,593.06 L1660.0,594.12 L1661.0,595.13 L1662.0,596.10 L1663.0,597.02 L1664.0,597.91 L1665.0,598.75 L1666.0,599.55 L1667.0,600.31 L1668.0,601.04 L1669.0,601.73 L1670.0,602.39 L1671.0,603.02 L1672.0,603.62 L1673.0,604.19 L1674.0,604.73 L1675.0,605.25 L1676.0,605.75 L1677.0,606.22 L1678.0,606.67 L1679.0,607.10 L1680.0,607.51 L1681.0,607.90 L1682.0,608.26 L1683.0,608.60 L1684.0,608.93 L1685.0,609.24 L1686.0,609.54 L1687.0,609.83 L1688.0,610.11 L1689.0,610.37 L1690.0,610.63 L1691.0,610.88 L1692.0,611.11 L1693.0,611.34 L1694.0,611.56 L1695.0,611.78 L1696.0,611.98 L1697.0,612.18 L1698.0,612.37 L1699.0,612.56 L1700.0,612.74 L1701.0,612.91 L1702.0,613.08 L1703.0,613.24 L1704.0,613.40 L1705.0,613.55 L1706.0,613.70 L1707.0,613.84 L1708.0,613.99 L1709.0,614.13 L1710.0,614.28 L1711.0,614.41 L1712.0,614.55 L1713.0,614.67 L1714.0,614.80 L1715.0,614.92 L1716.0,615.04 L1717.0,615.16 L1718.0,615.27 L1719.0,615.38 L1720.0,615.49 L1721.0,615.60 L1722.0,615.70 L1723.0,615.80 L1724.0,615.90 L1725.0,616.00 L1726.0,616.09 L1727.0,616.18 L1728.0,616.28 L1729.0,616.37 L1730.0,616.45 L1731.0,616.54 L1732.0,616.62 L1733.0,616.70 L1734.0,616.79 L1735.0,616.87 L1736.0,616.95 L1737.0,617.03 L1738.0,617.11 L1739.0,617.18 L1740.0,617.26 L1741.0,617.34 L1742.0,617.41 L1743.0,617.49 L1744.0,617.57 L1745.0,617.64 L1746.0,617.72 L1747.0,617.80 L1748.0,617.87 L1749.0,617.94 L1750.0,618.02 L1751.0,618.09 L1752.0,618.16 L1753.0,618.24 L1754.0,618.31 L1755.0,618.39 L1756.0,618.46 L1757.0,618.54 L1758.0,618.62 L1759.0,618.70 L1760.0,618.78 L1761.0,618.86 L1762.0,618.94 L1763.0,619.03 L1764.0,619.11 L1765.0,619.20 L1766.0,619.30 L1767.0,619.40 L1768.0,619.50 L1769.0,619.60 L1770.0,619.71 L1771.0,619.82 L1772.0,619.93 L1773.0,620.05 L1774.0,620.18 L1775.0,620.31 L1776.0,620.44 L1777.0,620.58 L1778.0,620.72 L1779.0,620.87 L1780.0,621.03 L1781.0,621.20 L1782.0,621.37 L1783.0,621.56 L1784.0,621.75 L1785.0,621.96 L1786.0,622.17 L1787.0,622.40 L1788.0,622.64 L1789.0,622.90 L1790.0,623.18 L1791.0,623.47 L1792.0,623.78 L1793.0,624.11 L1794.0,624.46 L1795.0,624.84 L1796.0,625.25 L1797.0,625.69 L1798.0,626.15 L1799.0,626.65 L1800.0,627.19 L1801.0,627.77 L1802.0,628.39 L1803.0,629.06 L1804.0,629.77 L1805.0,630.54 L1806.0,631.35 L1807.0,632.21 L1808.0,633.12 L1809.0,634.07 L1810.0,635.06 L1811.0,636.08 L1812.0,637.10 L1813.0,638.12 L1814.0,639.10 L1815.0,640.01 L1816.0,640.83 L1817.0,641.51 L1818.0,642.02 L1819.0,642.34 L1820.0,642.43 L1821.0,642.30 L1822.0,641.93 L1823.0,641.35 L1824.0,640.58 L1825.0,639.65 L1826.0,638.61 L1827.0,637.49 L1828.0,636.33 L1829.0,635.16 L1830.0,634.00 L1831.0,632.87 L1832.0,631.79 L1833.0,630.77 L1834.0,629.82 L1835.0,628.92 L1836.0,628.10 L1837.0,627.33 L1838.0,626.63 L1839.0,625.99 L1840.0,625.39 L1841.0,624.85 L1842.0,624.36 L1843.0,623.90 L1844.0,623.49 L1845.0,623.11 L1846.0,622.76 L1847.0,622.44 L1848.0,622.14 L1849.0,621.88 L1850.0,621.63 L1851.0,621.40 L1852.0,621.19 L1853.0,621.00 L1854.0,620.82 L1855.0,620.65 L1856.0,620.50 L1857.0,620.36 L1858.0,620.23 L1859.0,620.11 L1860.0,620.00 L1861.0,619.89 L1862.0,619.79 L1863.0,619.70 L1864.0,619.62 L1865.0,619.54 L1866.0,619.47 L1867.0,619.40 L1868.0,619.33 L1869.0,619.28 L1870.0,619.22 L1871.0,619.17 L1872.0,619.12 L1873.0,619.07 L1874.0,619.03 L1875.0,618.99 L1876.0,618.95 L1877.0,618.92 L1878.0,618.88 L1879.0,618.85 L1880.0,618.82 L1881.0,618.80 L1882.0,618.77 L1883.0,618.75 L1884.0,618.72 L1885.0,618.70 L1886.0,618.68 L1887.0,618.66 L1888.0,618.65 L1889.0,618.63 L1890.0,618.62 L1891.0,618.60 L1892.0,618.59 L1893.0,618.58 L1893,618.50 Z" fill="rgba(12,200,245,0.62)" stroke="none"/>
<path d="M656.0,617.92 L657.0,617.91 L658.0,617.90 L659.0,617.89 L660.0,617.89 L661.0,617.88 L662.0,617.87 L663.0,617.86 L664.0,617.85 L665.0,617.84 L666.0,617.84 L667.0,617.83 L668.0,617.82 L669.0,617.81 L670.0,617.80 L671.0,617.79 L672.0,617.78 L673.0,617.77 L674.0,617.76 L675.0,617.75 L676.0,617.74 L677.0,617.73 L678.0,617.72 L679.0,617.71 L680.0,617.70 L681.0,617.69 L682.0,617.68 L683.0,617.67 L684.0,617.65 L685.0,617.64 L686.0,617.63 L687.0,617.62 L688.0,617.61 L689.0,617.59 L690.0,617.58 L691.0,617.57 L692.0,617.56 L693.0,617.54 L694.0,617.53 L695.0,617.52 L696.0,617.50 L697.0,617.49 L698.0,617.48 L699.0,617.46 L700.0,617.45 L701.0,617.43 L702.0,617.42 L703.0,617.40 L704.0,617.39 L705.0,617.37 L706.0,617.36 L707.0,617.34 L708.0,617.33 L709.0,617.31 L710.0,617.29 L711.0,617.28 L712.0,617.26 L713.0,617.24 L714.0,617.22 L715.0,617.21 L716.0,617.19 L717.0,617.17 L718.0,617.15 L719.0,617.13 L720.0,617.11 L721.0,617.09 L722.0,617.07 L723.0,617.05 L724.0,617.03 L725.0,617.01 L726.0,616.99 L727.0,616.97 L728.0,616.94 L729.0,616.92 L730.0,616.90 L731.0,616.88 L732.0,616.85 L733.0,616.83 L734.0,616.80 L735.0,616.78 L736.0,616.76 L737.0,616.73 L738.0,616.70 L739.0,616.68 L740.0,616.65 L741.0,616.62 L742.0,616.60 L743.0,616.57 L744.0,616.54 L745.0,616.51 L746.0,616.48 L747.0,616.45 L748.0,616.42 L749.0,616.39 L750.0,616.36 L751.0,616.33 L752.0,616.29 L753.0,616.26 L754.0,616.23 L755.0,616.19 L756.0,616.16 L757.0,616.12 L758.0,616.09 L759.0,616.05 L760.0,616.01 L761.0,615.98 L762.0,615.94 L763.0,615.90 L764.0,615.86 L765.0,615.82 L766.0,615.77 L767.0,615.73 L768.0,615.69 L769.0,615.64 L770.0,615.60 L771.0,615.55 L772.0,615.51 L773.0,615.46 L774.0,615.41 L775.0,615.36 L776.0,615.31 L777.0,615.26 L778.0,615.21 L779.0,615.16 L780.0,615.10 L781.0,615.05 L782.0,614.99 L783.0,614.94 L784.0,614.88 L785.0,614.82 L786.0,614.76 L787.0,614.70 L788.0,614.63 L789.0,614.57 L790.0,614.50 L791.0,614.44 L792.0,614.37 L793.0,614.30 L794.0,614.23 L795.0,614.16 L796.0,614.08 L797.0,614.01 L798.0,613.93 L799.0,613.85 L800.0,613.77 L801.0,613.69 L802.0,613.61 L803.0,613.52 L804.0,613.44 L805.0,613.35 L806.0,613.26 L807.0,613.17 L808.0,613.07 L809.0,612.98 L810.0,612.88 L811.0,612.78 L812.0,612.67 L813.0,612.57 L814.0,612.46 L815.0,612.35 L816.0,612.24 L817.0,612.12 L818.0,612.01 L819.0,611.89 L820.0,611.76 L821.0,611.64 L822.0,611.51 L823.0,611.38 L824.0,611.25 L825.0,611.11 L826.0,610.96 L827.0,610.82 L828.0,610.67 L829.0,610.52 L830.0,610.36 L831.0,610.20 L832.0,610.04 L833.0,609.87 L834.0,609.70 L835.0,609.52 L836.0,609.34 L837.0,609.15 L838.0,608.96 L839.0,608.77 L840.0,608.57 L841.0,608.36 L842.0,608.15 L843.0,607.94 L844.0,607.71 L845.0,607.49 L846.0,607.25 L847.0,607.01 L848.0,606.77 L849.0,606.51 L850.0,606.26 L851.0,605.99 L852.0,605.71 L853.0,605.43 L854.0,605.14 L855.0,604.85 L856.0,604.54 L857.0,604.23 L858.0,603.90 L859.0,603.57 L860.0,603.23 L861.0,602.88 L862.0,602.52 L863.0,602.15 L864.0,601.77 L865.0,601.37 L866.0,600.97 L867.0,600.55 L868.0,600.12 L869.0,599.68 L870.0,599.24 L871.0,598.78 L872.0,598.32 L873.0,597.84 L874.0,597.35 L875.0,596.84 L876.0,596.32 L877.0,595.78 L878.0,595.23 L879.0,594.66 L880.0,594.08 L881.0,593.48 L882.0,592.86 L883.0,592.23 L884.0,591.57 L885.0,590.90 L886.0,590.21 L887.0,589.50 L888.0,588.77 L889.0,588.02 L890.0,587.25 L891.0,586.46 L892.0,585.65 L893.0,584.81 L894.0,583.96 L895.0,583.08 L896.0,582.18 L897.0,581.26 L898.0,580.31 L899.0,579.35 L900.0,578.36 L901.0,577.35 L902.0,576.32 L903.0,575.27 L904.0,574.20 L905.0,573.11 L906.0,571.99 L907.0,570.85 L908.0,569.69 L909.0,568.52 L910.0,567.34 L911.0,566.15 L912.0,564.96 L913.0,563.76 L914.0,562.56 L915.0,561.36 L916.0,560.18 L917.0,559.00 L918.0,557.85 L919.0,556.71 L920.0,555.61 L921.0,554.54 L922.0,553.51 L923.0,552.53 L924.0,551.60 L925.0,550.73 L926.0,549.93 L927.0,549.20 L928.0,548.55 L929.0,547.99 L930.0,547.51 L931.0,547.13 L932.0,546.84 L933.0,546.66 L934.0,546.58 L935.0,546.60 L936.0,546.72 L937.0,546.94 L938.0,547.26 L939.0,547.67 L940.0,548.17 L941.0,548.76 L942.0,549.43 L943.0,550.18 L944.0,551.00 L945.0,551.89 L946.0,552.83 L947.0,553.83 L948.0,554.88 L949.0,555.96 L950.0,557.09 L951.0,558.24 L952.0,559.42 L953.0,560.61 L954.0,561.82 L955.0,563.04 L956.0,564.27 L957.0,565.50 L958.0,566.73 L959.0,567.96 L960.0,569.20 L961.0,570.45 L962.0,571.68 L963.0,572.91 L964.0,574.12 L965.0,575.31 L966.0,576.48 L967.0,577.64 L968.0,578.77 L969.0,579.89 L970.0,580.99 L971.0,582.06 L972.0,583.11 L973.0,584.15 L974.0,585.16 L975.0,586.15 L976.0,587.12 L977.0,588.08 L978.0,589.01 L979.0,589.92 L980.0,590.82 L981.0,591.69 L982.0,592.53 L983.0,593.35 L984.0,594.16 L985.0,594.95 L986.0,595.73 L987.0,596.50 L988.0,597.26 L989.0,598.00 L990.0,598.73 L991.0,599.46 L992.0,600.17 L993.0,600.88 L994.0,601.57 L995.0,602.27 L996.0,602.95 L997.0,603.63 L998.0,604.31 L999.0,604.99 L1000.0,605.66 L1001.0,606.33 L1002.0,607.01 L1003.0,607.68 L1004.0,608.36 L1005.0,609.04 L1006.0,609.72 L1007.0,610.42 L1008.0,611.12 L1009.0,611.83 L1010.0,612.55 L1011.0,613.28 L1012.0,614.02 L1013.0,614.79 L1014.0,615.56 L1015.0,616.36 L1016.0,617.18 L1017.0,618.02 L1018.0,618.88 L1019.0,619.77 L1020.0,620.69 L1021.0,621.63 L1022.0,622.61 L1023.0,623.62 L1024.0,624.66 L1025.0,625.73 L1026.0,626.84 L1027.0,627.98 L1028.0,629.16 L1029.0,630.37 L1030.0,631.60 L1031.0,632.86 L1032.0,634.14 L1033.0,635.43 L1034.0,636.73 L1035.0,638.02 L1036.0,639.29 L1037.0,640.53 L1038.0,641.72 L1039.0,642.84 L1040.0,643.88 L1041.0,644.82 L1042.0,645.64 L1043.0,646.32 L1044.0,646.86 L1045.0,647.24 L1046.0,647.45 L1047.0,647.50 L1048.0,647.38 L1049.0,647.10 L1050.0,646.68 L1051.0,646.12 L1052.0,645.45 L1053.0,644.68 L1054.0,643.83 L1055.0,642.91 L1056.0,641.95 L1057.0,640.96 L1058.0,639.95 L1059.0,638.94 L1060.0,637.94 L1061.0,636.95 L1062.0,635.99 L1063.0,635.05 L1064.0,634.14 L1065.0,633.27 L1066.0,632.44 L1067.0,631.64 L1068.0,630.88 L1069.0,630.16 L1070.0,629.48 L1071.0,628.83 L1072.0,628.22 L1073.0,627.64 L1074.0,627.10 L1075.0,626.59 L1076.0,626.10 L1077.0,625.65 L1078.0,625.22 L1079.0,624.81 L1080.0,624.43 L1081.0,624.07 L1082.0,623.74 L1083.0,623.42 L1084.0,623.12 L1085.0,622.84 L1086.0,622.58 L1087.0,622.33 L1088.0,622.09 L1089.0,621.87 L1090.0,621.66 L1091.0,621.46 L1092.0,621.28 L1093.0,621.10 L1094.0,620.94 L1095.0,620.78 L1096.0,620.63 L1097.0,620.49 L1098.0,620.36 L1099.0,620.24 L1100.0,620.12 L1101.0,620.01 L1102.0,619.90 L1103.0,619.80 L1104.0,619.71 L1105.0,619.62 L1106.0,619.54 L1107.0,619.46 L1108.0,619.38 L1109.0,619.31 L1110.0,619.24 L1111.0,619.18 L1112.0,619.11 L1113.0,619.06 L1114.0,619.00 L1115.0,618.95 L1116.0,618.90 L1117.0,618.85 L1118.0,618.80 L1119.0,618.76 L1120.0,618.72 L1121.0,618.68 L1122.0,618.65 L1123.0,618.61 L1124.0,618.58 L1125.0,618.55 L1126.0,618.52 L1127.0,618.49 L1128.0,618.46 L1129.0,618.43 L1130.0,618.41 L1131.0,618.38 L1132.0,618.36 L1133.0,618.34 L1134.0,618.32 L1135.0,618.30 L1136.0,618.28 L1137.0,618.26 L1138.0,618.25 L1139.0,618.23 L1140.0,618.22 L1141.0,618.20 L1142.0,618.19 L1143.0,618.17 L1144.0,618.16 L1145.0,618.15 L1146.0,618.14 L1147.0,618.12 L1148.0,618.11 L1149.0,618.10 L1150.0,618.09 L1151.0,618.08 L1152.0,618.07 L1153.0,618.07 L1154.0,618.06 L1155.0,618.05 L1156.0,618.04 L1157.0,618.03 L1158.0,618.03 L1159.0,618.02 L1160.0,618.01 L1161.0,618.01 L1162.0,618.00 L1163.0,617.99 L1164.0,617.99 L1165.0,617.98 L1166.0,617.98 L1167.0,617.97 L1168.0,617.96 L1169.0,617.96 L1170.0,617.95 L1171.0,617.95 L1172.0,617.94 L1173.0,617.94 L1174.0,617.93 L1175.0,617.93 L1176.0,617.93 L1177.0,617.92 L1178.0,617.92 L1179.0,617.91 L1180.0,617.91 L1181.0,617.90 L1182.0,617.90 L1183.0,617.90 L1184.0,617.89 L1185.0,617.89 L1186.0,617.88 L1187.0,617.88 L1188.0,617.88 L1189.0,617.87 L1190.0,617.87 L1191.0,617.86 L1192.0,617.86 L1193.0,617.86 L1194.0,617.85 L1195.0,617.85 L1196.0,617.84 L1197.0,617.84 L1198.0,617.83 L1199.0,617.83 L1200.0,617.83 L1201.0,617.82 L1202.0,617.82 L1203.0,617.81 L1204.0,617.81 L1205.0,617.80 L1206.0,617.80 L1207.0,617.80 L1208.0,617.79 L1209.0,617.79 L1210.0,617.78 L1211.0,617.78 L1212.0,617.77 L1213.0,617.77 L1214.0,617.76 L1215.0,617.76 L1216.0,617.75 L1217.0,617.75 L1218.0,617.74 L1219.0,617.73 L1220.0,617.73 L1221.0,617.72 L1222.0,617.72 L1223.0,617.71 L1224.0,617.70 L1225.0,617.70 L1226.0,617.69 L1227.0,617.69 L1228.0,617.68 L1229.0,617.67 L1230.0,617.67 L1231.0,617.66 L1232.0,617.65 L1233.0,617.65 L1234.0,617.64 L1235.0,617.63 L1236.0,617.62 L1237.0,617.62 L1238.0,617.61 L1239.0,617.60 L1240.0,617.59 L1241.0,617.58 L1242.0,617.58 L1243.0,617.57 L1244.0,617.56 L1245.0,617.55 L1246.0,617.54 L1247.0,617.53 L1248.0,617.52 L1249.0,617.51 L1250.0,617.50 L1251.0,617.49 L1252.0,617.48 L1253.0,617.47 L1254.0,617.46 L1255.0,617.45 L1256.0,617.44 L1257.0,617.43 L1258.0,617.42 L1259.0,617.41 L1260.0,617.40 L1261.0,617.38 L1262.0,617.37 L1263.0,617.36 L1264.0,617.35 L1265.0,617.33 L1266.0,617.32 L1267.0,617.31 L1268.0,617.30 L1269.0,617.28 L1270.0,617.27 L1271.0,617.25 L1272.0,617.24 L1273.0,617.22 L1274.0,617.21 L1275.0,617.20 L1276.0,617.18 L1277.0,617.16 L1278.0,617.15 L1279.0,617.13 L1280.0,617.12 L1281.0,617.10 L1282.0,617.08 L1283.0,617.07 L1284.0,617.05 L1285.0,617.03 L1286.0,617.01 L1287.0,617.00 L1288.0,616.98 L1289.0,616.96 L1290.0,616.94 L1291.0,616.92 L1292.0,616.90 L1293.0,616.88 L1294.0,616.86 L1295.0,616.84 L1296.0,616.82 L1297.0,616.80 L1298.0,616.77 L1299.0,616.75 L1300.0,616.73 L1301.0,616.71 L1302.0,616.68 L1303.0,616.66 L1304.0,616.64 L1305.0,616.61 L1306.0,616.59 L1307.0,616.56 L1308.0,616.53 L1309.0,616.51 L1310.0,616.48 L1311.0,616.45 L1312.0,616.42 L1313.0,616.39 L1314.0,616.37 L1315.0,616.34 L1316.0,616.31 L1317.0,616.27 L1318.0,616.24 L1319.0,616.21 L1320.0,616.18 L1321.0,616.14 L1322.0,616.11 L1323.0,616.08 L1324.0,616.04 L1325.0,616.01 L1326.0,615.97 L1327.0,615.93 L1328.0,615.89 L1329.0,615.86 L1330.0,615.82 L1331.0,615.78 L1332.0,615.74 L1333.0,615.69 L1334.0,615.65 L1335.0,615.61 L1336.0,615.56 L1337.0,615.51 L1338.0,615.47 L1339.0,615.42 L1340.0,615.37 L1341.0,615.32 L1342.0,615.27 L1343.0,615.22 L1344.0,615.17 L1345.0,615.11 L1346.0,615.06 L1347.0,615.00 L1348.0,614.94 L1349.0,614.88 L1350.0,614.82 L1351.0,614.76 L1352.0,614.70 L1353.0,614.64 L1354.0,614.57 L1355.0,614.51 L1356.0,614.45 L1357.0,614.39 L1358.0,614.32 L1359.0,614.26 L1360.0,614.19 L1361.0,614.12 L1362.0,614.05 L1363.0,613.98 L1364.0,613.90 L1365.0,613.83 L1366.0,613.75 L1367.0,613.67 L1368.0,613.60 L1369.0,613.51 L1370.0,613.43 L1371.0,613.35 L1372.0,613.26 L1373.0,613.17 L1374.0,613.08 L1375.0,612.98 L1376.0,612.88 L1377.0,612.78 L1378.0,612.68 L1379.0,612.57 L1380.0,612.47 L1381.0,612.36 L1382.0,612.24 L1383.0,612.13 L1384.0,612.01 L1385.0,611.89 L1386.0,611.76 L1387.0,611.64 L1388.0,611.51 L1389.0,611.37 L1390.0,611.24 L1391.0,611.10 L1392.0,610.95 L1393.0,610.81 L1394.0,610.66 L1395.0,610.51 L1396.0,610.35 L1397.0,610.19 L1398.0,610.03 L1399.0,609.86 L1400.0,609.69 L1401.0,609.51 L1402.0,609.33 L1403.0,609.15 L1404.0,608.96 L1405.0,608.76 L1406.0,608.56 L1407.0,608.36 L1408.0,608.15 L1409.0,607.93 L1410.0,607.71 L1411.0,607.48 L1412.0,607.25 L1413.0,607.01 L1414.0,606.77 L1415.0,606.51 L1416.0,606.25 L1417.0,605.99 L1418.0,605.72 L1419.0,605.44 L1420.0,605.15 L1421.0,604.85 L1422.0,604.55 L1423.0,604.24 L1424.0,603.92 L1425.0,603.59 L1426.0,603.25 L1427.0,602.91 L1428.0,602.55 L1429.0,602.19 L1430.0,601.81 L1431.0,601.42 L1432.0,601.03 L1433.0,600.62 L1434.0,600.20 L1435.0,599.78 L1436.0,599.34 L1437.0,598.88 L1438.0,598.42 L1439.0,597.95 L1440.0,597.46 L1441.0,596.96 L1442.0,596.44 L1443.0,595.92 L1444.0,595.38 L1445.0,594.83 L1446.0,594.26 L1447.0,593.68 L1448.0,593.09 L1449.0,592.49 L1450.0,591.87 L1451.0,591.24 L1452.0,590.60 L1453.0,589.94 L1454.0,589.27 L1455.0,588.59 L1456.0,587.90 L1457.0,587.19 L1458.0,586.48 L1459.0,585.76 L1460.0,585.03 L1461.0,584.29 L1462.0,583.54 L1463.0,582.79 L1464.0,582.04 L1465.0,581.28 L1466.0,580.53 L1467.0,579.77 L1468.0,579.02 L1469.0,578.28 L1470.0,577.54 L1471.0,576.81 L1472.0,576.10 L1473.0,575.40 L1474.0,574.73 L1475.0,574.07 L1476.0,573.44 L1477.0,572.84 L1478.0,572.26 L1479.0,571.73 L1480.0,571.23 L1481.0,570.77 L1482.0,570.35 L1483.0,569.98 L1484.0,569.65 L1485.0,569.38 L1486.0,569.16 L1487.0,568.99 L1488.0,568.87 L1489.0,568.81 L1490.0,568.81 L1491.0,568.86 L1492.0,568.96 L1493.0,569.12 L1494.0,569.33 L1495.0,569.60 L1496.0,569.91 L1497.0,570.27 L1498.0,570.67 L1499.0,571.11 L1500.0,571.60 L1501.0,572.12 L1502.0,572.67 L1503.0,573.25 L1504.0,573.86 L1505.0,574.50 L1506.0,575.15 L1507.0,575.83 L1508.0,576.51 L1509.0,577.21 L1510.0,577.92 L1511.0,578.64 L1512.0,579.36 L1513.0,580.08 L1514.0,580.80 L1515.0,581.52 L1516.0,582.24 L1517.0,582.95 L1518.0,583.66 L1519.0,584.36 L1520.0,585.05 L1521.0,585.73 L1522.0,586.40 L1523.0,587.06 L1524.0,587.71 L1525.0,588.34 L1526.0,588.96 L1527.0,589.57 L1528.0,590.16 L1529.0,590.74 L1530.0,591.31 L1531.0,591.86 L1532.0,592.40 L1533.0,592.92 L1534.0,593.43 L1535.0,593.92 L1536.0,594.40 L1537.0,594.86 L1538.0,595.31 L1539.0,595.75 L1540.0,596.17 L1541.0,596.58 L1542.0,596.97 L1543.0,597.35 L1544.0,597.72 L1545.0,598.07 L1546.0,598.41 L1547.0,598.74 L1548.0,599.06 L1549.0,599.36 L1550.0,599.65 L1551.0,599.93 L1552.0,600.20 L1553.0,600.45 L1554.0,600.69 L1555.0,600.92 L1556.0,601.14 L1557.0,601.35 L1558.0,601.55 L1559.0,601.73 L1560.0,601.91 L1561.0,602.07 L1562.0,602.22 L1563.0,602.36 L1564.0,602.49 L1565.0,602.61 L1566.0,602.72 L1567.0,602.81 L1568.0,602.90 L1569.0,602.97 L1570.0,603.03 L1571.0,603.09 L1572.0,603.13 L1573.0,603.15 L1574.0,603.17 L1575.0,603.17 L1576.0,603.16 L1577.0,603.14 L1578.0,603.10 L1579.0,603.05 L1580.0,602.99 L1581.0,602.91 L1582.0,602.82 L1583.0,602.71 L1584.0,602.58 L1585.0,602.44 L1586.0,602.29 L1587.0,602.11 L1588.0,601.92 L1589.0,601.70 L1590.0,601.47 L1591.0,601.22 L1592.0,600.94 L1593.0,600.65 L1594.0,600.33 L1595.0,599.98 L1596.0,599.61 L1597.0,599.21 L1598.0,598.78 L1599.0,598.33 L1600.0,597.84 L1601.0,597.32 L1602.0,596.77 L1603.0,596.18 L1604.0,595.56 L1605.0,594.89 L1606.0,594.19 L1607.0,593.44 L1608.0,592.66 L1609.0,591.83 L1610.0,590.95 L1611.0,590.03 L1612.0,589.07 L1613.0,588.05 L1614.0,587.00 L1615.0,585.89 L1616.0,584.77 L1617.0,583.63 L1618.0,582.46 L1619.0,581.26 L1620.0,580.04 L1621.0,578.80 L1622.0,577.56 L1623.0,576.32 L1624.0,575.09 L1625.0,573.90 L1626.0,572.75 L1627.0,571.66 L1628.0,570.64 L1629.0,569.73 L1630.0,568.92 L1631.0,568.24 L1632.0,567.70 L1633.0,567.32 L1634.0,567.11 L1635.0,567.07 L1636.0,567.20 L1637.0,567.51 L1638.0,567.98 L1639.0,568.61 L1640.0,569.39 L1641.0,570.30 L1642.0,571.33 L1643.0,572.46 L1644.0,573.66 L1645.0,574.93 L1646.0,576.25 L1647.0,577.60 L1648.0,578.97 L1649.0,580.35 L1650.0,581.71 L1651.0,583.07 L1652.0,584.40 L1653.0,585.74 L1654.0,587.07 L1655.0,588.35 L1656.0,589.60 L1657.0,590.80 L1658.0,591.95 L1659.0,593.06 L1660.0,594.12 L1661.0,595.13 L1662.0,596.10 L1663.0,597.02 L1664.0,597.91 L1665.0,598.75 L1666.0,599.55 L1667.0,600.31 L1668.0,601.04 L1669.0,601.73 L1670.0,602.39 L1671.0,603.02 L1672.0,603.62 L1673.0,604.19 L1674.0,604.73 L1675.0,605.25 L1676.0,605.75 L1677.0,606.22 L1678.0,606.67 L1679.0,607.10 L1680.0,607.51 L1681.0,607.90 L1682.0,608.26 L1683.0,608.60 L1684.0,608.93 L1685.0,609.24 L1686.0,609.54 L1687.0,609.83 L1688.0,610.11 L1689.0,610.37 L1690.0,610.63 L1691.0,610.88 L1692.0,611.11 L1693.0,611.34 L1694.0,611.56 L1695.0,611.78 L1696.0,611.98 L1697.0,612.18 L1698.0,612.37 L1699.0,612.56 L1700.0,612.74 L1701.0,612.91 L1702.0,613.08 L1703.0,613.24 L1704.0,613.40 L1705.0,613.55 L1706.0,613.70 L1707.0,613.84 L1708.0,613.99 L1709.0,614.13 L1710.0,614.28 L1711.0,614.41 L1712.0,614.55 L1713.0,614.67 L1714.0,614.80 L1715.0,614.92 L1716.0,615.04 L1717.0,615.16 L1718.0,615.27 L1719.0,615.38 L1720.0,615.49 L1721.0,615.60 L1722.0,615.70 L1723.0,615.80 L1724.0,615.90 L1725.0,616.00 L1726.0,616.09 L1727.0,616.18 L1728.0,616.28 L1729.0,616.37 L1730.0,616.45 L1731.0,616.54 L1732.0,616.62 L1733.0,616.70 L1734.0,616.79 L1735.0,616.87 L1736.0,616.95 L1737.0,617.03 L1738.0,617.11 L1739.0,617.18 L1740.0,617.26 L1741.0,617.34 L1742.0,617.41 L1743.0,617.49 L1744.0,617.57 L1745.0,617.64 L1746.0,617.72 L1747.0,617.80 L1748.0,617.87 L1749.0,617.94 L1750.0,618.02 L1751.0,618.09 L1752.0,618.16 L1753.0,618.24 L1754.0,618.31 L1755.0,618.39 L1756.0,618.46 L1757.0,618.54 L1758.0,618.62 L1759.0,618.70 L1760.0,618.78 L1761.0,618.86 L1762.0,618.94 L1763.0,619.03 L1764.0,619.11 L1765.0,619.20 L1766.0,619.30 L1767.0,619.40 L1768.0,619.50 L1769.0,619.60 L1770.0,619.71 L1771.0,619.82 L1772.0,619.93 L1773.0,620.05 L1774.0,620.18 L1775.0,620.31 L1776.0,620.44 L1777.0,620.58 L1778.0,620.72 L1779.0,620.87 L1780.0,621.03 L1781.0,621.20 L1782.0,621.37 L1783.0,621.56 L1784.0,621.75 L1785.0,621.96 L1786.0,622.17 L1787.0,622.40 L1788.0,622.64 L1789.0,622.90 L1790.0,623.18 L1791.0,623.47 L1792.0,623.78 L1793.0,624.11 L1794.0,624.46 L1795.0,624.84 L1796.0,625.25 L1797.0,625.69 L1798.0,626.15 L1799.0,626.65 L1800.0,627.19 L1801.0,627.77 L1802.0,628.39 L1803.0,629.06 L1804.0,629.77 L1805.0,630.54 L1806.0,631.35 L1807.0,632.21 L1808.0,633.12 L1809.0,634.07 L1810.0,635.06 L1811.0,636.08 L1812.0,637.10 L1813.0,638.12 L1814.0,639.10 L1815.0,640.01 L1816.0,640.83 L1817.0,641.51 L1818.0,642.02 L1819.0,642.34 L1820.0,642.43 L1821.0,642.30 L1822.0,641.93 L1823.0,641.35 L1824.0,640.58 L1825.0,639.65 L1826.0,638.61 L1827.0,637.49 L1828.0,636.33 L1829.0,635.16 L1830.0,634.00 L1831.0,632.87 L1832.0,631.79 L1833.0,630.77 L1834.0,629.82 L1835.0,628.92 L1836.0,628.10 L1837.0,627.33 L1838.0,626.63 L1839.0,625.99 L1840.0,625.39 L1841.0,624.85 L1842.0,624.36 L1843.0,623.90 L1844.0,623.49 L1845.0,623.11 L1846.0,622.76 L1847.0,622.44 L1848.0,622.14 L1849.0,621.88 L1850.0,621.63 L1851.0,621.40 L1852.0,621.19 L1853.0,621.00 L1854.0,620.82 L1855.0,620.65 L1856.0,620.50 L1857.0,620.36 L1858.0,620.23 L1859.0,620.11 L1860.0,620.00 L1861.0,619.89 L1862.0,619.79 L1863.0,619.70 L1864.0,619.62 L1865.0,619.54 L1866.0,619.47 L1867.0,619.40 L1868.0,619.33 L1869.0,619.28 L1870.0,619.22 L1871.0,619.17 L1872.0,619.12 L1873.0,619.07 L1874.0,619.03 L1875.0,618.99 L1876.0,618.95 L1877.0,618.92 L1878.0,618.88 L1879.0,618.85 L1880.0,618.82 L1881.0,618.80 L1882.0,618.77 L1883.0,618.75 L1884.0,618.72 L1885.0,618.70 L1886.0,618.68 L1887.0,618.66 L1888.0,618.65 L1889.0,618.63 L1890.0,618.62 L1891.0,618.60 L1892.0,618.59 L1893.0,618.58" fill="none" stroke="#16a2cc" stroke-width="1.3"/>
<rect x="1782.1" y="618.3" width="14" height="11" rx="3" fill="#f6f6f6" stroke="#7a7a7a" stroke-width="0.8"/>
<polygon points="1781.6,623.8 1795.6,616.8 1795.6,623.8" fill="#14f010"/>
<polygon points="1781.6,623.8 1795.6,623.8 1795.6,630.8" fill="#0a5e0a"/>
<rect x="1843.7" y="616.1" width="14" height="11" rx="3" fill="#f6f6f6" stroke="#7a7a7a" stroke-width="0.8"/>
<polygon points="1858.2,621.6 1844.2,614.6 1844.2,621.6" fill="#14f010"/>
<polygon points="1858.2,621.6 1844.2,621.6 1844.2,628.6" fill="#0a5e0a"/>
<circle cx="1819.9" cy="642.8" r="6.5" fill="url(#ball)" stroke="#1a3a1a" stroke-width="0.5"/>
<rect x="1448.4" y="583.4" width="14" height="11" rx="3" fill="#f6f6f6" stroke="#7a7a7a" stroke-width="0.8"/>
<polygon points="1447.9,588.9 1461.9,581.9 1461.9,588.9" fill="#14f010"/>
<polygon points="1447.9,588.9 1461.9,588.9 1461.9,595.9" fill="#0a5e0a"/>
<rect x="1516.2" y="583.5" width="14" height="11" rx="3" fill="#f6f6f6" stroke="#7a7a7a" stroke-width="0.8"/>
<polygon points="1530.7,589.0 1516.7,582.0 1516.7,589.0" fill="#14f010"/>
<polygon points="1530.7,589.0 1516.7,589.0 1516.7,596.0" fill="#0a5e0a"/>
<circle cx="1489.3" cy="569.8" r="6.5" fill="url(#ball)" stroke="#1a3a1a" stroke-width="0.5"/>
<rect x="1607.9" y="584.4" width="14" height="11" rx="3" fill="#f6f6f6" stroke="#7a7a7a" stroke-width="0.8"/>
<polygon points="1607.4,589.9 1621.4,582.9 1621.4,589.9" fill="#14f010"/>
<polygon points="1607.4,589.9 1621.4,589.9 1621.4,596.9" fill="#0a5e0a"/>
<rect x="1648.0" y="584.8" width="14" height="11" rx="3" fill="#f6f6f6" stroke="#7a7a7a" stroke-width="0.8"/>
<polygon points="1662.5,590.3 1648.5,583.3 1648.5,590.3" fill="#14f010"/>
<polygon points="1662.5,590.3 1648.5,590.3 1648.5,597.3" fill="#0a5e0a"/>
<circle cx="1635.0" cy="569.8" r="6.5" fill="url(#ball)" stroke="#1a3a1a" stroke-width="0.5"/>
<rect x="1013.8" y="628.2" width="14" height="11" rx="3" fill="#f6f6f6" stroke="#7a7a7a" stroke-width="0.8"/>
<polygon points="1013.3,633.7 1027.3,626.7 1027.3,633.7" fill="#14f010"/>
<polygon points="1013.3,633.7 1027.3,633.7 1027.3,640.7" fill="#0a5e0a"/>
<rect x="1064.2" y="628.2" width="14" height="11" rx="3" fill="#f6f6f6" stroke="#7a7a7a" stroke-width="0.8"/>
<polygon points="1078.7,633.7 1064.7,626.7 1064.7,633.7" fill="#14f010"/>
<polygon points="1078.7,633.7 1064.7,633.7 1064.7,640.7" fill="#0a5e0a"/>
<circle cx="1046.0" cy="655.0" r="6.5" fill="url(#ball)" stroke="#1a3a1a" stroke-width="0.5"/>
<rect x="899.9" y="564.8" width="14" height="11" rx="3" fill="#f6f6f6" stroke="#7a7a7a" stroke-width="0.8"/>
<polygon points="899.4,570.3 913.4,563.3 913.4,570.3" fill="#14f010"/>
<polygon points="899.4,570.3 913.4,570.3 913.4,577.3" fill="#0a5e0a"/>
<rect x="955.5" y="564.8" width="14" height="11" rx="3" fill="#f6f6f6" stroke="#7a7a7a" stroke-width="0.8"/>
<polygon points="970.0,570.3 956.0,563.3 956.0,570.3" fill="#14f010"/>
<polygon points="970.0,570.3 956.0,570.3 956.0,577.3" fill="#0a5e0a"/>
<circle cx="934.5" cy="545.5" r="6.5" fill="url(#ball)" stroke="#1a3a1a" stroke-width="0.5"/>
</svg>
<div class="al" style="left:730px;top:418px;width:60px">20</div>
<div class="al" style="left:730px;top:989px;width:60px">20</div>
<div class="al" style="left:875px;top:418px;width:60px">50</div>
<div class="al" style="left:875px;top:989px;width:60px">50</div>
<div class="al" style="left:986px;top:418px;width:60px">100</div>
<div class="al" style="left:986px;top:989px;width:60px">100</div>
<div class="al" style="left:1098px;top:418px;width:60px">200</div>
<div class="al" style="left:1098px;top:989px;width:60px">200</div>
<div class="al" style="left:1247px;top:418px;width:60px">500</div>
<div class="al" style="left:1247px;top:989px;width:60px">500</div>
<div class="al" style="left:1360px;top:418px;width:60px">1k</div>
<div class="al" style="left:1360px;top:989px;width:60px">1k</div>
<div class="al" style="left:1473px;top:418px;width:60px">2k</div>
<div class="al" style="left:1473px;top:989px;width:60px">2k</div>
<div class="al" style="left:1622px;top:418px;width:60px">5k</div>
<div class="al" style="left:1622px;top:989px;width:60px">5k</div>
<div class="al" style="left:1735px;top:418px;width:60px">10k</div>
<div class="al" style="left:1735px;top:989px;width:60px">10k</div>
<div class="al" style="left:1847px;top:418px;width:60px">20k</div>
<div class="al" style="left:1847px;top:989px;width:60px">20k</div>
<div class="al" style="left:600px;top:489px;width:50px;text-align:right">10</div>
<div class="al" style="left:1882px;top:489px;width:30px;text-align:right">10</div>
<div class="al" style="left:600px;top:550px;width:50px;text-align:right">5</div>
<div class="al" style="left:1882px;top:550px;width:30px;text-align:right">5</div>
<div class="al" style="left:600px;top:610px;width:50px;text-align:right">0</div>
<div class="al" style="left:1882px;top:610px;width:30px;text-align:right">0</div>
<div class="al" style="left:600px;top:671px;width:50px;text-align:right">-5</div>
<div class="al" style="left:1882px;top:671px;width:30px;text-align:right">-5</div>
<div class="al" style="left:600px;top:732px;width:50px;text-align:right">-10</div>
<div class="al" style="left:1882px;top:732px;width:30px;text-align:right">-10</div>
<div class="al" style="left:600px;top:793px;width:50px;text-align:right">-15</div>
<div class="al" style="left:1882px;top:793px;width:30px;text-align:right">-15</div>
<div class="al" style="left:600px;top:854px;width:50px;text-align:right">-20</div>
<div class="al" style="left:1882px;top:854px;width:30px;text-align:right">-20</div>
<div class="al" style="left:600px;top:915px;width:50px;text-align:right">-25</div>
<div class="al" style="left:1882px;top:915px;width:30px;text-align:right">-25</div>
<div style="position:absolute;left:0;top:1007px;width:1919px;height:1px;background:#7a7f88"></div><div style="position:absolute;left:0;top:1010px;width:1919px;height:2px;background:#eeeeee"></div>
</body></html>
